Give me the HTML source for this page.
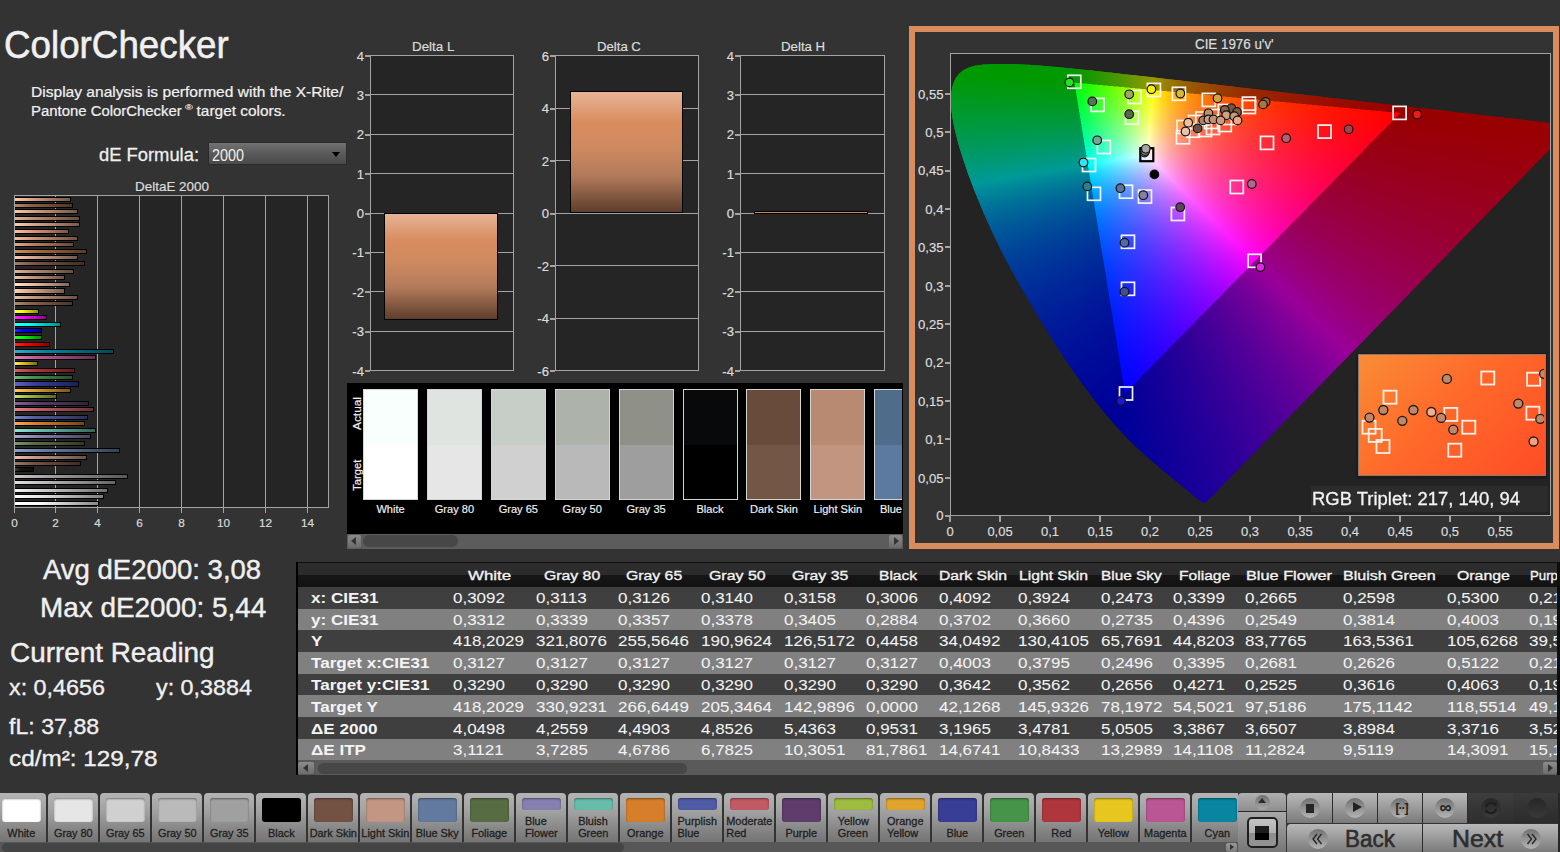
<!DOCTYPE html>
<html><head><meta charset="utf-8"><title>ColorChecker</title>
<style>
html,body{margin:0;padding:0;}
body{width:1560px;height:852px;position:relative;overflow:hidden;background:#333333;font-family:"Liberation Sans",sans-serif;}
.t{position:absolute;white-space:pre;transform-origin:0 0;}
.fb rect{width:9px;height:9px;}
</style></head><body>
<div class="t" style="left:3.80px;top:26.38px;font-size:38.52px;line-height:38.52px;color:#f0f0f0;transform:scaleX(0.9543);-webkit-text-stroke:0.58px #f0f0f0;">ColorChecker</div>
<div class="t" style="left:31.00px;top:83.65px;font-size:15.41px;line-height:15.41px;color:#f0f0f0;transform:scaleX(1.0103);-webkit-text-stroke:0.23px #f0f0f0;">Display analysis is performed with the X-Rite/</div>
<div class="t" style="left:31.00px;top:103.05px;font-size:15.41px;line-height:15.41px;color:#f0f0f0;transform:scaleX(0.9674);-webkit-text-stroke:0.23px #f0f0f0;">Pantone ColorChecker</div>
<div class="t" style="left:184.60px;top:103.93px;font-size:7.99px;line-height:7.99px;color:#f0f0f0;transform:scaleX(1.3239);-webkit-text-stroke:0.12px #f0f0f0;">®</div>
<div class="t" style="left:196.60px;top:103.05px;font-size:15.41px;line-height:15.41px;color:#f0f0f0;-webkit-text-stroke:0.23px #f0f0f0;">target colors.</div>
<div class="t" style="left:99.30px;top:145.57px;font-size:18.46px;line-height:18.46px;color:#f0f0f0;transform:scaleX(0.9957);-webkit-text-stroke:0.28px #f0f0f0;">dE Formula:</div>
<div style="position:absolute;left:207.50px;top:141.50px;width:139.00px;height:23.50px;box-sizing:border-box;border:1px solid #2a2a2a;background:linear-gradient(#727272,#5a5a5a 50%,#4a4a4a);"></div>
<div class="t" style="left:212.20px;top:148.01px;font-size:15.70px;line-height:15.70px;color:#f0f0f0;transform:scaleX(0.9162);-webkit-text-stroke:0px;">2000</div>
<div style="position:absolute;left:332px;top:152px;width:0;height:0;border-left:4.5px solid transparent;border-right:4.5px solid transparent;border-top:5px solid #000;"></div>
<div class="t" style="left:134.70px;top:180.08px;font-size:13.37px;line-height:13.37px;color:#dcdcdc;transform:scaleX(1.0068);-webkit-text-stroke:0.20px #dcdcdc;">DeltaE 2000</div>
<div style="position:absolute;left:14.00px;top:195.00px;width:315.00px;height:313.00px;box-sizing:border-box;background:#252525;border:1px solid #a3a3a3;"></div>
<div style="position:absolute;left:55.00px;top:195.00px;width:1.00px;height:313.00px;background:#a3a3a3;"></div>
<div style="position:absolute;left:97.00px;top:195.00px;width:1.00px;height:313.00px;background:#a3a3a3;"></div>
<div style="position:absolute;left:139.00px;top:195.00px;width:1.00px;height:313.00px;background:#a3a3a3;"></div>
<div style="position:absolute;left:181.00px;top:195.00px;width:1.00px;height:313.00px;background:#a3a3a3;"></div>
<div style="position:absolute;left:223.00px;top:195.00px;width:1.00px;height:313.00px;background:#a3a3a3;"></div>
<div style="position:absolute;left:265.00px;top:195.00px;width:1.00px;height:313.00px;background:#a3a3a3;"></div>
<div style="position:absolute;left:307.00px;top:195.00px;width:1.00px;height:313.00px;background:#a3a3a3;"></div>
<div style="position:absolute;left:14.00px;top:508.00px;width:1.00px;height:5.00px;background:#a3a3a3;"></div>
<div class="t" style="left:11.23px;top:517.43px;font-size:11.77px;line-height:11.77px;color:#dcdcdc;-webkit-text-stroke:0.18px #dcdcdc;">0</div>
<div style="position:absolute;left:55.00px;top:508.00px;width:1.00px;height:5.00px;background:#a3a3a3;"></div>
<div class="t" style="left:52.23px;top:517.43px;font-size:11.77px;line-height:11.77px;color:#dcdcdc;-webkit-text-stroke:0.18px #dcdcdc;">2</div>
<div style="position:absolute;left:97.00px;top:508.00px;width:1.00px;height:5.00px;background:#a3a3a3;"></div>
<div class="t" style="left:94.23px;top:517.43px;font-size:11.77px;line-height:11.77px;color:#dcdcdc;-webkit-text-stroke:0.18px #dcdcdc;">4</div>
<div style="position:absolute;left:139.00px;top:508.00px;width:1.00px;height:5.00px;background:#a3a3a3;"></div>
<div class="t" style="left:136.23px;top:517.43px;font-size:11.77px;line-height:11.77px;color:#dcdcdc;-webkit-text-stroke:0.18px #dcdcdc;">6</div>
<div style="position:absolute;left:181.00px;top:508.00px;width:1.00px;height:5.00px;background:#a3a3a3;"></div>
<div class="t" style="left:178.23px;top:517.43px;font-size:11.77px;line-height:11.77px;color:#dcdcdc;-webkit-text-stroke:0.18px #dcdcdc;">8</div>
<div style="position:absolute;left:223.00px;top:508.00px;width:1.00px;height:5.00px;background:#a3a3a3;"></div>
<div class="t" style="left:216.95px;top:517.43px;font-size:11.77px;line-height:11.77px;color:#dcdcdc;-webkit-text-stroke:0.18px #dcdcdc;">10</div>
<div style="position:absolute;left:265.00px;top:508.00px;width:1.00px;height:5.00px;background:#a3a3a3;"></div>
<div class="t" style="left:258.95px;top:517.43px;font-size:11.77px;line-height:11.77px;color:#dcdcdc;-webkit-text-stroke:0.18px #dcdcdc;">12</div>
<div style="position:absolute;left:307.00px;top:508.00px;width:1.00px;height:5.00px;background:#a3a3a3;"></div>
<div class="t" style="left:300.95px;top:517.43px;font-size:11.77px;line-height:11.77px;color:#dcdcdc;-webkit-text-stroke:0.18px #dcdcdc;">14</div>
<div style="position:absolute;left:15px;top:500.50px;width:84.27px;height:5.2px;box-sizing:border-box;border:1px solid #000;border-width:1.2px 1px 1.5px 0;background:linear-gradient(90deg,rgb(255,255,255),rgb(250,250,250) 30%,rgb(137,137,137));"></div>
<div style="position:absolute;left:15px;top:494.00px;width:88.66px;height:5.2px;box-sizing:border-box;border:1px solid #000;border-width:1.2px 1px 1.5px 0;background:linear-gradient(90deg,rgb(255,255,255),rgb(228,228,228) 30%,rgb(125,125,125));"></div>
<div style="position:absolute;left:15px;top:487.60px;width:93.48px;height:5.2px;box-sizing:border-box;border:1px solid #000;border-width:1.2px 1px 1.5px 0;background:linear-gradient(90deg,rgb(245,245,245),rgb(205,205,205) 30%,rgb(112,112,112));"></div>
<div style="position:absolute;left:15px;top:480.20px;width:101.01px;height:5.2px;box-sizing:border-box;border:1px solid #000;border-width:1.2px 1px 1.5px 0;background:linear-gradient(90deg,rgb(225,225,225),rgb(185,185,185) 30%,rgb(101,101,101));"></div>
<div style="position:absolute;left:15px;top:473.80px;width:113.36px;height:5.2px;box-sizing:border-box;border:1px solid #000;border-width:1.2px 1px 1.5px 0;background:linear-gradient(90deg,rgb(200,200,200),rgb(160,160,160) 30%,rgb(88,88,88));"></div>
<div style="position:absolute;left:15px;top:466.70px;width:19.38px;height:5.2px;box-sizing:border-box;border:1px solid #000;border-width:1.2px 1px 1.5px 0;background:linear-gradient(90deg,rgb(60,60,60),rgb(20,20,20) 30%,rgb(11,11,11));"></div>
<div style="position:absolute;left:15px;top:460.60px;width:66.48px;height:5.2px;box-sizing:border-box;border:1px solid #000;border-width:1.2px 1px 1.5px 0;background:linear-gradient(90deg,rgb(155,122,108),rgb(115,82,68) 30%,rgb(63,45,37));"></div>
<div style="position:absolute;left:15px;top:454.60px;width:72.34px;height:5.2px;box-sizing:border-box;border:1px solid #000;border-width:1.2px 1px 1.5px 0;background:linear-gradient(90deg,rgb(234,190,170),rgb(194,150,130) 30%,rgb(106,82,71));"></div>
<div style="position:absolute;left:15px;top:447.90px;width:105.20px;height:5.2px;box-sizing:border-box;border:1px solid #000;border-width:1.2px 1px 1.5px 0;background:linear-gradient(90deg,rgb(138,162,197),rgb(98,122,157) 30%,rgb(53,67,86));"></div>
<div style="position:absolute;left:15px;top:440.60px;width:70.45px;height:5.2px;box-sizing:border-box;border:1px solid #000;border-width:1.2px 1px 1.5px 0;background:linear-gradient(90deg,rgb(127,148,107),rgb(87,108,67) 30%,rgb(47,59,36));"></div>
<div style="position:absolute;left:15px;top:434.10px;width:75.89px;height:5.2px;box-sizing:border-box;border:1px solid #000;border-width:1.2px 1px 1.5px 0;background:linear-gradient(90deg,rgb(173,168,217),rgb(133,128,177) 30%,rgb(73,70,97));"></div>
<div style="position:absolute;left:15px;top:427.60px;width:81.13px;height:5.2px;box-sizing:border-box;border:1px solid #000;border-width:1.2px 1px 1.5px 0;background:linear-gradient(90deg,rgb(143,229,210),rgb(103,189,170) 30%,rgb(56,103,93));"></div>
<div style="position:absolute;left:15px;top:421.10px;width:70.03px;height:5.2px;box-sizing:border-box;border:1px solid #000;border-width:1.2px 1px 1.5px 0;background:linear-gradient(90deg,rgb(254,166,84),rgb(214,126,44) 30%,rgb(117,69,24));"></div>
<div style="position:absolute;left:15px;top:415.00px;width:73.17px;height:5.2px;box-sizing:border-box;border:1px solid #000;border-width:1.2px 1px 1.5px 0;background:linear-gradient(90deg,rgb(120,131,206),rgb(80,91,166) 30%,rgb(44,50,91));"></div>
<div style="position:absolute;left:15px;top:407.20px;width:79.03px;height:5.2px;box-sizing:border-box;border:1px solid #000;border-width:1.2px 1px 1.5px 0;background:linear-gradient(90deg,rgb(233,130,139),rgb(193,90,99) 30%,rgb(106,49,54));"></div>
<div style="position:absolute;left:15px;top:400.80px;width:74.22px;height:5.2px;box-sizing:border-box;border:1px solid #000;border-width:1.2px 1px 1.5px 0;background:linear-gradient(90deg,rgb(134,100,148),rgb(94,60,108) 30%,rgb(51,33,59));"></div>
<div style="position:absolute;left:15px;top:394.20px;width:41.78px;height:5.2px;box-sizing:border-box;border:1px solid #000;border-width:1.2px 1px 1.5px 0;background:linear-gradient(90deg,rgb(197,228,104),rgb(157,188,64) 30%,rgb(86,103,35));"></div>
<div style="position:absolute;left:15px;top:388.00px;width:56.01px;height:5.2px;box-sizing:border-box;border:1px solid #000;border-width:1.2px 1px 1.5px 0;background:linear-gradient(90deg,rgb(255,203,86),rgb(224,163,46) 30%,rgb(123,89,25));"></div>
<div style="position:absolute;left:15px;top:381.40px;width:63.96px;height:5.2px;box-sizing:border-box;border:1px solid #000;border-width:1.2px 1px 1.5px 0;background:linear-gradient(90deg,rgb(96,101,190),rgb(56,61,150) 30%,rgb(30,33,82));"></div>
<div style="position:absolute;left:15px;top:374.70px;width:58.10px;height:5.2px;box-sizing:border-box;border:1px solid #000;border-width:1.2px 1px 1.5px 0;background:linear-gradient(90deg,rgb(110,188,113),rgb(70,148,73) 30%,rgb(38,81,40));"></div>
<div style="position:absolute;left:15px;top:367.50px;width:59.99px;height:5.2px;box-sizing:border-box;border:1px solid #000;border-width:1.2px 1px 1.5px 0;background:linear-gradient(90deg,rgb(215,94,100),rgb(175,54,60) 30%,rgb(96,29,33));"></div>
<div style="position:absolute;left:15px;top:360.90px;width:22.52px;height:5.2px;box-sizing:border-box;border:1px solid #000;border-width:1.2px 1px 1.5px 0;background:linear-gradient(90deg,rgb(255,239,71),rgb(231,199,31) 30%,rgb(127,109,17));"></div>
<div style="position:absolute;left:15px;top:355.00px;width:81.13px;height:5.2px;box-sizing:border-box;border:1px solid #000;border-width:1.2px 1px 1.5px 0;background:linear-gradient(90deg,rgb(227,126,189),rgb(187,86,149) 30%,rgb(102,47,81));"></div>
<div style="position:absolute;left:15px;top:348.60px;width:98.50px;height:5.2px;box-sizing:border-box;border:1px solid #000;border-width:1.2px 1px 1.5px 0;background:linear-gradient(90deg,rgb(48,173,201),rgb(8,133,161) 30%,rgb(4,73,88));"></div>
<div style="position:absolute;left:15px;top:342.00px;width:34.66px;height:5.2px;box-sizing:border-box;border:1px solid #000;border-width:1.2px 1px 1.5px 0;background:linear-gradient(90deg,rgb(255,40,40),rgb(255,0,0) 30%,rgb(140,0,0));"></div>
<div style="position:absolute;left:15px;top:334.50px;width:26.71px;height:5.2px;box-sizing:border-box;border:1px solid #000;border-width:1.2px 1px 1.5px 0;background:linear-gradient(90deg,rgb(40,255,40),rgb(0,255,0) 30%,rgb(0,140,0));"></div>
<div style="position:absolute;left:15px;top:327.90px;width:26.71px;height:5.2px;box-sizing:border-box;border:1px solid #000;border-width:1.2px 1px 1.5px 0;background:linear-gradient(90deg,rgb(40,40,255),rgb(0,0,255) 30%,rgb(0,0,140));"></div>
<div style="position:absolute;left:15px;top:321.50px;width:45.55px;height:5.2px;box-sizing:border-box;border:1px solid #000;border-width:1.2px 1px 1.5px 0;background:linear-gradient(90deg,rgb(40,255,255),rgb(0,255,255) 30%,rgb(0,140,140));"></div>
<div style="position:absolute;left:15px;top:315.00px;width:31.52px;height:5.2px;box-sizing:border-box;border:1px solid #000;border-width:1.2px 1px 1.5px 0;background:linear-gradient(90deg,rgb(255,40,255),rgb(255,0,255) 30%,rgb(140,0,140));"></div>
<div style="position:absolute;left:15px;top:309.00px;width:23.57px;height:5.2px;box-sizing:border-box;border:1px solid #000;border-width:1.2px 1px 1.5px 0;background:linear-gradient(90deg,rgb(255,255,40),rgb(255,255,0) 30%,rgb(140,140,0));"></div>
<div style="position:absolute;left:15px;top:300.90px;width:57.69px;height:5.2px;box-sizing:border-box;border:1px solid #000;border-width:1.2px 1px 1.5px 0;background:linear-gradient(90deg,rgb(175,138,115),rgb(135,98,75) 30%,rgb(74,53,41));"></div>
<div style="position:absolute;left:15px;top:294.70px;width:62.92px;height:5.2px;box-sizing:border-box;border:1px solid #000;border-width:1.2px 1px 1.5px 0;background:linear-gradient(90deg,rgb(240,190,160),rgb(200,150,120) 30%,rgb(110,82,66));"></div>
<div style="position:absolute;left:15px;top:288.40px;width:49.94px;height:5.2px;box-sizing:border-box;border:1px solid #000;border-width:1.2px 1px 1.5px 0;background:linear-gradient(90deg,rgb(255,210,180),rgb(220,170,140) 30%,rgb(121,93,77));"></div>
<div style="position:absolute;left:15px;top:281.80px;width:54.96px;height:5.2px;box-sizing:border-box;border:1px solid #000;border-width:1.2px 1px 1.5px 0;background:linear-gradient(90deg,rgb(255,230,205),rgb(235,190,165) 30%,rgb(129,104,90));"></div>
<div style="position:absolute;left:15px;top:275.20px;width:49.94px;height:5.2px;box-sizing:border-box;border:1px solid #000;border-width:1.2px 1px 1.5px 0;background:linear-gradient(90deg,rgb(240,195,170),rgb(200,155,130) 30%,rgb(110,85,71));"></div>
<div style="position:absolute;left:15px;top:269.00px;width:58.94px;height:5.2px;box-sizing:border-box;border:1px solid #000;border-width:1.2px 1px 1.5px 0;background:linear-gradient(90deg,rgb(225,180,150),rgb(185,140,110) 30%,rgb(101,77,60));"></div>
<div style="position:absolute;left:15px;top:261.30px;width:70.03px;height:5.2px;box-sizing:border-box;border:1px solid #000;border-width:1.2px 1px 1.5px 0;background:linear-gradient(90deg,rgb(160,125,105),rgb(120,85,65) 30%,rgb(66,46,35));"></div>
<div style="position:absolute;left:15px;top:255.00px;width:62.92px;height:5.2px;box-sizing:border-box;border:1px solid #000;border-width:1.2px 1px 1.5px 0;background:linear-gradient(90deg,rgb(250,205,180),rgb(210,165,140) 30%,rgb(115,90,77));"></div>
<div style="position:absolute;left:15px;top:249.10px;width:72.13px;height:5.2px;box-sizing:border-box;border:1px solid #000;border-width:1.2px 1px 1.5px 0;background:linear-gradient(90deg,rgb(210,145,100),rgb(170,105,60) 30%,rgb(93,57,33));"></div>
<div style="position:absolute;left:15px;top:242.30px;width:58.94px;height:5.2px;box-sizing:border-box;border:1px solid #000;border-width:1.2px 1px 1.5px 0;background:linear-gradient(90deg,rgb(225,170,140),rgb(185,130,100) 30%,rgb(101,71,55));"></div>
<div style="position:absolute;left:15px;top:236.00px;width:62.92px;height:5.2px;box-sizing:border-box;border:1px solid #000;border-width:1.2px 1px 1.5px 0;background:linear-gradient(90deg,rgb(245,190,160),rgb(205,150,120) 30%,rgb(112,82,66));"></div>
<div style="position:absolute;left:15px;top:228.50px;width:53.92px;height:5.2px;box-sizing:border-box;border:1px solid #000;border-width:1.2px 1px 1.5px 0;background:linear-gradient(90deg,rgb(255,190,160),rgb(232,150,120) 30%,rgb(127,82,66));"></div>
<div style="position:absolute;left:15px;top:222.10px;width:65.01px;height:5.2px;box-sizing:border-box;border:1px solid #000;border-width:1.2px 1px 1.5px 0;background:linear-gradient(90deg,rgb(255,205,180),rgb(215,165,140) 30%,rgb(118,90,77));"></div>
<div style="position:absolute;left:15px;top:215.50px;width:65.01px;height:5.2px;box-sizing:border-box;border:1px solid #000;border-width:1.2px 1px 1.5px 0;background:linear-gradient(90deg,rgb(230,180,150),rgb(190,140,110) 30%,rgb(104,77,60));"></div>
<div style="position:absolute;left:15px;top:209.00px;width:62.92px;height:5.2px;box-sizing:border-box;border:1px solid #000;border-width:1.2px 1px 1.5px 0;background:linear-gradient(90deg,rgb(250,200,170),rgb(210,160,130) 30%,rgb(115,88,71));"></div>
<div style="position:absolute;left:15px;top:203.00px;width:57.69px;height:5.2px;box-sizing:border-box;border:1px solid #000;border-width:1.2px 1px 1.5px 0;background:linear-gradient(90deg,rgb(180,136,112),rgb(140,96,72) 30%,rgb(77,52,39));"></div>
<div style="position:absolute;left:15px;top:196.60px;width:56.01px;height:5.2px;box-sizing:border-box;border:1px solid #000;border-width:1.2px 1px 1.5px 0;background:linear-gradient(90deg,rgb(255,200,170),rgb(215,160,130) 30%,rgb(118,88,71));"></div>
<div class="t" style="left:412.40px;top:40.67px;font-size:12.79px;line-height:12.79px;color:#dcdcdc;transform:scaleX(1.0464);-webkit-text-stroke:0.19px #dcdcdc;">Delta L</div>
<div style="position:absolute;left:370.00px;top:55.00px;width:144.00px;height:316.00px;box-sizing:border-box;background:#252525;border:1px solid #a3a3a3;"></div>
<div style="position:absolute;left:365.00px;top:55.00px;width:5.00px;height:1.50px;background:#a3a3a3;"></div>
<div class="t" style="left:356.73px;top:49.52px;font-size:13.08px;line-height:13.08px;color:#dcdcdc;-webkit-text-stroke:0.20px #dcdcdc;">4</div>
<div style="position:absolute;left:370.00px;top:94.00px;width:143.00px;height:1.00px;background:#a3a3a3;"></div>
<div style="position:absolute;left:365.00px;top:94.00px;width:5.00px;height:1.50px;background:#a3a3a3;"></div>
<div class="t" style="left:356.73px;top:88.90px;font-size:13.08px;line-height:13.08px;color:#dcdcdc;-webkit-text-stroke:0.20px #dcdcdc;">3</div>
<div style="position:absolute;left:370.00px;top:134.00px;width:143.00px;height:1.00px;background:#a3a3a3;"></div>
<div style="position:absolute;left:365.00px;top:134.00px;width:5.00px;height:1.50px;background:#a3a3a3;"></div>
<div class="t" style="left:356.73px;top:128.27px;font-size:13.08px;line-height:13.08px;color:#dcdcdc;-webkit-text-stroke:0.20px #dcdcdc;">2</div>
<div style="position:absolute;left:370.00px;top:173.00px;width:143.00px;height:1.00px;background:#a3a3a3;"></div>
<div style="position:absolute;left:365.00px;top:173.00px;width:5.00px;height:1.50px;background:#a3a3a3;"></div>
<div class="t" style="left:356.73px;top:167.65px;font-size:13.08px;line-height:13.08px;color:#dcdcdc;-webkit-text-stroke:0.20px #dcdcdc;">1</div>
<div style="position:absolute;left:370.00px;top:213.00px;width:143.00px;height:1.00px;background:#a3a3a3;"></div>
<div style="position:absolute;left:365.00px;top:213.00px;width:5.00px;height:1.50px;background:#a3a3a3;"></div>
<div class="t" style="left:356.73px;top:207.02px;font-size:13.08px;line-height:13.08px;color:#dcdcdc;-webkit-text-stroke:0.20px #dcdcdc;">0</div>
<div style="position:absolute;left:370.00px;top:252.00px;width:143.00px;height:1.00px;background:#a3a3a3;"></div>
<div style="position:absolute;left:365.00px;top:252.00px;width:5.00px;height:1.50px;background:#a3a3a3;"></div>
<div class="t" style="left:352.37px;top:246.40px;font-size:13.08px;line-height:13.08px;color:#dcdcdc;-webkit-text-stroke:0.20px #dcdcdc;">-1</div>
<div style="position:absolute;left:370.00px;top:291.00px;width:143.00px;height:1.00px;background:#a3a3a3;"></div>
<div style="position:absolute;left:365.00px;top:291.00px;width:5.00px;height:1.50px;background:#a3a3a3;"></div>
<div class="t" style="left:352.37px;top:285.77px;font-size:13.08px;line-height:13.08px;color:#dcdcdc;-webkit-text-stroke:0.20px #dcdcdc;">-2</div>
<div style="position:absolute;left:370.00px;top:331.00px;width:143.00px;height:1.00px;background:#a3a3a3;"></div>
<div style="position:absolute;left:365.00px;top:331.00px;width:5.00px;height:1.50px;background:#a3a3a3;"></div>
<div class="t" style="left:352.37px;top:325.15px;font-size:13.08px;line-height:13.08px;color:#dcdcdc;-webkit-text-stroke:0.20px #dcdcdc;">-3</div>
<div style="position:absolute;left:365.00px;top:370.00px;width:5.00px;height:1.50px;background:#a3a3a3;"></div>
<div class="t" style="left:352.37px;top:364.52px;font-size:13.08px;line-height:13.08px;color:#dcdcdc;-webkit-text-stroke:0.20px #dcdcdc;">-4</div>
<div style="position:absolute;left:384.4px;top:213.0px;width:114.1px;height:106.7px;box-sizing:border-box;border:1px solid #000;background:linear-gradient(#e6b496,#d98c5e 25%,#d08a60 45%,#b27a5a 70%,#5e3e2c);"></div>
<div class="t" style="left:596.50px;top:40.67px;font-size:12.79px;line-height:12.79px;color:#dcdcdc;transform:scaleX(1.0294);-webkit-text-stroke:0.19px #dcdcdc;">Delta C</div>
<div style="position:absolute;left:555.00px;top:55.00px;width:144.00px;height:316.00px;box-sizing:border-box;background:#252525;border:1px solid #a3a3a3;"></div>
<div style="position:absolute;left:550.00px;top:55.00px;width:5.00px;height:1.50px;background:#a3a3a3;"></div>
<div class="t" style="left:541.73px;top:49.52px;font-size:13.08px;line-height:13.08px;color:#dcdcdc;-webkit-text-stroke:0.20px #dcdcdc;">6</div>
<div style="position:absolute;left:555.00px;top:108.00px;width:143.00px;height:1.00px;background:#a3a3a3;"></div>
<div style="position:absolute;left:550.00px;top:108.00px;width:5.00px;height:1.50px;background:#a3a3a3;"></div>
<div class="t" style="left:541.73px;top:102.02px;font-size:13.08px;line-height:13.08px;color:#dcdcdc;-webkit-text-stroke:0.20px #dcdcdc;">4</div>
<div style="position:absolute;left:555.00px;top:160.00px;width:143.00px;height:1.00px;background:#a3a3a3;"></div>
<div style="position:absolute;left:550.00px;top:160.00px;width:5.00px;height:1.50px;background:#a3a3a3;"></div>
<div class="t" style="left:541.73px;top:154.52px;font-size:13.08px;line-height:13.08px;color:#dcdcdc;-webkit-text-stroke:0.20px #dcdcdc;">2</div>
<div style="position:absolute;left:555.00px;top:213.00px;width:143.00px;height:1.00px;background:#a3a3a3;"></div>
<div style="position:absolute;left:550.00px;top:213.00px;width:5.00px;height:1.50px;background:#a3a3a3;"></div>
<div class="t" style="left:541.73px;top:207.02px;font-size:13.08px;line-height:13.08px;color:#dcdcdc;-webkit-text-stroke:0.20px #dcdcdc;">0</div>
<div style="position:absolute;left:555.00px;top:265.00px;width:143.00px;height:1.00px;background:#a3a3a3;"></div>
<div style="position:absolute;left:550.00px;top:265.00px;width:5.00px;height:1.50px;background:#a3a3a3;"></div>
<div class="t" style="left:537.37px;top:259.52px;font-size:13.08px;line-height:13.08px;color:#dcdcdc;-webkit-text-stroke:0.20px #dcdcdc;">-2</div>
<div style="position:absolute;left:555.00px;top:318.00px;width:143.00px;height:1.00px;background:#a3a3a3;"></div>
<div style="position:absolute;left:550.00px;top:318.00px;width:5.00px;height:1.50px;background:#a3a3a3;"></div>
<div class="t" style="left:537.37px;top:312.02px;font-size:13.08px;line-height:13.08px;color:#dcdcdc;-webkit-text-stroke:0.20px #dcdcdc;">-4</div>
<div style="position:absolute;left:550.00px;top:370.00px;width:5.00px;height:1.50px;background:#a3a3a3;"></div>
<div class="t" style="left:537.37px;top:364.52px;font-size:13.08px;line-height:13.08px;color:#dcdcdc;-webkit-text-stroke:0.20px #dcdcdc;">-6</div>
<div style="position:absolute;left:569.5px;top:90.7px;width:113.7px;height:122.3px;box-sizing:border-box;border:1px solid #000;background:linear-gradient(#e6b496,#d98c5e 25%,#d08a60 45%,#b27a5a 70%,#5e3e2c);"></div>
<div class="t" style="left:781.20px;top:40.67px;font-size:12.79px;line-height:12.79px;color:#dcdcdc;transform:scaleX(1.0365);-webkit-text-stroke:0.19px #dcdcdc;">Delta H</div>
<div style="position:absolute;left:740.00px;top:55.00px;width:145.00px;height:316.00px;box-sizing:border-box;background:#252525;border:1px solid #a3a3a3;"></div>
<div style="position:absolute;left:735.00px;top:55.00px;width:5.00px;height:1.50px;background:#a3a3a3;"></div>
<div class="t" style="left:726.73px;top:49.52px;font-size:13.08px;line-height:13.08px;color:#dcdcdc;-webkit-text-stroke:0.20px #dcdcdc;">4</div>
<div style="position:absolute;left:740.00px;top:94.00px;width:144.00px;height:1.00px;background:#a3a3a3;"></div>
<div style="position:absolute;left:735.00px;top:94.00px;width:5.00px;height:1.50px;background:#a3a3a3;"></div>
<div class="t" style="left:726.73px;top:88.90px;font-size:13.08px;line-height:13.08px;color:#dcdcdc;-webkit-text-stroke:0.20px #dcdcdc;">3</div>
<div style="position:absolute;left:740.00px;top:134.00px;width:144.00px;height:1.00px;background:#a3a3a3;"></div>
<div style="position:absolute;left:735.00px;top:134.00px;width:5.00px;height:1.50px;background:#a3a3a3;"></div>
<div class="t" style="left:726.73px;top:128.27px;font-size:13.08px;line-height:13.08px;color:#dcdcdc;-webkit-text-stroke:0.20px #dcdcdc;">2</div>
<div style="position:absolute;left:740.00px;top:173.00px;width:144.00px;height:1.00px;background:#a3a3a3;"></div>
<div style="position:absolute;left:735.00px;top:173.00px;width:5.00px;height:1.50px;background:#a3a3a3;"></div>
<div class="t" style="left:726.73px;top:167.65px;font-size:13.08px;line-height:13.08px;color:#dcdcdc;-webkit-text-stroke:0.20px #dcdcdc;">1</div>
<div style="position:absolute;left:740.00px;top:213.00px;width:144.00px;height:1.00px;background:#a3a3a3;"></div>
<div style="position:absolute;left:735.00px;top:213.00px;width:5.00px;height:1.50px;background:#a3a3a3;"></div>
<div class="t" style="left:726.73px;top:207.02px;font-size:13.08px;line-height:13.08px;color:#dcdcdc;-webkit-text-stroke:0.20px #dcdcdc;">0</div>
<div style="position:absolute;left:740.00px;top:252.00px;width:144.00px;height:1.00px;background:#a3a3a3;"></div>
<div style="position:absolute;left:735.00px;top:252.00px;width:5.00px;height:1.50px;background:#a3a3a3;"></div>
<div class="t" style="left:722.37px;top:246.40px;font-size:13.08px;line-height:13.08px;color:#dcdcdc;-webkit-text-stroke:0.20px #dcdcdc;">-1</div>
<div style="position:absolute;left:740.00px;top:291.00px;width:144.00px;height:1.00px;background:#a3a3a3;"></div>
<div style="position:absolute;left:735.00px;top:291.00px;width:5.00px;height:1.50px;background:#a3a3a3;"></div>
<div class="t" style="left:722.37px;top:285.77px;font-size:13.08px;line-height:13.08px;color:#dcdcdc;-webkit-text-stroke:0.20px #dcdcdc;">-2</div>
<div style="position:absolute;left:740.00px;top:331.00px;width:144.00px;height:1.00px;background:#a3a3a3;"></div>
<div style="position:absolute;left:735.00px;top:331.00px;width:5.00px;height:1.50px;background:#a3a3a3;"></div>
<div class="t" style="left:722.37px;top:325.15px;font-size:13.08px;line-height:13.08px;color:#dcdcdc;-webkit-text-stroke:0.20px #dcdcdc;">-3</div>
<div style="position:absolute;left:735.00px;top:370.00px;width:5.00px;height:1.50px;background:#a3a3a3;"></div>
<div class="t" style="left:722.37px;top:364.52px;font-size:13.08px;line-height:13.08px;color:#dcdcdc;-webkit-text-stroke:0.20px #dcdcdc;">-4</div>
<div style="position:absolute;left:754.2px;top:210.6px;width:114.1px;height:3.0px;box-sizing:border-box;border:1px solid #000;background:linear-gradient(#e6b496,#d98c5e 25%,#d08a60 45%,#b27a5a 70%,#5e3e2c);"></div>
<div style="position:absolute;left:347.00px;top:383.00px;width:556.00px;height:151.00px;background:#000;"></div>
<div style="position:absolute;left:347px;top:383px;width:555px;height:150px;overflow:hidden;">
<div style="position:absolute;left:16.00px;top:6px;width:55px;height:111px;box-sizing:border-box;border:1px solid #d4d4d4;background:linear-gradient(#f8fffc 50%,#ffffff 50%);"></div>
<div class="t" style="left:29.38px;top:120.95px;font-size:11.05px;line-height:11.05px;color:#f0f0f0;-webkit-text-stroke:0.17px #f0f0f0;">White</div>
<div style="position:absolute;left:79.90px;top:6px;width:55px;height:111px;box-sizing:border-box;border:1px solid #d4d4d4;background:linear-gradient(#dfe4e0 50%,#e6e6e6 50%);"></div>
<div class="t" style="left:87.75px;top:120.95px;font-size:11.05px;line-height:11.05px;color:#f0f0f0;-webkit-text-stroke:0.17px #f0f0f0;">Gray 80</div>
<div style="position:absolute;left:143.80px;top:6px;width:55px;height:111px;box-sizing:border-box;border:1px solid #d4d4d4;background:linear-gradient(#c7cec8 50%,#d0d0d0 50%);"></div>
<div class="t" style="left:151.65px;top:120.95px;font-size:11.05px;line-height:11.05px;color:#f0f0f0;-webkit-text-stroke:0.17px #f0f0f0;">Gray 65</div>
<div style="position:absolute;left:207.70px;top:6px;width:55px;height:111px;box-sizing:border-box;border:1px solid #d4d4d4;background:linear-gradient(#adb2ab 50%,#b9b9b9 50%);"></div>
<div class="t" style="left:215.55px;top:120.95px;font-size:11.05px;line-height:11.05px;color:#f0f0f0;-webkit-text-stroke:0.17px #f0f0f0;">Gray 50</div>
<div style="position:absolute;left:271.60px;top:6px;width:55px;height:111px;box-sizing:border-box;border:1px solid #d4d4d4;background:linear-gradient(#8f9189 50%,#9e9e9e 50%);"></div>
<div class="t" style="left:279.45px;top:120.95px;font-size:11.05px;line-height:11.05px;color:#f0f0f0;-webkit-text-stroke:0.17px #f0f0f0;">Gray 35</div>
<div style="position:absolute;left:335.50px;top:6px;width:55px;height:111px;box-sizing:border-box;border:1px solid #d4d4d4;background:linear-gradient(#08090b 50%,#000000 50%);"></div>
<div class="t" style="left:349.48px;top:120.95px;font-size:11.05px;line-height:11.05px;color:#f0f0f0;-webkit-text-stroke:0.17px #f0f0f0;">Black</div>
<div style="position:absolute;left:399.40px;top:6px;width:55px;height:111px;box-sizing:border-box;border:1px solid #d4d4d4;background:linear-gradient(#694b3c 50%,#745646 50%);"></div>
<div class="t" style="left:402.96px;top:120.95px;font-size:11.05px;line-height:11.05px;color:#f0f0f0;-webkit-text-stroke:0.17px #f0f0f0;">Dark Skin</div>
<div style="position:absolute;left:463.30px;top:6px;width:55px;height:111px;box-sizing:border-box;border:1px solid #d4d4d4;background:linear-gradient(#b98a72 50%,#c29580 50%);"></div>
<div class="t" style="left:466.54px;top:120.95px;font-size:11.05px;line-height:11.05px;color:#f0f0f0;-webkit-text-stroke:0.17px #f0f0f0;">Light Skin</div>
<div style="position:absolute;left:527.20px;top:6px;width:55px;height:111px;box-sizing:border-box;border:1px solid #d4d4d4;background:linear-gradient(#4f6c8a 50%,#5c7aa0 50%);"></div>
<div class="t" style="left:532.90px;top:120.95px;font-size:11.05px;line-height:11.05px;color:#f0f0f0;-webkit-text-stroke:0.17px #f0f0f0;">Blue Sky</div>
</div>
<div style="position:absolute;left:338.5px;top:406.5px;width:34px;height:14px;transform:rotate(-90deg);transform-origin:center;"><div class="t" style="left:0.50px;top:1.65px;font-size:11.63px;line-height:11.63px;color:#f0f0f0;transform:scaleX(1.0212);-webkit-text-stroke:0.17px #f0f0f0;">Actual</div></div>
<div style="position:absolute;left:338.5px;top:468px;width:34px;height:14px;transform:rotate(-90deg);transform-origin:center;"><div class="t" style="left:1.35px;top:1.65px;font-size:11.63px;line-height:11.63px;color:#f0f0f0;transform:scaleX(0.9686);-webkit-text-stroke:0.17px #f0f0f0;">Target</div></div>
<div style="position:absolute;left:347.00px;top:534.00px;width:556.00px;height:15.00px;background:#5c5c5c;"></div>
<div style="position:absolute;left:348.00px;top:535.00px;width:13.00px;height:13.00px;background:linear-gradient(#8a8a8a,#6a6a6a);border-radius:2px;"></div>
<div style="position:absolute;left:351px;top:537px;width:0;height:0;border-top:4px solid transparent;border-bottom:4px solid transparent;border-right:5px solid #333;"></div>
<div style="position:absolute;left:363.00px;top:535.00px;width:95.00px;height:12.00px;background:#474747;border-radius:6px;"></div>
<div style="position:absolute;left:889.00px;top:535.00px;width:13.00px;height:13.00px;background:linear-gradient(#8a8a8a,#6a6a6a);border-radius:2px;"></div>
<div style="position:absolute;left:894px;top:537px;width:0;height:0;border-top:4px solid transparent;border-bottom:4px solid transparent;border-left:5px solid #333;"></div>
<div class="t" style="left:43.10px;top:556.06px;font-size:27.33px;line-height:27.33px;color:#f0f0f0;transform:scaleX(1.0061);-webkit-text-stroke:0.41px #f0f0f0;">Avg dE2000: 3,08</div>
<div class="t" style="left:39.50px;top:593.76px;font-size:27.33px;line-height:27.33px;color:#f0f0f0;transform:scaleX(1.0198);-webkit-text-stroke:0.41px #f0f0f0;">Max dE2000: 5,44</div>
<div class="t" style="left:9.90px;top:638.54px;font-size:27.47px;line-height:27.47px;color:#f0f0f0;transform:scaleX(1.0151);-webkit-text-stroke:0.41px #f0f0f0;">Current Reading</div>
<div class="t" style="left:9.00px;top:675.80px;font-size:22.67px;line-height:22.67px;color:#f0f0f0;transform:scaleX(1.0291);-webkit-text-stroke:0.34px #f0f0f0;">x: 0,4656</div>
<div class="t" style="left:156.20px;top:675.80px;font-size:22.67px;line-height:22.67px;color:#f0f0f0;transform:scaleX(1.0291);-webkit-text-stroke:0.34px #f0f0f0;">y: 0,3884</div>
<div class="t" style="left:9.30px;top:714.90px;font-size:22.67px;line-height:22.67px;color:#f0f0f0;transform:scaleX(1.0232);-webkit-text-stroke:0.34px #f0f0f0;">fL: 37,88</div>
<div class="t" style="left:9.30px;top:746.80px;font-size:22.67px;line-height:22.67px;color:#f0f0f0;transform:scaleX(1.0726);-webkit-text-stroke:0.34px #f0f0f0;">cd/m²: 129,78</div>
<div style="position:absolute;left:296.00px;top:562.00px;width:1264.00px;height:213.00px;background:#0e0e0e;"></div>
<div style="position:absolute;left:296px;top:562px;width:1261px;height:213px;overflow:hidden;">
<div style="position:absolute;left:2px;top:1px;width:1300px;height:24px;background:linear-gradient(#2e2e2e,#2a2a2a 50%,#161616 52%,#121212);"></div>
<div style="position:absolute;left:2px;top:25.0px;width:1300px;height:21.6px;background:#3f3f3f;"></div>
<div style="position:absolute;left:2px;top:46.6px;width:1300px;height:21.4px;background:#808080;"></div>
<div style="position:absolute;left:2px;top:68.0px;width:1300px;height:22.0px;background:#3f3f3f;"></div>
<div style="position:absolute;left:2px;top:90.0px;width:1300px;height:21.5px;background:#808080;"></div>
<div style="position:absolute;left:2px;top:111.5px;width:1300px;height:21.5px;background:#3f3f3f;"></div>
<div style="position:absolute;left:2px;top:133.0px;width:1300px;height:22.0px;background:#808080;"></div>
<div style="position:absolute;left:2px;top:155.0px;width:1300px;height:21.5px;background:#3f3f3f;"></div>
<div style="position:absolute;left:2px;top:176.5px;width:1300px;height:21.5px;background:#808080;"></div>
<div class="t" style="left:172.30px;top:7.40px;font-size:13.23px;line-height:13.23px;color:#f2f2f2;transform:scaleX(1.2778);-webkit-text-stroke:0.35px #f2f2f2;">White</div>
<div class="t" style="left:157.30px;top:29.31px;font-size:14.39px;line-height:14.39px;color:#f2f2f2;transform:scaleX(1.1813);-webkit-text-stroke:0.05px #f2f2f2;">0,3092</div>
<div class="t" style="left:157.30px;top:51.01px;font-size:14.39px;line-height:14.39px;color:#f2f2f2;transform:scaleX(1.1813);-webkit-text-stroke:0.05px #f2f2f2;">0,3312</div>
<div class="t" style="left:157.30px;top:72.41px;font-size:14.39px;line-height:14.39px;color:#f2f2f2;transform:scaleX(1.1813);-webkit-text-stroke:0.05px #f2f2f2;">418,2029</div>
<div class="t" style="left:157.30px;top:94.11px;font-size:14.39px;line-height:14.39px;color:#f2f2f2;transform:scaleX(1.1813);-webkit-text-stroke:0.05px #f2f2f2;">0,3127</div>
<div class="t" style="left:157.30px;top:115.91px;font-size:14.39px;line-height:14.39px;color:#f2f2f2;transform:scaleX(1.1813);-webkit-text-stroke:0.05px #f2f2f2;">0,3290</div>
<div class="t" style="left:157.30px;top:138.01px;font-size:14.39px;line-height:14.39px;color:#f2f2f2;transform:scaleX(1.1813);-webkit-text-stroke:0.05px #f2f2f2;">418,2029</div>
<div class="t" style="left:157.30px;top:159.81px;font-size:14.39px;line-height:14.39px;color:#f2f2f2;transform:scaleX(1.1813);-webkit-text-stroke:0.05px #f2f2f2;">4,0498</div>
<div class="t" style="left:157.30px;top:181.11px;font-size:14.39px;line-height:14.39px;color:#f2f2f2;transform:scaleX(1.1813);-webkit-text-stroke:0.05px #f2f2f2;">3,1121</div>
<div class="t" style="left:248.40px;top:7.40px;font-size:13.23px;line-height:13.23px;color:#f2f2f2;transform:scaleX(1.1945);-webkit-text-stroke:0.35px #f2f2f2;">Gray 80</div>
<div class="t" style="left:240.20px;top:29.31px;font-size:14.39px;line-height:14.39px;color:#f2f2f2;transform:scaleX(1.1813);-webkit-text-stroke:0.05px #f2f2f2;">0,3113</div>
<div class="t" style="left:240.20px;top:51.01px;font-size:14.39px;line-height:14.39px;color:#f2f2f2;transform:scaleX(1.1813);-webkit-text-stroke:0.05px #f2f2f2;">0,3339</div>
<div class="t" style="left:240.20px;top:72.41px;font-size:14.39px;line-height:14.39px;color:#f2f2f2;transform:scaleX(1.1813);-webkit-text-stroke:0.05px #f2f2f2;">321,8076</div>
<div class="t" style="left:240.20px;top:94.11px;font-size:14.39px;line-height:14.39px;color:#f2f2f2;transform:scaleX(1.1813);-webkit-text-stroke:0.05px #f2f2f2;">0,3127</div>
<div class="t" style="left:240.20px;top:115.91px;font-size:14.39px;line-height:14.39px;color:#f2f2f2;transform:scaleX(1.1813);-webkit-text-stroke:0.05px #f2f2f2;">0,3290</div>
<div class="t" style="left:240.20px;top:138.01px;font-size:14.39px;line-height:14.39px;color:#f2f2f2;transform:scaleX(1.1813);-webkit-text-stroke:0.05px #f2f2f2;">330,9231</div>
<div class="t" style="left:240.20px;top:159.81px;font-size:14.39px;line-height:14.39px;color:#f2f2f2;transform:scaleX(1.1813);-webkit-text-stroke:0.05px #f2f2f2;">4,2559</div>
<div class="t" style="left:240.20px;top:181.11px;font-size:14.39px;line-height:14.39px;color:#f2f2f2;transform:scaleX(1.1813);-webkit-text-stroke:0.05px #f2f2f2;">3,7285</div>
<div class="t" style="left:330.40px;top:7.40px;font-size:13.23px;line-height:13.23px;color:#f2f2f2;transform:scaleX(1.1945);-webkit-text-stroke:0.35px #f2f2f2;">Gray 65</div>
<div class="t" style="left:322.20px;top:29.31px;font-size:14.39px;line-height:14.39px;color:#f2f2f2;transform:scaleX(1.1813);-webkit-text-stroke:0.05px #f2f2f2;">0,3126</div>
<div class="t" style="left:322.20px;top:51.01px;font-size:14.39px;line-height:14.39px;color:#f2f2f2;transform:scaleX(1.1813);-webkit-text-stroke:0.05px #f2f2f2;">0,3357</div>
<div class="t" style="left:322.20px;top:72.41px;font-size:14.39px;line-height:14.39px;color:#f2f2f2;transform:scaleX(1.1813);-webkit-text-stroke:0.05px #f2f2f2;">255,5646</div>
<div class="t" style="left:322.20px;top:94.11px;font-size:14.39px;line-height:14.39px;color:#f2f2f2;transform:scaleX(1.1813);-webkit-text-stroke:0.05px #f2f2f2;">0,3127</div>
<div class="t" style="left:322.20px;top:115.91px;font-size:14.39px;line-height:14.39px;color:#f2f2f2;transform:scaleX(1.1813);-webkit-text-stroke:0.05px #f2f2f2;">0,3290</div>
<div class="t" style="left:322.20px;top:138.01px;font-size:14.39px;line-height:14.39px;color:#f2f2f2;transform:scaleX(1.1813);-webkit-text-stroke:0.05px #f2f2f2;">266,6449</div>
<div class="t" style="left:322.20px;top:159.81px;font-size:14.39px;line-height:14.39px;color:#f2f2f2;transform:scaleX(1.1813);-webkit-text-stroke:0.05px #f2f2f2;">4,4903</div>
<div class="t" style="left:322.20px;top:181.11px;font-size:14.39px;line-height:14.39px;color:#f2f2f2;transform:scaleX(1.1813);-webkit-text-stroke:0.05px #f2f2f2;">4,6786</div>
<div class="t" style="left:413.30px;top:7.40px;font-size:13.23px;line-height:13.23px;color:#f2f2f2;transform:scaleX(1.2030);-webkit-text-stroke:0.35px #f2f2f2;">Gray 50</div>
<div class="t" style="left:405.10px;top:29.31px;font-size:14.39px;line-height:14.39px;color:#f2f2f2;transform:scaleX(1.1813);-webkit-text-stroke:0.05px #f2f2f2;">0,3140</div>
<div class="t" style="left:405.10px;top:51.01px;font-size:14.39px;line-height:14.39px;color:#f2f2f2;transform:scaleX(1.1813);-webkit-text-stroke:0.05px #f2f2f2;">0,3378</div>
<div class="t" style="left:405.10px;top:72.41px;font-size:14.39px;line-height:14.39px;color:#f2f2f2;transform:scaleX(1.1813);-webkit-text-stroke:0.05px #f2f2f2;">190,9624</div>
<div class="t" style="left:405.10px;top:94.11px;font-size:14.39px;line-height:14.39px;color:#f2f2f2;transform:scaleX(1.1813);-webkit-text-stroke:0.05px #f2f2f2;">0,3127</div>
<div class="t" style="left:405.10px;top:115.91px;font-size:14.39px;line-height:14.39px;color:#f2f2f2;transform:scaleX(1.1813);-webkit-text-stroke:0.05px #f2f2f2;">0,3290</div>
<div class="t" style="left:405.10px;top:138.01px;font-size:14.39px;line-height:14.39px;color:#f2f2f2;transform:scaleX(1.1813);-webkit-text-stroke:0.05px #f2f2f2;">205,3464</div>
<div class="t" style="left:405.10px;top:159.81px;font-size:14.39px;line-height:14.39px;color:#f2f2f2;transform:scaleX(1.1813);-webkit-text-stroke:0.05px #f2f2f2;">4,8526</div>
<div class="t" style="left:405.10px;top:181.11px;font-size:14.39px;line-height:14.39px;color:#f2f2f2;transform:scaleX(1.1813);-webkit-text-stroke:0.05px #f2f2f2;">6,7825</div>
<div class="t" style="left:495.70px;top:7.40px;font-size:13.23px;line-height:13.23px;color:#f2f2f2;transform:scaleX(1.1966);-webkit-text-stroke:0.35px #f2f2f2;">Gray 35</div>
<div class="t" style="left:487.50px;top:29.31px;font-size:14.39px;line-height:14.39px;color:#f2f2f2;transform:scaleX(1.1813);-webkit-text-stroke:0.05px #f2f2f2;">0,3158</div>
<div class="t" style="left:487.50px;top:51.01px;font-size:14.39px;line-height:14.39px;color:#f2f2f2;transform:scaleX(1.1813);-webkit-text-stroke:0.05px #f2f2f2;">0,3405</div>
<div class="t" style="left:487.50px;top:72.41px;font-size:14.39px;line-height:14.39px;color:#f2f2f2;transform:scaleX(1.1813);-webkit-text-stroke:0.05px #f2f2f2;">126,5172</div>
<div class="t" style="left:487.50px;top:94.11px;font-size:14.39px;line-height:14.39px;color:#f2f2f2;transform:scaleX(1.1813);-webkit-text-stroke:0.05px #f2f2f2;">0,3127</div>
<div class="t" style="left:487.50px;top:115.91px;font-size:14.39px;line-height:14.39px;color:#f2f2f2;transform:scaleX(1.1813);-webkit-text-stroke:0.05px #f2f2f2;">0,3290</div>
<div class="t" style="left:487.50px;top:138.01px;font-size:14.39px;line-height:14.39px;color:#f2f2f2;transform:scaleX(1.1813);-webkit-text-stroke:0.05px #f2f2f2;">142,9896</div>
<div class="t" style="left:487.50px;top:159.81px;font-size:14.39px;line-height:14.39px;color:#f2f2f2;transform:scaleX(1.1813);-webkit-text-stroke:0.05px #f2f2f2;">5,4363</div>
<div class="t" style="left:487.50px;top:181.11px;font-size:14.39px;line-height:14.39px;color:#f2f2f2;transform:scaleX(1.1813);-webkit-text-stroke:0.05px #f2f2f2;">10,3051</div>
<div class="t" style="left:582.70px;top:7.40px;font-size:13.23px;line-height:13.23px;color:#f2f2f2;transform:scaleX(1.1802);-webkit-text-stroke:0.35px #f2f2f2;">Black</div>
<div class="t" style="left:570.40px;top:29.31px;font-size:14.39px;line-height:14.39px;color:#f2f2f2;transform:scaleX(1.1813);-webkit-text-stroke:0.05px #f2f2f2;">0,3006</div>
<div class="t" style="left:570.40px;top:51.01px;font-size:14.39px;line-height:14.39px;color:#f2f2f2;transform:scaleX(1.1813);-webkit-text-stroke:0.05px #f2f2f2;">0,2884</div>
<div class="t" style="left:570.40px;top:72.41px;font-size:14.39px;line-height:14.39px;color:#f2f2f2;transform:scaleX(1.1813);-webkit-text-stroke:0.05px #f2f2f2;">0,4458</div>
<div class="t" style="left:570.40px;top:94.11px;font-size:14.39px;line-height:14.39px;color:#f2f2f2;transform:scaleX(1.1813);-webkit-text-stroke:0.05px #f2f2f2;">0,3127</div>
<div class="t" style="left:570.40px;top:115.91px;font-size:14.39px;line-height:14.39px;color:#f2f2f2;transform:scaleX(1.1813);-webkit-text-stroke:0.05px #f2f2f2;">0,3290</div>
<div class="t" style="left:570.40px;top:138.01px;font-size:14.39px;line-height:14.39px;color:#f2f2f2;transform:scaleX(1.1813);-webkit-text-stroke:0.05px #f2f2f2;">0,0000</div>
<div class="t" style="left:570.40px;top:159.81px;font-size:14.39px;line-height:14.39px;color:#f2f2f2;transform:scaleX(1.1813);-webkit-text-stroke:0.05px #f2f2f2;">0,9531</div>
<div class="t" style="left:570.40px;top:181.11px;font-size:14.39px;line-height:14.39px;color:#f2f2f2;transform:scaleX(1.1813);-webkit-text-stroke:0.05px #f2f2f2;">81,7861</div>
<div class="t" style="left:643.30px;top:7.40px;font-size:13.23px;line-height:13.23px;color:#f2f2f2;transform:scaleX(1.1877);-webkit-text-stroke:0.35px #f2f2f2;">Dark Skin</div>
<div class="t" style="left:642.50px;top:29.31px;font-size:14.39px;line-height:14.39px;color:#f2f2f2;transform:scaleX(1.1813);-webkit-text-stroke:0.05px #f2f2f2;">0,4092</div>
<div class="t" style="left:642.50px;top:51.01px;font-size:14.39px;line-height:14.39px;color:#f2f2f2;transform:scaleX(1.1813);-webkit-text-stroke:0.05px #f2f2f2;">0,3702</div>
<div class="t" style="left:642.50px;top:72.41px;font-size:14.39px;line-height:14.39px;color:#f2f2f2;transform:scaleX(1.1813);-webkit-text-stroke:0.05px #f2f2f2;">34,0492</div>
<div class="t" style="left:642.50px;top:94.11px;font-size:14.39px;line-height:14.39px;color:#f2f2f2;transform:scaleX(1.1813);-webkit-text-stroke:0.05px #f2f2f2;">0,4003</div>
<div class="t" style="left:642.50px;top:115.91px;font-size:14.39px;line-height:14.39px;color:#f2f2f2;transform:scaleX(1.1813);-webkit-text-stroke:0.05px #f2f2f2;">0,3642</div>
<div class="t" style="left:642.50px;top:138.01px;font-size:14.39px;line-height:14.39px;color:#f2f2f2;transform:scaleX(1.1813);-webkit-text-stroke:0.05px #f2f2f2;">42,1268</div>
<div class="t" style="left:642.50px;top:159.81px;font-size:14.39px;line-height:14.39px;color:#f2f2f2;transform:scaleX(1.1813);-webkit-text-stroke:0.05px #f2f2f2;">3,1965</div>
<div class="t" style="left:642.50px;top:181.11px;font-size:14.39px;line-height:14.39px;color:#f2f2f2;transform:scaleX(1.1813);-webkit-text-stroke:0.05px #f2f2f2;">14,6741</div>
<div class="t" style="left:723.30px;top:7.40px;font-size:13.23px;line-height:13.23px;color:#f2f2f2;transform:scaleX(1.1860);-webkit-text-stroke:0.35px #f2f2f2;">Light Skin</div>
<div class="t" style="left:721.60px;top:29.31px;font-size:14.39px;line-height:14.39px;color:#f2f2f2;transform:scaleX(1.1813);-webkit-text-stroke:0.05px #f2f2f2;">0,3924</div>
<div class="t" style="left:721.60px;top:51.01px;font-size:14.39px;line-height:14.39px;color:#f2f2f2;transform:scaleX(1.1813);-webkit-text-stroke:0.05px #f2f2f2;">0,3660</div>
<div class="t" style="left:721.60px;top:72.41px;font-size:14.39px;line-height:14.39px;color:#f2f2f2;transform:scaleX(1.1813);-webkit-text-stroke:0.05px #f2f2f2;">130,4105</div>
<div class="t" style="left:721.60px;top:94.11px;font-size:14.39px;line-height:14.39px;color:#f2f2f2;transform:scaleX(1.1813);-webkit-text-stroke:0.05px #f2f2f2;">0,3795</div>
<div class="t" style="left:721.60px;top:115.91px;font-size:14.39px;line-height:14.39px;color:#f2f2f2;transform:scaleX(1.1813);-webkit-text-stroke:0.05px #f2f2f2;">0,3562</div>
<div class="t" style="left:721.60px;top:138.01px;font-size:14.39px;line-height:14.39px;color:#f2f2f2;transform:scaleX(1.1813);-webkit-text-stroke:0.05px #f2f2f2;">145,9326</div>
<div class="t" style="left:721.60px;top:159.81px;font-size:14.39px;line-height:14.39px;color:#f2f2f2;transform:scaleX(1.1813);-webkit-text-stroke:0.05px #f2f2f2;">3,4781</div>
<div class="t" style="left:721.60px;top:181.11px;font-size:14.39px;line-height:14.39px;color:#f2f2f2;transform:scaleX(1.1813);-webkit-text-stroke:0.05px #f2f2f2;">10,8433</div>
<div class="t" style="left:805.30px;top:7.40px;font-size:13.23px;line-height:13.23px;color:#f2f2f2;transform:scaleX(1.1630);-webkit-text-stroke:0.35px #f2f2f2;">Blue Sky</div>
<div class="t" style="left:804.50px;top:29.31px;font-size:14.39px;line-height:14.39px;color:#f2f2f2;transform:scaleX(1.1813);-webkit-text-stroke:0.05px #f2f2f2;">0,2473</div>
<div class="t" style="left:804.50px;top:51.01px;font-size:14.39px;line-height:14.39px;color:#f2f2f2;transform:scaleX(1.1813);-webkit-text-stroke:0.05px #f2f2f2;">0,2735</div>
<div class="t" style="left:804.50px;top:72.41px;font-size:14.39px;line-height:14.39px;color:#f2f2f2;transform:scaleX(1.1813);-webkit-text-stroke:0.05px #f2f2f2;">65,7691</div>
<div class="t" style="left:804.50px;top:94.11px;font-size:14.39px;line-height:14.39px;color:#f2f2f2;transform:scaleX(1.1813);-webkit-text-stroke:0.05px #f2f2f2;">0,2496</div>
<div class="t" style="left:804.50px;top:115.91px;font-size:14.39px;line-height:14.39px;color:#f2f2f2;transform:scaleX(1.1813);-webkit-text-stroke:0.05px #f2f2f2;">0,2656</div>
<div class="t" style="left:804.50px;top:138.01px;font-size:14.39px;line-height:14.39px;color:#f2f2f2;transform:scaleX(1.1813);-webkit-text-stroke:0.05px #f2f2f2;">78,1972</div>
<div class="t" style="left:804.50px;top:159.81px;font-size:14.39px;line-height:14.39px;color:#f2f2f2;transform:scaleX(1.1813);-webkit-text-stroke:0.05px #f2f2f2;">5,0505</div>
<div class="t" style="left:804.50px;top:181.11px;font-size:14.39px;line-height:14.39px;color:#f2f2f2;transform:scaleX(1.1813);-webkit-text-stroke:0.05px #f2f2f2;">13,2989</div>
<div class="t" style="left:882.50px;top:7.40px;font-size:13.23px;line-height:13.23px;color:#f2f2f2;transform:scaleX(1.1801);-webkit-text-stroke:0.35px #f2f2f2;">Foliage</div>
<div class="t" style="left:876.70px;top:29.31px;font-size:14.39px;line-height:14.39px;color:#f2f2f2;transform:scaleX(1.1813);-webkit-text-stroke:0.05px #f2f2f2;">0,3399</div>
<div class="t" style="left:876.70px;top:51.01px;font-size:14.39px;line-height:14.39px;color:#f2f2f2;transform:scaleX(1.1813);-webkit-text-stroke:0.05px #f2f2f2;">0,4396</div>
<div class="t" style="left:876.70px;top:72.41px;font-size:14.39px;line-height:14.39px;color:#f2f2f2;transform:scaleX(1.1813);-webkit-text-stroke:0.05px #f2f2f2;">44,8203</div>
<div class="t" style="left:876.70px;top:94.11px;font-size:14.39px;line-height:14.39px;color:#f2f2f2;transform:scaleX(1.1813);-webkit-text-stroke:0.05px #f2f2f2;">0,3395</div>
<div class="t" style="left:876.70px;top:115.91px;font-size:14.39px;line-height:14.39px;color:#f2f2f2;transform:scaleX(1.1813);-webkit-text-stroke:0.05px #f2f2f2;">0,4271</div>
<div class="t" style="left:876.70px;top:138.01px;font-size:14.39px;line-height:14.39px;color:#f2f2f2;transform:scaleX(1.1813);-webkit-text-stroke:0.05px #f2f2f2;">54,5021</div>
<div class="t" style="left:876.70px;top:159.81px;font-size:14.39px;line-height:14.39px;color:#f2f2f2;transform:scaleX(1.1813);-webkit-text-stroke:0.05px #f2f2f2;">3,3867</div>
<div class="t" style="left:876.70px;top:181.11px;font-size:14.39px;line-height:14.39px;color:#f2f2f2;transform:scaleX(1.1813);-webkit-text-stroke:0.05px #f2f2f2;">14,1108</div>
<div class="t" style="left:950.20px;top:7.40px;font-size:13.23px;line-height:13.23px;color:#f2f2f2;transform:scaleX(1.2328);-webkit-text-stroke:0.35px #f2f2f2;">Blue Flower</div>
<div class="t" style="left:949.30px;top:29.31px;font-size:14.39px;line-height:14.39px;color:#f2f2f2;transform:scaleX(1.1813);-webkit-text-stroke:0.05px #f2f2f2;">0,2665</div>
<div class="t" style="left:949.30px;top:51.01px;font-size:14.39px;line-height:14.39px;color:#f2f2f2;transform:scaleX(1.1813);-webkit-text-stroke:0.05px #f2f2f2;">0,2549</div>
<div class="t" style="left:949.30px;top:72.41px;font-size:14.39px;line-height:14.39px;color:#f2f2f2;transform:scaleX(1.1813);-webkit-text-stroke:0.05px #f2f2f2;">83,7765</div>
<div class="t" style="left:949.30px;top:94.11px;font-size:14.39px;line-height:14.39px;color:#f2f2f2;transform:scaleX(1.1813);-webkit-text-stroke:0.05px #f2f2f2;">0,2681</div>
<div class="t" style="left:949.30px;top:115.91px;font-size:14.39px;line-height:14.39px;color:#f2f2f2;transform:scaleX(1.1813);-webkit-text-stroke:0.05px #f2f2f2;">0,2525</div>
<div class="t" style="left:949.30px;top:138.01px;font-size:14.39px;line-height:14.39px;color:#f2f2f2;transform:scaleX(1.1813);-webkit-text-stroke:0.05px #f2f2f2;">97,5186</div>
<div class="t" style="left:949.30px;top:159.81px;font-size:14.39px;line-height:14.39px;color:#f2f2f2;transform:scaleX(1.1813);-webkit-text-stroke:0.05px #f2f2f2;">3,6507</div>
<div class="t" style="left:949.30px;top:181.11px;font-size:14.39px;line-height:14.39px;color:#f2f2f2;transform:scaleX(1.1813);-webkit-text-stroke:0.05px #f2f2f2;">11,2824</div>
<div class="t" style="left:1047.40px;top:7.40px;font-size:13.23px;line-height:13.23px;color:#f2f2f2;transform:scaleX(1.2123);-webkit-text-stroke:0.35px #f2f2f2;">Bluish Green</div>
<div class="t" style="left:1046.60px;top:29.31px;font-size:14.39px;line-height:14.39px;color:#f2f2f2;transform:scaleX(1.1813);-webkit-text-stroke:0.05px #f2f2f2;">0,2598</div>
<div class="t" style="left:1046.60px;top:51.01px;font-size:14.39px;line-height:14.39px;color:#f2f2f2;transform:scaleX(1.1813);-webkit-text-stroke:0.05px #f2f2f2;">0,3814</div>
<div class="t" style="left:1046.60px;top:72.41px;font-size:14.39px;line-height:14.39px;color:#f2f2f2;transform:scaleX(1.1813);-webkit-text-stroke:0.05px #f2f2f2;">163,5361</div>
<div class="t" style="left:1046.60px;top:94.11px;font-size:14.39px;line-height:14.39px;color:#f2f2f2;transform:scaleX(1.1813);-webkit-text-stroke:0.05px #f2f2f2;">0,2626</div>
<div class="t" style="left:1046.60px;top:115.91px;font-size:14.39px;line-height:14.39px;color:#f2f2f2;transform:scaleX(1.1813);-webkit-text-stroke:0.05px #f2f2f2;">0,3616</div>
<div class="t" style="left:1046.60px;top:138.01px;font-size:14.39px;line-height:14.39px;color:#f2f2f2;transform:scaleX(1.1813);-webkit-text-stroke:0.05px #f2f2f2;">175,1142</div>
<div class="t" style="left:1046.60px;top:159.81px;font-size:14.39px;line-height:14.39px;color:#f2f2f2;transform:scaleX(1.1813);-webkit-text-stroke:0.05px #f2f2f2;">3,8984</div>
<div class="t" style="left:1046.60px;top:181.11px;font-size:14.39px;line-height:14.39px;color:#f2f2f2;transform:scaleX(1.1813);-webkit-text-stroke:0.05px #f2f2f2;">9,5119</div>
<div class="t" style="left:1160.60px;top:7.40px;font-size:13.23px;line-height:13.23px;color:#f2f2f2;transform:scaleX(1.1992);-webkit-text-stroke:0.35px #f2f2f2;">Orange</div>
<div class="t" style="left:1150.80px;top:29.31px;font-size:14.39px;line-height:14.39px;color:#f2f2f2;transform:scaleX(1.1813);-webkit-text-stroke:0.05px #f2f2f2;">0,5300</div>
<div class="t" style="left:1150.80px;top:51.01px;font-size:14.39px;line-height:14.39px;color:#f2f2f2;transform:scaleX(1.1813);-webkit-text-stroke:0.05px #f2f2f2;">0,4003</div>
<div class="t" style="left:1150.80px;top:72.41px;font-size:14.39px;line-height:14.39px;color:#f2f2f2;transform:scaleX(1.1813);-webkit-text-stroke:0.05px #f2f2f2;">105,6268</div>
<div class="t" style="left:1150.80px;top:94.11px;font-size:14.39px;line-height:14.39px;color:#f2f2f2;transform:scaleX(1.1813);-webkit-text-stroke:0.05px #f2f2f2;">0,5122</div>
<div class="t" style="left:1150.80px;top:115.91px;font-size:14.39px;line-height:14.39px;color:#f2f2f2;transform:scaleX(1.1813);-webkit-text-stroke:0.05px #f2f2f2;">0,4063</div>
<div class="t" style="left:1150.80px;top:138.01px;font-size:14.39px;line-height:14.39px;color:#f2f2f2;transform:scaleX(1.1813);-webkit-text-stroke:0.05px #f2f2f2;">118,5514</div>
<div class="t" style="left:1150.80px;top:159.81px;font-size:14.39px;line-height:14.39px;color:#f2f2f2;transform:scaleX(1.1813);-webkit-text-stroke:0.05px #f2f2f2;">3,3716</div>
<div class="t" style="left:1150.80px;top:181.11px;font-size:14.39px;line-height:14.39px;color:#f2f2f2;transform:scaleX(1.1813);-webkit-text-stroke:0.05px #f2f2f2;">14,3091</div>
<div class="t" style="left:1234.00px;top:7.40px;font-size:13.23px;line-height:13.23px;color:#f2f2f2;font-weight:bold;font-weight:normal;-webkit-text-stroke:0.35px #f2f2f2;">Purplish Blue</div>
<div class="t" style="left:1233.20px;top:29.31px;font-size:14.39px;line-height:14.39px;color:#f2f2f2;transform:scaleX(1.1813);-webkit-text-stroke:0.05px #f2f2f2;">0,2110</div>
<div class="t" style="left:1233.20px;top:51.01px;font-size:14.39px;line-height:14.39px;color:#f2f2f2;transform:scaleX(1.1813);-webkit-text-stroke:0.05px #f2f2f2;">0,1950</div>
<div class="t" style="left:1233.20px;top:72.41px;font-size:14.39px;line-height:14.39px;color:#f2f2f2;transform:scaleX(1.1813);-webkit-text-stroke:0.05px #f2f2f2;">39,5510</div>
<div class="t" style="left:1233.20px;top:94.11px;font-size:14.39px;line-height:14.39px;color:#f2f2f2;transform:scaleX(1.1813);-webkit-text-stroke:0.05px #f2f2f2;">0,2110</div>
<div class="t" style="left:1233.20px;top:115.91px;font-size:14.39px;line-height:14.39px;color:#f2f2f2;transform:scaleX(1.1813);-webkit-text-stroke:0.05px #f2f2f2;">0,1960</div>
<div class="t" style="left:1233.20px;top:138.01px;font-size:14.39px;line-height:14.39px;color:#f2f2f2;transform:scaleX(1.1813);-webkit-text-stroke:0.05px #f2f2f2;">49,1560</div>
<div class="t" style="left:1233.20px;top:159.81px;font-size:14.39px;line-height:14.39px;color:#f2f2f2;transform:scaleX(1.1813);-webkit-text-stroke:0.05px #f2f2f2;">3,5260</div>
<div class="t" style="left:1233.20px;top:181.11px;font-size:14.39px;line-height:14.39px;color:#f2f2f2;transform:scaleX(1.1813);-webkit-text-stroke:0.05px #f2f2f2;">15,1470</div>
<div class="t" style="left:14.80px;top:29.31px;font-size:14.39px;line-height:14.39px;color:#f4f4f4;font-weight:bold;transform:scaleX(1.1888);">x: CIE31</div>
<div class="t" style="left:14.80px;top:51.01px;font-size:14.39px;line-height:14.39px;color:#f4f4f4;font-weight:bold;transform:scaleX(1.1888);">y: CIE31</div>
<div class="t" style="left:14.80px;top:72.41px;font-size:14.39px;line-height:14.39px;color:#f4f4f4;font-weight:bold;transform:scaleX(1.1888);">Y</div>
<div class="t" style="left:14.80px;top:94.11px;font-size:14.39px;line-height:14.39px;color:#f4f4f4;font-weight:bold;transform:scaleX(1.1888);">Target x:CIE31</div>
<div class="t" style="left:14.80px;top:115.91px;font-size:14.39px;line-height:14.39px;color:#f4f4f4;font-weight:bold;transform:scaleX(1.1888);">Target y:CIE31</div>
<div class="t" style="left:14.80px;top:138.01px;font-size:14.39px;line-height:14.39px;color:#f4f4f4;font-weight:bold;transform:scaleX(1.1888);">Target Y</div>
<div class="t" style="left:14.80px;top:159.81px;font-size:14.39px;line-height:14.39px;color:#f4f4f4;font-weight:bold;transform:scaleX(1.1888);">ΔE 2000</div>
<div class="t" style="left:14.80px;top:181.11px;font-size:14.39px;line-height:14.39px;color:#f4f4f4;font-weight:bold;transform:scaleX(1.1888);">ΔE ITP</div>
<div style="position:absolute;left:0px;top:198px;width:1300px;height:15px;background:#5a5a5a;"></div>
<div style="position:absolute;left:2px;top:200px;width:16px;height:12px;background:linear-gradient(#8c8c8c,#6c6c6c);border-radius:2px;"></div>
<div style="position:absolute;left:7px;top:202px;width:0;height:0;border-top:4px solid transparent;border-bottom:4px solid transparent;border-right:5px solid #333;"></div>
<div style="position:absolute;left:22px;top:200.5px;width:369px;height:11px;background:#474747;border-radius:6px;"></div>
<div style="position:absolute;left:1247px;top:200px;width:14px;height:12px;background:linear-gradient(#8c8c8c,#6c6c6c);border-radius:2px;"></div>
<div style="position:absolute;left:1252px;top:202px;width:0;height:0;border-top:4px solid transparent;border-bottom:4px solid transparent;border-left:5px solid #333;"></div>
</div>
<div style="position:absolute;left:296.00px;top:562.00px;width:2.00px;height:213.00px;background:#000;"></div>
<div style="position:absolute;left:0;top:788px;width:1238px;height:64px;overflow:hidden;">
<div style="position:absolute;left:-4.00px;top:5px;width:49.7px;height:49px;border-radius:4px 4px 0 0;background:linear-gradient(#b4b4b4,#a0a0a0 40%,#828282 80%,#747474);"></div>
<div style="position:absolute;left:1.80px;top:10px;width:39px;height:24px;border-radius:3px;background:#ffffff;box-shadow:inset 0 1px 2px rgba(0,0,0,0.45);"></div>
<div class="t" style="left:7.37px;top:40.17px;font-size:10.90px;line-height:10.90px;color:#1e1e1e;-webkit-text-stroke:0.3px #1e1e1e;">White</div>
<div style="position:absolute;left:48.00px;top:5px;width:49.7px;height:49px;border-radius:4px 4px 0 0;background:linear-gradient(#b4b4b4,#a0a0a0 40%,#828282 80%,#747474);"></div>
<div style="position:absolute;left:53.80px;top:10px;width:39px;height:24px;border-radius:3px;background:#e6e6e6;box-shadow:inset 0 1px 2px rgba(0,0,0,0.45);"></div>
<div class="t" style="left:53.91px;top:40.17px;font-size:10.90px;line-height:10.90px;color:#1e1e1e;-webkit-text-stroke:0.3px #1e1e1e;">Gray 80</div>
<div style="position:absolute;left:100.00px;top:5px;width:49.7px;height:49px;border-radius:4px 4px 0 0;background:linear-gradient(#b4b4b4,#a0a0a0 40%,#828282 80%,#747474);"></div>
<div style="position:absolute;left:105.80px;top:10px;width:39px;height:24px;border-radius:3px;background:#d0d0d0;box-shadow:inset 0 1px 2px rgba(0,0,0,0.45);"></div>
<div class="t" style="left:105.91px;top:40.17px;font-size:10.90px;line-height:10.90px;color:#1e1e1e;-webkit-text-stroke:0.3px #1e1e1e;">Gray 65</div>
<div style="position:absolute;left:152.00px;top:5px;width:49.7px;height:49px;border-radius:4px 4px 0 0;background:linear-gradient(#b4b4b4,#a0a0a0 40%,#828282 80%,#747474);"></div>
<div style="position:absolute;left:157.80px;top:10px;width:39px;height:24px;border-radius:3px;background:#bababa;box-shadow:inset 0 1px 2px rgba(0,0,0,0.45);"></div>
<div class="t" style="left:157.91px;top:40.17px;font-size:10.90px;line-height:10.90px;color:#1e1e1e;-webkit-text-stroke:0.3px #1e1e1e;">Gray 50</div>
<div style="position:absolute;left:204.00px;top:5px;width:49.7px;height:49px;border-radius:4px 4px 0 0;background:linear-gradient(#b4b4b4,#a0a0a0 40%,#828282 80%,#747474);"></div>
<div style="position:absolute;left:209.80px;top:10px;width:39px;height:24px;border-radius:3px;background:#a0a0a0;box-shadow:inset 0 1px 2px rgba(0,0,0,0.45);"></div>
<div class="t" style="left:209.91px;top:40.17px;font-size:10.90px;line-height:10.90px;color:#1e1e1e;-webkit-text-stroke:0.3px #1e1e1e;">Gray 35</div>
<div style="position:absolute;left:256.00px;top:5px;width:49.7px;height:49px;border-radius:4px 4px 0 0;background:linear-gradient(#b4b4b4,#a0a0a0 40%,#828282 80%,#747474);"></div>
<div style="position:absolute;left:261.80px;top:10px;width:39px;height:24px;border-radius:3px;background:#000000;box-shadow:inset 0 1px 2px rgba(0,0,0,0.45);"></div>
<div class="t" style="left:267.96px;top:40.17px;font-size:10.90px;line-height:10.90px;color:#1e1e1e;-webkit-text-stroke:0.3px #1e1e1e;">Black</div>
<div style="position:absolute;left:308.00px;top:5px;width:49.7px;height:49px;border-radius:4px 4px 0 0;background:linear-gradient(#b4b4b4,#a0a0a0 40%,#828282 80%,#747474);"></div>
<div style="position:absolute;left:313.80px;top:10px;width:39px;height:24px;border-radius:3px;background:#735244;box-shadow:inset 0 1px 2px rgba(0,0,0,0.45);"></div>
<div class="t" style="left:309.67px;top:40.17px;font-size:10.90px;line-height:10.90px;color:#1e1e1e;-webkit-text-stroke:0.3px #1e1e1e;">Dark Skin</div>
<div style="position:absolute;left:360.00px;top:5px;width:49.7px;height:49px;border-radius:4px 4px 0 0;background:linear-gradient(#b4b4b4,#a0a0a0 40%,#828282 80%,#747474);"></div>
<div style="position:absolute;left:365.80px;top:10px;width:39px;height:24px;border-radius:3px;background:#c29682;box-shadow:inset 0 1px 2px rgba(0,0,0,0.45);"></div>
<div class="t" style="left:361.36px;top:40.17px;font-size:10.90px;line-height:10.90px;color:#1e1e1e;-webkit-text-stroke:0.3px #1e1e1e;">Light Skin</div>
<div style="position:absolute;left:412.00px;top:5px;width:49.7px;height:49px;border-radius:4px 4px 0 0;background:linear-gradient(#b4b4b4,#a0a0a0 40%,#828282 80%,#747474);"></div>
<div style="position:absolute;left:417.80px;top:10px;width:39px;height:24px;border-radius:3px;background:#627a9d;box-shadow:inset 0 1px 2px rgba(0,0,0,0.45);"></div>
<div class="t" style="left:415.79px;top:40.17px;font-size:10.90px;line-height:10.90px;color:#1e1e1e;-webkit-text-stroke:0.3px #1e1e1e;">Blue Sky</div>
<div style="position:absolute;left:464.00px;top:5px;width:49.7px;height:49px;border-radius:4px 4px 0 0;background:linear-gradient(#b4b4b4,#a0a0a0 40%,#828282 80%,#747474);"></div>
<div style="position:absolute;left:469.80px;top:10px;width:39px;height:24px;border-radius:3px;background:#576c43;box-shadow:inset 0 1px 2px rgba(0,0,0,0.45);"></div>
<div class="t" style="left:471.42px;top:40.17px;font-size:10.90px;line-height:10.90px;color:#1e1e1e;-webkit-text-stroke:0.3px #1e1e1e;">Foliage</div>
<div style="position:absolute;left:516.00px;top:5px;width:49.7px;height:49px;border-radius:4px 4px 0 0;background:linear-gradient(#b4b4b4,#a0a0a0 40%,#828282 80%,#747474);"></div>
<div style="position:absolute;left:521.80px;top:10px;width:39px;height:12px;border-radius:3px;background:#8580b1;box-shadow:inset 0 1px 2px rgba(0,0,0,0.45);"></div>
<div class="t" style="left:524.94px;top:28.07px;font-size:10.90px;line-height:10.90px;color:#1e1e1e;-webkit-text-stroke:0.3px #1e1e1e;">Blue</div>
<div class="t" style="left:524.94px;top:40.17px;font-size:10.90px;line-height:10.90px;color:#1e1e1e;-webkit-text-stroke:0.3px #1e1e1e;">Flower</div>
<div style="position:absolute;left:568.00px;top:5px;width:49.7px;height:49px;border-radius:4px 4px 0 0;background:linear-gradient(#b4b4b4,#a0a0a0 40%,#828282 80%,#747474);"></div>
<div style="position:absolute;left:573.80px;top:10px;width:39px;height:12px;border-radius:3px;background:#67bdaa;box-shadow:inset 0 1px 2px rgba(0,0,0,0.45);"></div>
<div class="t" style="left:578.15px;top:28.07px;font-size:10.90px;line-height:10.90px;color:#1e1e1e;-webkit-text-stroke:0.3px #1e1e1e;">Bluish</div>
<div class="t" style="left:578.15px;top:40.17px;font-size:10.90px;line-height:10.90px;color:#1e1e1e;-webkit-text-stroke:0.3px #1e1e1e;">Green</div>
<div style="position:absolute;left:620.00px;top:5px;width:49.7px;height:49px;border-radius:4px 4px 0 0;background:linear-gradient(#b4b4b4,#a0a0a0 40%,#828282 80%,#747474);"></div>
<div style="position:absolute;left:625.80px;top:10px;width:39px;height:24px;border-radius:3px;background:#d67e2c;box-shadow:inset 0 1px 2px rgba(0,0,0,0.45);"></div>
<div class="t" style="left:627.12px;top:40.17px;font-size:10.90px;line-height:10.90px;color:#1e1e1e;-webkit-text-stroke:0.3px #1e1e1e;">Orange</div>
<div style="position:absolute;left:672.00px;top:5px;width:49.7px;height:49px;border-radius:4px 4px 0 0;background:linear-gradient(#b4b4b4,#a0a0a0 40%,#828282 80%,#747474);"></div>
<div style="position:absolute;left:677.80px;top:10px;width:39px;height:12px;border-radius:3px;background:#505ba6;box-shadow:inset 0 1px 2px rgba(0,0,0,0.45);"></div>
<div class="t" style="left:677.61px;top:28.07px;font-size:10.90px;line-height:10.90px;color:#1e1e1e;-webkit-text-stroke:0.3px #1e1e1e;">Purplish</div>
<div class="t" style="left:677.61px;top:40.17px;font-size:10.90px;line-height:10.90px;color:#1e1e1e;-webkit-text-stroke:0.3px #1e1e1e;">Blue</div>
<div style="position:absolute;left:724.00px;top:5px;width:49.7px;height:49px;border-radius:4px 4px 0 0;background:linear-gradient(#b4b4b4,#a0a0a0 40%,#828282 80%,#747474);"></div>
<div style="position:absolute;left:729.80px;top:10px;width:39px;height:12px;border-radius:3px;background:#c15a63;box-shadow:inset 0 1px 2px rgba(0,0,0,0.45);"></div>
<div class="t" style="left:726.27px;top:28.07px;font-size:10.90px;line-height:10.90px;color:#1e1e1e;-webkit-text-stroke:0.3px #1e1e1e;">Moderate</div>
<div class="t" style="left:726.27px;top:40.17px;font-size:10.90px;line-height:10.90px;color:#1e1e1e;-webkit-text-stroke:0.3px #1e1e1e;">Red</div>
<div style="position:absolute;left:776.00px;top:5px;width:49.7px;height:49px;border-radius:4px 4px 0 0;background:linear-gradient(#b4b4b4,#a0a0a0 40%,#828282 80%,#747474);"></div>
<div style="position:absolute;left:781.80px;top:10px;width:39px;height:24px;border-radius:3px;background:#5e3c6c;box-shadow:inset 0 1px 2px rgba(0,0,0,0.45);"></div>
<div class="t" style="left:785.54px;top:40.17px;font-size:10.90px;line-height:10.90px;color:#1e1e1e;-webkit-text-stroke:0.3px #1e1e1e;">Purple</div>
<div style="position:absolute;left:828.00px;top:5px;width:49.7px;height:49px;border-radius:4px 4px 0 0;background:linear-gradient(#b4b4b4,#a0a0a0 40%,#828282 80%,#747474);"></div>
<div style="position:absolute;left:833.80px;top:10px;width:39px;height:12px;border-radius:3px;background:#9dbc40;box-shadow:inset 0 1px 2px rgba(0,0,0,0.45);"></div>
<div class="t" style="left:837.73px;top:28.07px;font-size:10.90px;line-height:10.90px;color:#1e1e1e;-webkit-text-stroke:0.3px #1e1e1e;">Yellow</div>
<div class="t" style="left:837.73px;top:40.17px;font-size:10.90px;line-height:10.90px;color:#1e1e1e;-webkit-text-stroke:0.3px #1e1e1e;">Green</div>
<div style="position:absolute;left:880.00px;top:5px;width:49.7px;height:49px;border-radius:4px 4px 0 0;background:linear-gradient(#b4b4b4,#a0a0a0 40%,#828282 80%,#747474);"></div>
<div style="position:absolute;left:885.80px;top:10px;width:39px;height:12px;border-radius:3px;background:#e0a32e;box-shadow:inset 0 1px 2px rgba(0,0,0,0.45);"></div>
<div class="t" style="left:887.12px;top:28.07px;font-size:10.90px;line-height:10.90px;color:#1e1e1e;-webkit-text-stroke:0.3px #1e1e1e;">Orange</div>
<div class="t" style="left:887.12px;top:40.17px;font-size:10.90px;line-height:10.90px;color:#1e1e1e;-webkit-text-stroke:0.3px #1e1e1e;">Yellow</div>
<div style="position:absolute;left:932.00px;top:5px;width:49.7px;height:49px;border-radius:4px 4px 0 0;background:linear-gradient(#b4b4b4,#a0a0a0 40%,#828282 80%,#747474);"></div>
<div style="position:absolute;left:937.80px;top:10px;width:39px;height:24px;border-radius:3px;background:#383d96;box-shadow:inset 0 1px 2px rgba(0,0,0,0.45);"></div>
<div class="t" style="left:946.39px;top:40.17px;font-size:10.90px;line-height:10.90px;color:#1e1e1e;-webkit-text-stroke:0.3px #1e1e1e;">Blue</div>
<div style="position:absolute;left:984.00px;top:5px;width:49.7px;height:49px;border-radius:4px 4px 0 0;background:linear-gradient(#b4b4b4,#a0a0a0 40%,#828282 80%,#747474);"></div>
<div style="position:absolute;left:989.80px;top:10px;width:39px;height:24px;border-radius:3px;background:#469449;box-shadow:inset 0 1px 2px rgba(0,0,0,0.45);"></div>
<div class="t" style="left:994.15px;top:40.17px;font-size:10.90px;line-height:10.90px;color:#1e1e1e;-webkit-text-stroke:0.3px #1e1e1e;">Green</div>
<div style="position:absolute;left:1036.00px;top:5px;width:49.7px;height:49px;border-radius:4px 4px 0 0;background:linear-gradient(#b4b4b4,#a0a0a0 40%,#828282 80%,#747474);"></div>
<div style="position:absolute;left:1041.80px;top:10px;width:39px;height:24px;border-radius:3px;background:#af363c;box-shadow:inset 0 1px 2px rgba(0,0,0,0.45);"></div>
<div class="t" style="left:1051.30px;top:40.17px;font-size:10.90px;line-height:10.90px;color:#1e1e1e;-webkit-text-stroke:0.3px #1e1e1e;">Red</div>
<div style="position:absolute;left:1088.00px;top:5px;width:49.7px;height:49px;border-radius:4px 4px 0 0;background:linear-gradient(#b4b4b4,#a0a0a0 40%,#828282 80%,#747474);"></div>
<div style="position:absolute;left:1093.80px;top:10px;width:39px;height:24px;border-radius:3px;background:#e7c71f;box-shadow:inset 0 1px 2px rgba(0,0,0,0.45);"></div>
<div class="t" style="left:1097.73px;top:40.17px;font-size:10.90px;line-height:10.90px;color:#1e1e1e;-webkit-text-stroke:0.3px #1e1e1e;">Yellow</div>
<div style="position:absolute;left:1140.00px;top:5px;width:49.7px;height:49px;border-radius:4px 4px 0 0;background:linear-gradient(#b4b4b4,#a0a0a0 40%,#828282 80%,#747474);"></div>
<div style="position:absolute;left:1145.80px;top:10px;width:39px;height:24px;border-radius:3px;background:#bb5695;box-shadow:inset 0 1px 2px rgba(0,0,0,0.45);"></div>
<div class="t" style="left:1144.09px;top:40.17px;font-size:10.90px;line-height:10.90px;color:#1e1e1e;-webkit-text-stroke:0.3px #1e1e1e;">Magenta</div>
<div style="position:absolute;left:1192.00px;top:5px;width:49.7px;height:49px;border-radius:4px 4px 0 0;background:linear-gradient(#b4b4b4,#a0a0a0 40%,#828282 80%,#747474);"></div>
<div style="position:absolute;left:1197.80px;top:10px;width:39px;height:24px;border-radius:3px;background:#0885a1;box-shadow:inset 0 1px 2px rgba(0,0,0,0.45);"></div>
<div class="t" style="left:1204.58px;top:40.17px;font-size:10.90px;line-height:10.90px;color:#1e1e1e;-webkit-text-stroke:0.3px #1e1e1e;">Cyan</div>
</div>
<div style="position:absolute;left:0.00px;top:842.00px;width:1238.00px;height:10.00px;background:#575757;"></div>
<div style="position:absolute;left:2.00px;top:843.00px;width:622.00px;height:9.00px;background:#444;border-radius:5px;"></div>
<div style="position:absolute;left:1226.00px;top:842.50px;width:11.00px;height:9.50px;background:linear-gradient(#9a9a9a,#7a7a7a);border-radius:2px;"></div>
<div style="position:absolute;left:1229.5px;top:844px;width:0;height:0;border-top:3.5px solid transparent;border-bottom:3.5px solid transparent;border-left:4.5px solid #333;"></div>
<div style="position:absolute;left:1238.00px;top:793.00px;width:48.00px;height:18.00px;border-radius:4px 4px 0 0;background:linear-gradient(#b0b0b0,#8e8e8e);"></div>
<div style="position:absolute;left:1255px;top:794.5px;width:15px;height:15px;border-radius:50%;background:linear-gradient(#707070,#a8a8a8);"></div>
<div style="position:absolute;left:1258px;top:798px;width:0;height:0;border-left:4.5px solid transparent;border-right:4.5px solid transparent;border-bottom:5px solid #2a2a2a;"></div>
<div style="position:absolute;left:1238.00px;top:811.00px;width:48.00px;height:1.00px;background:#2a2a2a;"></div>
<div style="position:absolute;left:1238.00px;top:812.00px;width:48.00px;height:40.00px;background:linear-gradient(#a8a8a8,#8a8a8a 60%,#767676);"></div>
<div style="position:absolute;left:1246.5px;top:817.3px;width:31px;height:30.5px;box-sizing:border-box;border:2.8px solid #1e1e1e;border-radius:5px;background:linear-gradient(#c4c4c4,#b0b0b0 50%,#8e8e8e 52%,#949494);"></div>
<div style="position:absolute;left:1255px;top:826px;width:13.5px;height:13.5px;background:linear-gradient(#1c1c1c 50%,#000 50%);"></div>
<div style="position:absolute;left:1287.00px;top:793.00px;width:45.00px;height:30.00px;border-radius:4px 0 0 0;background:linear-gradient(#b8b8b8,#a4a4a4 35%,#8a8a8a 75%,#7a7a7a);"></div>
<div style="position:absolute;left:1332.00px;top:793.00px;width:1.00px;height:30.00px;background:#2c2c2c;"></div>
<div style="position:absolute;left:1299.5px;top:798px;width:20px;height:20px;border-radius:50%;background:linear-gradient(#707070,#b4b4b4);"></div>
<div style="position:absolute;left:1333.00px;top:793.00px;width:44.00px;height:30.00px;border-radius:0;background:linear-gradient(#b8b8b8,#a4a4a4 35%,#8a8a8a 75%,#7a7a7a);"></div>
<div style="position:absolute;left:1377.00px;top:793.00px;width:1.00px;height:30.00px;background:#2c2c2c;"></div>
<div style="position:absolute;left:1345.0px;top:798px;width:20px;height:20px;border-radius:50%;background:linear-gradient(#707070,#b4b4b4);"></div>
<div style="position:absolute;left:1378.00px;top:793.00px;width:44.00px;height:30.00px;border-radius:0;background:linear-gradient(#b8b8b8,#a4a4a4 35%,#8a8a8a 75%,#7a7a7a);"></div>
<div style="position:absolute;left:1422.00px;top:793.00px;width:1.00px;height:30.00px;background:#2c2c2c;"></div>
<div style="position:absolute;left:1390.0px;top:798px;width:20px;height:20px;border-radius:50%;background:linear-gradient(#707070,#b4b4b4);"></div>
<div style="position:absolute;left:1423.00px;top:793.00px;width:44.00px;height:30.00px;border-radius:0;background:linear-gradient(#b8b8b8,#a4a4a4 35%,#8a8a8a 75%,#7a7a7a);"></div>
<div style="position:absolute;left:1467.00px;top:793.00px;width:1.00px;height:30.00px;background:#2c2c2c;"></div>
<div style="position:absolute;left:1435.0px;top:798px;width:20px;height:20px;border-radius:50%;background:linear-gradient(#707070,#b4b4b4);"></div>
<div style="position:absolute;left:1468.00px;top:793.00px;width:45.00px;height:30.00px;background:linear-gradient(#3e3e3e,#2e2e2e);"></div>
<div style="position:absolute;left:1513.00px;top:793.00px;width:47.00px;height:30.00px;background:linear-gradient(#3a3a3a,#2c2c2c);"></div>
<div style="position:absolute;left:1480.5px;top:798px;width:20px;height:20px;border-radius:50%;background:linear-gradient(#262626,#3a3a3a);"></div>
<div style="position:absolute;left:1526.5px;top:798px;width:20px;height:20px;border-radius:50%;background:linear-gradient(#262626,#3a3a3a);"></div>
<div style="position:absolute;left:1305.70px;top:804.00px;width:8.00px;height:8.50px;background:#262626;"></div>
<div style="position:absolute;left:1353px;top:802px;width:0;height:0;border-top:5.5px solid transparent;border-bottom:5.5px solid transparent;border-left:9px solid #222;"></div>
<div style="position:absolute;left:1393px;top:799px;width:17px;height:18px;font:bold 12px/18px 'Liberation Sans',sans-serif;color:#222;text-align:center;letter-spacing:-1px;">[··]</div>
<div style="position:absolute;left:1435.5px;top:798px;width:20px;height:20px;font:bold 17px/19px 'Liberation Sans',sans-serif;color:#222;text-align:center;">∞</div>
<svg style="position:absolute;left:1480.5px;top:798px" width="20" height="20" viewBox="0 0 20 20"><path d="M5 9 A5 5 0 0 1 14 7 M15 11 A5 5 0 0 1 6 13" stroke="#1e1e1e" stroke-width="2" fill="none"/><path d="M12 5 L16 5 L15 9 Z M8 15 L4 15 L5 11 Z" fill="#1e1e1e"/></svg>
<div style="position:absolute;left:1287.00px;top:824.00px;width:135.00px;height:28.00px;border-radius:4px 0 0 0;background:linear-gradient(#b8b8b8,#a4a4a4 35%,#8a8a8a 75%,#7a7a7a);"></div>
<div style="position:absolute;left:1422.00px;top:824.00px;width:1.20px;height:28.00px;background:#2c2c2c;"></div>
<div style="position:absolute;left:1423.20px;top:824.00px;width:137.00px;height:28.00px;background:linear-gradient(#b8b8b8,#a4a4a4 35%,#8a8a8a 75%,#7a7a7a);"></div>
<div style="position:absolute;left:1308px;top:828.8px;width:20px;height:20px;border-radius:50%;background:linear-gradient(#727272,#b4b4b4);"></div>
<div style="position:absolute;left:1521px;top:828.8px;width:20px;height:20px;border-radius:50%;background:linear-gradient(#727272,#b4b4b4);"></div>
<svg style="position:absolute;left:1308px;top:828.8px" width="20" height="20" viewBox="0 0 20 20"><path d="M9 5 L5 10 L9 15 M13.5 5 L9.5 10 L13.5 15" stroke="#262626" stroke-width="1.4" fill="none"/></svg>
<svg style="position:absolute;left:1521px;top:828.8px" width="20" height="20" viewBox="0 0 20 20"><path d="M6.5 5 L10.5 10 L6.5 15 M11 5 L15 10 L11 15" stroke="#262626" stroke-width="1.4" fill="none"/></svg>
<div style="position:absolute;left:1558.00px;top:793.00px;width:2.00px;height:59.00px;background:#262626;"></div>
<div class="t" style="left:1344.70px;top:828.01px;font-size:23.26px;line-height:23.26px;color:#2e2e2e;transform:scaleX(0.9663);-webkit-text-stroke:0.6px #2e2e2e;">Back</div>
<div class="t" style="left:1451.60px;top:828.01px;font-size:23.26px;line-height:23.26px;color:#2e2e2e;transform:scaleX(1.0708);-webkit-text-stroke:0.6px #2e2e2e;">Next</div>
<div style="position:absolute;left:909.00px;top:26.00px;width:650.00px;height:523.00px;box-sizing:border-box;border:6px solid #d98c5e;background:#333333;"></div>
<div class="t" style="left:1194.80px;top:37.61px;font-size:13.81px;line-height:13.81px;color:#dcdcdc;transform:scaleX(0.9685);-webkit-text-stroke:0.21px #dcdcdc;">CIE 1976 u'v'</div>
<div style="position:absolute;left:950.00px;top:53.00px;width:601.00px;height:463.00px;box-sizing:border-box;background:#232323;border:1px solid #a3a3a3;"></div>
<div style="position:absolute;left:944.70px;top:515.40px;width:5.30px;height:1.20px;background:#a3a3a3;"></div>
<div class="t" style="left:936.23px;top:509.22px;font-size:13.08px;line-height:13.08px;color:#dcdcdc;-webkit-text-stroke:0.20px #dcdcdc;">0</div>
<div style="position:absolute;left:944.70px;top:477.40px;width:5.30px;height:1.20px;background:#a3a3a3;"></div>
<div class="t" style="left:918.04px;top:471.62px;font-size:13.08px;line-height:13.08px;color:#dcdcdc;-webkit-text-stroke:0.20px #dcdcdc;">0,05</div>
<div style="position:absolute;left:944.70px;top:438.40px;width:5.30px;height:1.20px;background:#a3a3a3;"></div>
<div class="t" style="left:925.32px;top:433.22px;font-size:13.08px;line-height:13.08px;color:#dcdcdc;-webkit-text-stroke:0.20px #dcdcdc;">0,1</div>
<div style="position:absolute;left:944.70px;top:400.40px;width:5.30px;height:1.20px;background:#a3a3a3;"></div>
<div class="t" style="left:918.04px;top:394.82px;font-size:13.08px;line-height:13.08px;color:#dcdcdc;-webkit-text-stroke:0.20px #dcdcdc;">0,15</div>
<div style="position:absolute;left:944.70px;top:362.40px;width:5.30px;height:1.20px;background:#a3a3a3;"></div>
<div class="t" style="left:925.32px;top:356.42px;font-size:13.08px;line-height:13.08px;color:#dcdcdc;-webkit-text-stroke:0.20px #dcdcdc;">0,2</div>
<div style="position:absolute;left:944.70px;top:323.40px;width:5.30px;height:1.20px;background:#a3a3a3;"></div>
<div class="t" style="left:918.04px;top:318.02px;font-size:13.08px;line-height:13.08px;color:#dcdcdc;-webkit-text-stroke:0.20px #dcdcdc;">0,25</div>
<div style="position:absolute;left:944.70px;top:285.40px;width:5.30px;height:1.20px;background:#a3a3a3;"></div>
<div class="t" style="left:925.32px;top:279.62px;font-size:13.08px;line-height:13.08px;color:#dcdcdc;-webkit-text-stroke:0.20px #dcdcdc;">0,3</div>
<div style="position:absolute;left:944.70px;top:246.40px;width:5.30px;height:1.20px;background:#a3a3a3;"></div>
<div class="t" style="left:918.04px;top:241.22px;font-size:13.08px;line-height:13.08px;color:#dcdcdc;-webkit-text-stroke:0.20px #dcdcdc;">0,35</div>
<div style="position:absolute;left:944.70px;top:208.40px;width:5.30px;height:1.20px;background:#a3a3a3;"></div>
<div class="t" style="left:925.32px;top:202.82px;font-size:13.08px;line-height:13.08px;color:#dcdcdc;-webkit-text-stroke:0.20px #dcdcdc;">0,4</div>
<div style="position:absolute;left:944.70px;top:170.40px;width:5.30px;height:1.20px;background:#a3a3a3;"></div>
<div class="t" style="left:918.04px;top:164.42px;font-size:13.08px;line-height:13.08px;color:#dcdcdc;-webkit-text-stroke:0.20px #dcdcdc;">0,45</div>
<div style="position:absolute;left:944.70px;top:131.40px;width:5.30px;height:1.20px;background:#a3a3a3;"></div>
<div class="t" style="left:925.32px;top:126.02px;font-size:13.08px;line-height:13.08px;color:#dcdcdc;-webkit-text-stroke:0.20px #dcdcdc;">0,5</div>
<div style="position:absolute;left:944.70px;top:93.40px;width:5.30px;height:1.20px;background:#a3a3a3;"></div>
<div class="t" style="left:918.04px;top:87.62px;font-size:13.08px;line-height:13.08px;color:#dcdcdc;-webkit-text-stroke:0.20px #dcdcdc;">0,55</div>
<div style="position:absolute;left:949.40px;top:516.00px;width:1.20px;height:6.00px;background:#a3a3a3;"></div>
<div class="t" style="left:946.40px;top:525.55px;font-size:12.94px;line-height:12.94px;color:#dcdcdc;-webkit-text-stroke:0.19px #dcdcdc;">0</div>
<div style="position:absolute;left:999.40px;top:516.00px;width:1.20px;height:6.00px;background:#a3a3a3;"></div>
<div class="t" style="left:987.41px;top:525.55px;font-size:12.94px;line-height:12.94px;color:#dcdcdc;-webkit-text-stroke:0.19px #dcdcdc;">0,05</div>
<div style="position:absolute;left:1049.40px;top:516.00px;width:1.20px;height:6.00px;background:#a3a3a3;"></div>
<div class="t" style="left:1041.01px;top:525.55px;font-size:12.94px;line-height:12.94px;color:#dcdcdc;-webkit-text-stroke:0.19px #dcdcdc;">0,1</div>
<div style="position:absolute;left:1099.40px;top:516.00px;width:1.20px;height:6.00px;background:#a3a3a3;"></div>
<div class="t" style="left:1087.41px;top:525.55px;font-size:12.94px;line-height:12.94px;color:#dcdcdc;-webkit-text-stroke:0.19px #dcdcdc;">0,15</div>
<div style="position:absolute;left:1149.40px;top:516.00px;width:1.20px;height:6.00px;background:#a3a3a3;"></div>
<div class="t" style="left:1141.01px;top:525.55px;font-size:12.94px;line-height:12.94px;color:#dcdcdc;-webkit-text-stroke:0.19px #dcdcdc;">0,2</div>
<div style="position:absolute;left:1199.40px;top:516.00px;width:1.20px;height:6.00px;background:#a3a3a3;"></div>
<div class="t" style="left:1187.41px;top:525.55px;font-size:12.94px;line-height:12.94px;color:#dcdcdc;-webkit-text-stroke:0.19px #dcdcdc;">0,25</div>
<div style="position:absolute;left:1249.40px;top:516.00px;width:1.20px;height:6.00px;background:#a3a3a3;"></div>
<div class="t" style="left:1241.01px;top:525.55px;font-size:12.94px;line-height:12.94px;color:#dcdcdc;-webkit-text-stroke:0.19px #dcdcdc;">0,3</div>
<div style="position:absolute;left:1299.40px;top:516.00px;width:1.20px;height:6.00px;background:#a3a3a3;"></div>
<div class="t" style="left:1287.41px;top:525.55px;font-size:12.94px;line-height:12.94px;color:#dcdcdc;-webkit-text-stroke:0.19px #dcdcdc;">0,35</div>
<div style="position:absolute;left:1349.40px;top:516.00px;width:1.20px;height:6.00px;background:#a3a3a3;"></div>
<div class="t" style="left:1341.01px;top:525.55px;font-size:12.94px;line-height:12.94px;color:#dcdcdc;-webkit-text-stroke:0.19px #dcdcdc;">0,4</div>
<div style="position:absolute;left:1399.40px;top:516.00px;width:1.20px;height:6.00px;background:#a3a3a3;"></div>
<div class="t" style="left:1387.41px;top:525.55px;font-size:12.94px;line-height:12.94px;color:#dcdcdc;-webkit-text-stroke:0.19px #dcdcdc;">0,45</div>
<div style="position:absolute;left:1449.40px;top:516.00px;width:1.20px;height:6.00px;background:#a3a3a3;"></div>
<div class="t" style="left:1441.01px;top:525.55px;font-size:12.94px;line-height:12.94px;color:#dcdcdc;-webkit-text-stroke:0.19px #dcdcdc;">0,5</div>
<div style="position:absolute;left:1499.40px;top:516.00px;width:1.20px;height:6.00px;background:#a3a3a3;"></div>
<div class="t" style="left:1487.41px;top:525.55px;font-size:12.94px;line-height:12.94px;color:#dcdcdc;-webkit-text-stroke:0.19px #dcdcdc;">0,55</div>
<svg class="fb" style="position:absolute;left:951px;top:54px;" width="599" height="461" viewBox="951 54 599 461"><defs><clipPath id="lc"><polygon points="1206.3,501.9 1206.3,501.9 1206.2,501.9 1206.2,502.0 1206.1,502.0 1206.0,502.1 1205.9,502.1 1205.8,502.2 1205.7,502.2 1205.6,502.3 1205.5,502.3 1205.3,502.3 1205.2,502.4 1205.0,502.4 1204.9,502.4 1204.7,502.4 1204.5,502.4 1204.3,502.4 1204.0,502.4 1203.7,502.3 1203.3,502.2 1203.0,502.1 1202.5,502.0 1202.1,501.8 1201.7,501.6 1201.3,501.4 1200.9,501.2 1200.5,500.9 1200.1,500.6 1199.6,500.3 1199.1,499.9 1198.6,499.5 1198.1,499.1 1197.5,498.7 1196.9,498.3 1196.3,497.8 1195.6,497.2 1194.9,496.6 1194.1,496.0 1193.3,495.4 1192.4,494.6 1191.5,493.9 1190.6,493.1 1189.6,492.3 1188.6,491.5 1187.6,490.6 1186.5,489.7 1185.4,488.7 1184.2,487.7 1183.0,486.7 1181.7,485.7 1180.4,484.6 1179.1,483.5 1177.6,482.3 1176.1,481.1 1174.5,479.7 1172.9,478.4 1171.1,477.0 1169.3,475.5 1167.5,474.0 1165.6,472.4 1163.6,470.8 1161.6,469.1 1159.5,467.4 1157.4,465.6 1155.2,463.8 1152.8,461.8 1150.4,459.7 1148.0,457.5 1145.4,455.3 1142.8,452.9 1140.0,450.4 1137.2,447.7 1134.3,444.9 1131.4,442.1 1128.4,439.2 1125.3,436.0 1122.0,432.5 1118.5,428.6 1114.7,424.4 1110.8,419.9 1106.7,415.0 1102.4,409.9 1098.1,404.4 1093.6,398.6 1089.0,392.6 1084.2,386.2 1079.3,379.5 1074.3,372.5 1069.3,365.2 1064.2,357.6 1059.0,349.8 1053.7,341.5 1048.3,333.0 1042.9,324.3 1037.6,315.5 1032.3,306.6 1027.1,297.6 1021.8,288.4 1016.5,279.1 1011.3,269.8 1006.4,260.5 1001.6,251.4 997.2,242.4 992.9,233.3 988.8,224.3 984.8,215.4 981.1,206.8 977.7,198.4 974.4,190.4 971.4,182.5 968.5,174.9 966.0,167.5 963.6,160.4 961.4,153.8 959.5,147.4 957.8,141.5 956.3,135.8 955.0,130.5 953.9,125.4 953.0,120.6 952.2,116.0 951.6,111.8 951.2,107.9 951.0,104.2 950.9,100.8 950.9,97.5 951.1,94.3 951.5,91.4 951.9,88.7 952.5,86.2 953.3,83.8 954.1,81.6 955.1,79.5 956.2,77.6 957.5,75.9 958.8,74.3 960.3,72.8 961.8,71.5 963.4,70.3 965.1,69.3 966.9,68.4 968.7,67.6 970.6,67.0 972.6,66.3 974.6,65.8 976.7,65.4 978.9,65.1 981.0,64.9 983.3,64.6 985.5,64.4 987.8,64.3 990.1,64.2 992.5,64.1 994.8,64.0 997.2,64.0 999.6,64.0 1001.9,64.0 1004.3,64.0 1006.6,64.0 1009.0,64.0 1011.4,64.1 1013.8,64.2 1016.3,64.2 1018.7,64.3 1021.2,64.4 1023.6,64.6 1026.2,64.7 1028.7,64.8 1031.3,65.0 1033.9,65.2 1036.6,65.4 1039.3,65.6 1042.0,65.8 1044.8,66.0 1047.6,66.2 1050.4,66.5 1053.3,66.7 1056.2,67.0 1059.2,67.3 1062.2,67.6 1065.3,67.9 1068.4,68.2 1071.5,68.5 1074.8,68.8 1078.0,69.2 1081.4,69.5 1084.8,69.9 1088.2,70.2 1091.7,70.6 1095.3,71.0 1098.9,71.4 1102.6,71.8 1106.4,72.2 1110.2,72.6 1114.0,73.0 1118.0,73.5 1122.0,73.9 1126.1,74.4 1130.2,74.9 1134.5,75.3 1138.8,75.8 1143.1,76.3 1147.6,76.8 1152.1,77.3 1156.7,77.9 1161.3,78.4 1166.1,78.9 1170.9,79.5 1175.7,80.0 1180.7,80.6 1185.7,81.2 1190.8,81.8 1195.9,82.4 1201.2,83.0 1206.5,83.6 1211.8,84.2 1217.3,84.8 1222.8,85.4 1228.4,86.1 1234.0,86.7 1239.7,87.4 1245.5,88.0 1251.3,88.7 1257.1,89.4 1263.1,90.1 1269.0,90.7 1275.0,91.4 1281.0,92.1 1287.1,92.8 1293.2,93.5 1299.3,94.2 1305.4,94.9 1311.5,95.6 1317.6,96.3 1323.5,97.0 1329.5,97.7 1335.4,98.4 1341.3,99.1 1347.1,99.7 1353.0,100.4 1358.8,101.1 1364.7,101.7 1370.5,102.4 1376.2,103.1 1381.9,103.7 1387.4,104.3 1392.9,105.0 1398.2,105.6 1403.5,106.2 1408.7,106.8 1413.7,107.3 1418.7,107.9 1423.5,108.5 1428.3,109.0 1433.0,109.5 1437.5,110.1 1442.0,110.6 1446.3,111.1 1450.5,111.6 1454.5,112.0 1458.5,112.5 1462.4,112.9 1466.1,113.4 1469.8,113.8 1473.3,114.2 1476.7,114.6 1480.0,115.0 1483.2,115.3 1486.4,115.7 1489.4,116.0 1492.4,116.4 1495.3,116.7 1498.0,117.0 1500.8,117.3 1503.4,117.6 1506.0,117.9 1508.6,118.2 1511.0,118.5 1513.5,118.8 1515.8,119.1 1518.1,119.3 1520.4,119.6 1522.6,119.8 1524.7,120.1 1526.7,120.3 1528.7,120.6 1530.7,120.8 1532.5,121.0 1534.3,121.2 1536.1,121.4 1537.7,121.6 1539.3,121.8 1540.9,121.9 1542.4,122.1 1543.8,122.3 1545.1,122.4 1546.4,122.6 1547.7,122.7 1548.8,122.8 1550.0,123.0 1551.1,123.1 1552.2,123.2 1553.2,123.3 1554.1,123.4 1555.1,123.6 1555.9,123.7 1556.8,123.8 1557.5,123.8 1558.2,123.9 1558.9,124.0 1559.6,124.1 1560.4,124.2 1561.2,124.3 1562.0,124.4 1562.8,124.5 1563.7,124.6 1564.7,124.7 1565.7,124.8 1566.8,124.9 1568.2,125.1 1569.6,125.2 1570.9,125.4 1572.1,125.5 1572.9,125.6"/></clipPath></defs><g clip-path="url(#lc)"><rect x="967" y="54" fill="#009900"/><rect x="975" y="54" fill="#009900"/><rect x="983" y="54" fill="#009900"/><rect x="991" y="54" fill="#009900"/><rect x="999" y="54" fill="#009900"/><rect x="1007" y="54" fill="#009900"/><rect x="1015" y="54" fill="#009900"/><rect x="1023" y="54" fill="#009900"/><rect x="1031" y="54" fill="#009900"/><rect x="1039" y="54" fill="#009900"/><rect x="1047" y="54" fill="#009900"/><rect x="951" y="62" fill="#009900"/><rect x="959" y="62" fill="#009900"/><rect x="967" y="62" fill="#009900"/><rect x="975" y="62" fill="#009900"/><rect x="983" y="62" fill="#009900"/><rect x="991" y="62" fill="#009900"/><rect x="999" y="62" fill="#009900"/><rect x="1007" y="62" fill="#009900"/><rect x="1015" y="62" fill="#009900"/><rect x="1023" y="62" fill="#009900"/><rect x="1031" y="62" fill="#009900"/><rect x="1039" y="62" fill="#009900"/><rect x="1047" y="62" fill="#009900"/><rect x="1055" y="62" fill="#009900"/><rect x="1063" y="62" fill="#009900"/><rect x="1071" y="62" fill="#049900"/><rect x="1079" y="62" fill="#109900"/><rect x="1087" y="62" fill="#1c9900"/><rect x="1095" y="62" fill="#299900"/><rect x="1103" y="62" fill="#369900"/><rect x="1111" y="62" fill="#459900"/><rect x="1119" y="62" fill="#539900"/><rect x="951" y="70" fill="#009902"/><rect x="959" y="70" fill="#009901"/><rect x="967" y="70" fill="#009901"/><rect x="975" y="70" fill="#009900"/><rect x="983" y="70" fill="#009900"/><rect x="991" y="70" fill="#009900"/><rect x="999" y="70" fill="#009900"/><rect x="1007" y="70" fill="#009900"/><rect x="1015" y="70" fill="#009900"/><rect x="1023" y="70" fill="#009900"/><rect x="1031" y="70" fill="#009900"/><rect x="1039" y="70" fill="#009900"/><rect x="1047" y="70" fill="#009900"/><rect x="1055" y="70" fill="#009900"/><rect x="1063" y="70" fill="#009900"/><rect x="1071" y="70" fill="#029900"/><rect x="1079" y="70" fill="#0e9900"/><rect x="1087" y="70" fill="#1b9900"/><rect x="1095" y="70" fill="#289900"/><rect x="1103" y="70" fill="#369900"/><rect x="1111" y="70" fill="#449900"/><rect x="1119" y="70" fill="#539900"/><rect x="1127" y="70" fill="#639900"/><rect x="1135" y="70" fill="#749900"/><rect x="1143" y="70" fill="#869900"/><rect x="1151" y="70" fill="#999800"/><rect x="1159" y="70" fill="#998700"/><rect x="1167" y="70" fill="#997800"/><rect x="1175" y="70" fill="#996c00"/><rect x="1183" y="70" fill="#996100"/><rect x="1191" y="70" fill="#995800"/><rect x="951" y="78" fill="#00990a"/><rect x="959" y="78" fill="#00990a"/><rect x="967" y="78" fill="#009909"/><rect x="975" y="78" fill="#009909"/><rect x="983" y="78" fill="#009908"/><rect x="991" y="78" fill="#009907"/><rect x="999" y="78" fill="#009907"/><rect x="1007" y="78" fill="#009906"/><rect x="1015" y="78" fill="#009905"/><rect x="1023" y="78" fill="#009904"/><rect x="1031" y="78" fill="#009903"/><rect x="1039" y="78" fill="#009902"/><rect x="1047" y="78" fill="#009902"/><rect x="1055" y="78" fill="#009901"/><rect x="1063" y="78" fill="#009900"/><rect x="1071" y="78" fill="#009900"/><rect x="1079" y="78" fill="#0d9900"/><rect x="1087" y="78" fill="#199900"/><rect x="1095" y="78" fill="#279900"/><rect x="1103" y="78" fill="#359900"/><rect x="1111" y="78" fill="#449900"/><rect x="1119" y="78" fill="#539900"/><rect x="1127" y="78" fill="#649900"/><rect x="1135" y="78" fill="#759900"/><rect x="1143" y="78" fill="#879900"/><rect x="1151" y="78" fill="#999700"/><rect x="1159" y="78" fill="#998500"/><rect x="1167" y="78" fill="#997600"/><rect x="1175" y="78" fill="#996a00"/><rect x="1183" y="78" fill="#995f00"/><rect x="1191" y="78" fill="#995600"/><rect x="1199" y="78" fill="#994e00"/><rect x="1207" y="78" fill="#994700"/><rect x="1215" y="78" fill="#994000"/><rect x="1223" y="78" fill="#993a00"/><rect x="1231" y="78" fill="#993500"/><rect x="1239" y="78" fill="#993100"/><rect x="1247" y="78" fill="#992c00"/><rect x="1255" y="78" fill="#992900"/><rect x="1263" y="78" fill="#992500"/><rect x="951" y="86" fill="#009913"/><rect x="959" y="86" fill="#009913"/><rect x="967" y="86" fill="#009912"/><rect x="975" y="86" fill="#009912"/><rect x="983" y="86" fill="#009911"/><rect x="991" y="86" fill="#009911"/><rect x="999" y="86" fill="#009910"/><rect x="1007" y="86" fill="#009910"/><rect x="1015" y="86" fill="#00990f"/><rect x="1023" y="86" fill="#00990e"/><rect x="1031" y="86" fill="#00990e"/><rect x="1039" y="86" fill="#00990d"/><rect x="1047" y="86" fill="#00990c"/><rect x="1055" y="86" fill="#00990c"/><rect x="1063" y="86" fill="#00990b"/><rect x="1071" y="86" fill="#00990a"/><rect x="1079" y="86" fill="#12ff10"/><rect x="1087" y="86" fill="#28ff0e"/><rect x="1095" y="86" fill="#3fff0d"/><rect x="1103" y="86" fill="#57ff0b"/><rect x="1111" y="86" fill="#70ff09"/><rect x="1119" y="86" fill="#8bff07"/><rect x="1127" y="86" fill="#a7ff05"/><rect x="1135" y="86" fill="#c5ff04"/><rect x="1143" y="86" fill="#e4ff01"/><rect x="1151" y="86" fill="#999500"/><rect x="1159" y="86" fill="#998300"/><rect x="1167" y="86" fill="#997400"/><rect x="1175" y="86" fill="#996800"/><rect x="1183" y="86" fill="#995d00"/><rect x="1191" y="86" fill="#995400"/><rect x="1199" y="86" fill="#994c00"/><rect x="1207" y="86" fill="#994500"/><rect x="1215" y="86" fill="#993e00"/><rect x="1223" y="86" fill="#993900"/><rect x="1231" y="86" fill="#993400"/><rect x="1239" y="86" fill="#992f00"/><rect x="1247" y="86" fill="#992b00"/><rect x="1255" y="86" fill="#992700"/><rect x="1263" y="86" fill="#992300"/><rect x="1271" y="86" fill="#992000"/><rect x="1279" y="86" fill="#991d00"/><rect x="1287" y="86" fill="#991b00"/><rect x="1295" y="86" fill="#991800"/><rect x="1303" y="86" fill="#991600"/><rect x="1311" y="86" fill="#991300"/><rect x="1319" y="86" fill="#991100"/><rect x="1327" y="86" fill="#990f00"/><rect x="1335" y="86" fill="#990e00"/><rect x="951" y="94" fill="#00991c"/><rect x="959" y="94" fill="#00991c"/><rect x="967" y="94" fill="#00991b"/><rect x="975" y="94" fill="#00991b"/><rect x="983" y="94" fill="#00991b"/><rect x="991" y="94" fill="#00991a"/><rect x="999" y="94" fill="#00991a"/><rect x="1007" y="94" fill="#00991a"/><rect x="1015" y="94" fill="#009919"/><rect x="1023" y="94" fill="#009919"/><rect x="1031" y="94" fill="#009918"/><rect x="1039" y="94" fill="#009918"/><rect x="1047" y="94" fill="#009917"/><rect x="1055" y="94" fill="#009917"/><rect x="1063" y="94" fill="#009916"/><rect x="1071" y="94" fill="#009916"/><rect x="1079" y="94" fill="#0fff24"/><rect x="1087" y="94" fill="#26ff23"/><rect x="1095" y="94" fill="#3dff22"/><rect x="1103" y="94" fill="#56ff21"/><rect x="1111" y="94" fill="#6fff1f"/><rect x="1119" y="94" fill="#8bff1e"/><rect x="1127" y="94" fill="#a8ff1d"/><rect x="1135" y="94" fill="#c6ff1b"/><rect x="1143" y="94" fill="#e6ff1a"/><rect x="1151" y="94" fill="#fff518"/><rect x="1159" y="94" fill="#ffd713"/><rect x="1167" y="94" fill="#ffbf10"/><rect x="1175" y="94" fill="#ffaa0d"/><rect x="1183" y="94" fill="#ff980a"/><rect x="1191" y="94" fill="#ff8908"/><rect x="1199" y="94" fill="#ff7b06"/><rect x="1207" y="94" fill="#ff7004"/><rect x="1215" y="94" fill="#ff6503"/><rect x="1223" y="94" fill="#ff5c01"/><rect x="1231" y="94" fill="#ff5300"/><rect x="1239" y="94" fill="#992d00"/><rect x="1247" y="94" fill="#992900"/><rect x="1255" y="94" fill="#992500"/><rect x="1263" y="94" fill="#992200"/><rect x="1271" y="94" fill="#991f00"/><rect x="1279" y="94" fill="#991c00"/><rect x="1287" y="94" fill="#991900"/><rect x="1295" y="94" fill="#991700"/><rect x="1303" y="94" fill="#991400"/><rect x="1311" y="94" fill="#991200"/><rect x="1319" y="94" fill="#991000"/><rect x="1327" y="94" fill="#990e00"/><rect x="1335" y="94" fill="#990c00"/><rect x="1343" y="94" fill="#990b00"/><rect x="1351" y="94" fill="#990900"/><rect x="1359" y="94" fill="#990800"/><rect x="1367" y="94" fill="#990600"/><rect x="1375" y="94" fill="#990500"/><rect x="1383" y="94" fill="#990300"/><rect x="1391" y="94" fill="#990200"/><rect x="1399" y="94" fill="#990100"/><rect x="951" y="102" fill="#009925"/><rect x="959" y="102" fill="#009925"/><rect x="967" y="102" fill="#009925"/><rect x="975" y="102" fill="#009925"/><rect x="983" y="102" fill="#009925"/><rect x="991" y="102" fill="#009924"/><rect x="999" y="102" fill="#009924"/><rect x="1007" y="102" fill="#009924"/><rect x="1015" y="102" fill="#009924"/><rect x="1023" y="102" fill="#009924"/><rect x="1031" y="102" fill="#009923"/><rect x="1039" y="102" fill="#009923"/><rect x="1047" y="102" fill="#009923"/><rect x="1055" y="102" fill="#009923"/><rect x="1063" y="102" fill="#009923"/><rect x="1071" y="102" fill="#009922"/><rect x="1079" y="102" fill="#0cff39"/><rect x="1087" y="102" fill="#23ff38"/><rect x="1095" y="102" fill="#3bff38"/><rect x="1103" y="102" fill="#54ff37"/><rect x="1111" y="102" fill="#6fff37"/><rect x="1119" y="102" fill="#8bff36"/><rect x="1127" y="102" fill="#a8ff36"/><rect x="1135" y="102" fill="#c8ff35"/><rect x="1143" y="102" fill="#e9ff34"/><rect x="1151" y="102" fill="#fff131"/><rect x="1159" y="102" fill="#ffd42a"/><rect x="1167" y="102" fill="#ffbb24"/><rect x="1175" y="102" fill="#ffa620"/><rect x="1183" y="102" fill="#ff951c"/><rect x="1191" y="102" fill="#ff8518"/><rect x="1199" y="102" fill="#ff7815"/><rect x="1207" y="102" fill="#ff6c13"/><rect x="1215" y="102" fill="#ff6210"/><rect x="1223" y="102" fill="#ff590e"/><rect x="1231" y="102" fill="#ff500c"/><rect x="1239" y="102" fill="#ff490b"/><rect x="1247" y="102" fill="#ff4209"/><rect x="1255" y="102" fill="#ff3c08"/><rect x="1263" y="102" fill="#ff3606"/><rect x="1271" y="102" fill="#ff3105"/><rect x="1279" y="102" fill="#ff2c04"/><rect x="1287" y="102" fill="#ff2803"/><rect x="1295" y="102" fill="#ff2402"/><rect x="1303" y="102" fill="#ff2001"/><rect x="1311" y="102" fill="#ff1c00"/><rect x="1319" y="102" fill="#ff1900"/><rect x="1327" y="102" fill="#990d00"/><rect x="1335" y="102" fill="#990b00"/><rect x="1343" y="102" fill="#990900"/><rect x="1351" y="102" fill="#990800"/><rect x="1359" y="102" fill="#990600"/><rect x="1367" y="102" fill="#990500"/><rect x="1375" y="102" fill="#990400"/><rect x="1383" y="102" fill="#990200"/><rect x="1391" y="102" fill="#990100"/><rect x="1399" y="102" fill="#990000"/><rect x="1407" y="102" fill="#990000"/><rect x="1415" y="102" fill="#990000"/><rect x="1423" y="102" fill="#990000"/><rect x="1431" y="102" fill="#990000"/><rect x="1439" y="102" fill="#990000"/><rect x="1447" y="102" fill="#990000"/><rect x="1455" y="102" fill="#990000"/><rect x="1463" y="102" fill="#990000"/><rect x="1471" y="102" fill="#990000"/><rect x="951" y="110" fill="#00992f"/><rect x="959" y="110" fill="#00992f"/><rect x="967" y="110" fill="#00992f"/><rect x="975" y="110" fill="#00992f"/><rect x="983" y="110" fill="#00992f"/><rect x="991" y="110" fill="#00992f"/><rect x="999" y="110" fill="#00992f"/><rect x="1007" y="110" fill="#00992f"/><rect x="1015" y="110" fill="#00992f"/><rect x="1023" y="110" fill="#00992f"/><rect x="1031" y="110" fill="#00992f"/><rect x="1039" y="110" fill="#00992f"/><rect x="1047" y="110" fill="#00992f"/><rect x="1055" y="110" fill="#00992f"/><rect x="1063" y="110" fill="#00992f"/><rect x="1071" y="110" fill="#00992f"/><rect x="1079" y="110" fill="#09ff4f"/><rect x="1087" y="110" fill="#20ff4f"/><rect x="1095" y="110" fill="#39ff4f"/><rect x="1103" y="110" fill="#52ff4f"/><rect x="1111" y="110" fill="#6eff50"/><rect x="1119" y="110" fill="#8aff50"/><rect x="1127" y="110" fill="#a9ff50"/><rect x="1135" y="110" fill="#c9ff50"/><rect x="1143" y="110" fill="#ecff50"/><rect x="1151" y="110" fill="#ffee4b"/><rect x="1159" y="110" fill="#ffd041"/><rect x="1167" y="110" fill="#ffb73a"/><rect x="1175" y="110" fill="#ffa333"/><rect x="1183" y="110" fill="#ff912e"/><rect x="1191" y="110" fill="#ff8229"/><rect x="1199" y="110" fill="#ff7525"/><rect x="1207" y="110" fill="#ff6921"/><rect x="1215" y="110" fill="#ff5f1e"/><rect x="1223" y="110" fill="#ff561b"/><rect x="1231" y="110" fill="#ff4d19"/><rect x="1239" y="110" fill="#ff4616"/><rect x="1247" y="110" fill="#ff3f14"/><rect x="1255" y="110" fill="#ff3912"/><rect x="1263" y="110" fill="#ff3311"/><rect x="1271" y="110" fill="#ff2e0f"/><rect x="1279" y="110" fill="#ff2a0d"/><rect x="1287" y="110" fill="#ff250c"/><rect x="1295" y="110" fill="#ff210b"/><rect x="1303" y="110" fill="#ff1d0a"/><rect x="1311" y="110" fill="#ff1a09"/><rect x="1319" y="110" fill="#ff1708"/><rect x="1327" y="110" fill="#ff1407"/><rect x="1335" y="110" fill="#ff1106"/><rect x="1343" y="110" fill="#ff0e05"/><rect x="1351" y="110" fill="#ff0b04"/><rect x="1359" y="110" fill="#ff0903"/><rect x="1367" y="110" fill="#ff0703"/><rect x="1375" y="110" fill="#ff0502"/><rect x="1383" y="110" fill="#ff0201"/><rect x="1391" y="110" fill="#ff0101"/><rect x="1399" y="110" fill="#990000"/><rect x="1407" y="110" fill="#990000"/><rect x="1415" y="110" fill="#990000"/><rect x="1423" y="110" fill="#990000"/><rect x="1431" y="110" fill="#990000"/><rect x="1439" y="110" fill="#990000"/><rect x="1447" y="110" fill="#990000"/><rect x="1455" y="110" fill="#990000"/><rect x="1463" y="110" fill="#990000"/><rect x="1471" y="110" fill="#990000"/><rect x="1479" y="110" fill="#990000"/><rect x="1487" y="110" fill="#990000"/><rect x="1495" y="110" fill="#990000"/><rect x="1503" y="110" fill="#990000"/><rect x="1511" y="110" fill="#990000"/><rect x="1519" y="110" fill="#990000"/><rect x="1527" y="110" fill="#990000"/><rect x="1535" y="110" fill="#990000"/><rect x="1543" y="110" fill="#990000"/><rect x="951" y="118" fill="#009939"/><rect x="959" y="118" fill="#009939"/><rect x="967" y="118" fill="#009939"/><rect x="975" y="118" fill="#009939"/><rect x="983" y="118" fill="#00993a"/><rect x="991" y="118" fill="#00993a"/><rect x="999" y="118" fill="#00993a"/><rect x="1007" y="118" fill="#00993a"/><rect x="1015" y="118" fill="#00993b"/><rect x="1023" y="118" fill="#00993b"/><rect x="1031" y="118" fill="#00993b"/><rect x="1039" y="118" fill="#00993c"/><rect x="1047" y="118" fill="#00993c"/><rect x="1055" y="118" fill="#00993c"/><rect x="1063" y="118" fill="#00993d"/><rect x="1071" y="118" fill="#00993d"/><rect x="1079" y="118" fill="#06ff67"/><rect x="1087" y="118" fill="#1dff67"/><rect x="1095" y="118" fill="#36ff68"/><rect x="1103" y="118" fill="#51ff69"/><rect x="1111" y="118" fill="#6dff6a"/><rect x="1119" y="118" fill="#8aff6b"/><rect x="1127" y="118" fill="#aaff6b"/><rect x="1135" y="118" fill="#cbff6c"/><rect x="1143" y="118" fill="#eeff6e"/><rect x="1151" y="118" fill="#ffea66"/><rect x="1159" y="118" fill="#ffcc5a"/><rect x="1167" y="118" fill="#ffb450"/><rect x="1175" y="118" fill="#ff9f47"/><rect x="1183" y="118" fill="#ff8d40"/><rect x="1191" y="118" fill="#ff7e3a"/><rect x="1199" y="118" fill="#ff7135"/><rect x="1207" y="118" fill="#ff6630"/><rect x="1215" y="118" fill="#ff5b2c"/><rect x="1223" y="118" fill="#ff5228"/><rect x="1231" y="118" fill="#ff4a25"/><rect x="1239" y="118" fill="#ff4322"/><rect x="1247" y="118" fill="#ff3c20"/><rect x="1255" y="118" fill="#ff361d"/><rect x="1263" y="118" fill="#ff311b"/><rect x="1271" y="118" fill="#ff2c19"/><rect x="1279" y="118" fill="#ff2717"/><rect x="1287" y="118" fill="#ff2315"/><rect x="1295" y="118" fill="#ff1f14"/><rect x="1303" y="118" fill="#ff1b12"/><rect x="1311" y="118" fill="#ff1811"/><rect x="1319" y="118" fill="#ff140f"/><rect x="1327" y="118" fill="#ff110e"/><rect x="1335" y="118" fill="#ff0e0d"/><rect x="1343" y="118" fill="#ff0c0c"/><rect x="1351" y="118" fill="#ff090b"/><rect x="1359" y="118" fill="#ff070a"/><rect x="1367" y="118" fill="#ff0509"/><rect x="1375" y="118" fill="#ff0308"/><rect x="1383" y="118" fill="#ff0107"/><rect x="1391" y="118" fill="#990004"/><rect x="1399" y="118" fill="#990003"/><rect x="1407" y="118" fill="#990003"/><rect x="1415" y="118" fill="#990003"/><rect x="1423" y="118" fill="#990002"/><rect x="1431" y="118" fill="#990002"/><rect x="1439" y="118" fill="#990001"/><rect x="1447" y="118" fill="#990001"/><rect x="1455" y="118" fill="#990001"/><rect x="1463" y="118" fill="#990001"/><rect x="1471" y="118" fill="#990000"/><rect x="1479" y="118" fill="#990000"/><rect x="1487" y="118" fill="#990000"/><rect x="1495" y="118" fill="#990000"/><rect x="1503" y="118" fill="#990000"/><rect x="1511" y="118" fill="#990000"/><rect x="1519" y="118" fill="#990000"/><rect x="1527" y="118" fill="#990000"/><rect x="1535" y="118" fill="#990000"/><rect x="1543" y="118" fill="#990000"/><rect x="951" y="126" fill="#009943"/><rect x="959" y="126" fill="#009943"/><rect x="967" y="126" fill="#009944"/><rect x="975" y="126" fill="#009944"/><rect x="983" y="126" fill="#009945"/><rect x="991" y="126" fill="#009945"/><rect x="999" y="126" fill="#009946"/><rect x="1007" y="126" fill="#009946"/><rect x="1015" y="126" fill="#009947"/><rect x="1023" y="126" fill="#009947"/><rect x="1031" y="126" fill="#009948"/><rect x="1039" y="126" fill="#009949"/><rect x="1047" y="126" fill="#009949"/><rect x="1055" y="126" fill="#00994a"/><rect x="1063" y="126" fill="#00994b"/><rect x="1071" y="126" fill="#00994b"/><rect x="1079" y="126" fill="#02ff7f"/><rect x="1087" y="126" fill="#1aff81"/><rect x="1095" y="126" fill="#34ff82"/><rect x="1103" y="126" fill="#4fff84"/><rect x="1111" y="126" fill="#6bff85"/><rect x="1119" y="126" fill="#8aff87"/><rect x="1127" y="126" fill="#aaff89"/><rect x="1135" y="126" fill="#cdff8b"/><rect x="1143" y="126" fill="#f2ff8d"/><rect x="1151" y="126" fill="#ffe782"/><rect x="1159" y="126" fill="#ffc873"/><rect x="1167" y="126" fill="#ffb066"/><rect x="1175" y="126" fill="#ff9b5c"/><rect x="1183" y="126" fill="#ff8a53"/><rect x="1191" y="126" fill="#ff7b4c"/><rect x="1199" y="126" fill="#ff6d45"/><rect x="1207" y="126" fill="#ff623f"/><rect x="1215" y="126" fill="#ff583a"/><rect x="1223" y="126" fill="#ff4f36"/><rect x="1231" y="126" fill="#ff4732"/><rect x="1239" y="126" fill="#ff402e"/><rect x="1247" y="126" fill="#ff392b"/><rect x="1255" y="126" fill="#ff3328"/><rect x="1263" y="126" fill="#ff2e25"/><rect x="1271" y="126" fill="#ff2923"/><rect x="1279" y="126" fill="#ff2421"/><rect x="1287" y="126" fill="#ff201e"/><rect x="1295" y="126" fill="#ff1c1c"/><rect x="1303" y="126" fill="#ff191b"/><rect x="1311" y="126" fill="#ff1519"/><rect x="1319" y="126" fill="#ff1217"/><rect x="1327" y="126" fill="#ff0f16"/><rect x="1335" y="126" fill="#ff0c15"/><rect x="1343" y="126" fill="#ff0a13"/><rect x="1351" y="126" fill="#ff0712"/><rect x="1359" y="126" fill="#ff0511"/><rect x="1367" y="126" fill="#ff0310"/><rect x="1375" y="126" fill="#ff010f"/><rect x="1383" y="126" fill="#990008"/><rect x="1391" y="126" fill="#990007"/><rect x="1399" y="126" fill="#990007"/><rect x="1407" y="126" fill="#990006"/><rect x="1415" y="126" fill="#990006"/><rect x="1423" y="126" fill="#990005"/><rect x="1431" y="126" fill="#990005"/><rect x="1439" y="126" fill="#990005"/><rect x="1447" y="126" fill="#990004"/><rect x="1455" y="126" fill="#990004"/><rect x="1463" y="126" fill="#990003"/><rect x="1471" y="126" fill="#990003"/><rect x="1479" y="126" fill="#990003"/><rect x="1487" y="126" fill="#990002"/><rect x="1495" y="126" fill="#990002"/><rect x="1503" y="126" fill="#990002"/><rect x="1511" y="126" fill="#990002"/><rect x="1519" y="126" fill="#990001"/><rect x="1527" y="126" fill="#990001"/><rect x="1535" y="126" fill="#990001"/><rect x="1543" y="126" fill="#990001"/><rect x="951" y="134" fill="#00994e"/><rect x="959" y="134" fill="#00994e"/><rect x="967" y="134" fill="#00994f"/><rect x="975" y="134" fill="#009950"/><rect x="983" y="134" fill="#009950"/><rect x="991" y="134" fill="#009951"/><rect x="999" y="134" fill="#009952"/><rect x="1007" y="134" fill="#009953"/><rect x="1015" y="134" fill="#009953"/><rect x="1023" y="134" fill="#009954"/><rect x="1031" y="134" fill="#009955"/><rect x="1039" y="134" fill="#009956"/><rect x="1047" y="134" fill="#009957"/><rect x="1055" y="134" fill="#009958"/><rect x="1063" y="134" fill="#009959"/><rect x="1071" y="134" fill="#00995b"/><rect x="1079" y="134" fill="#00995c"/><rect x="1087" y="134" fill="#17ff9b"/><rect x="1095" y="134" fill="#31ff9e"/><rect x="1103" y="134" fill="#4dffa0"/><rect x="1111" y="134" fill="#6affa3"/><rect x="1119" y="134" fill="#8affa5"/><rect x="1127" y="134" fill="#abffa8"/><rect x="1135" y="134" fill="#cfffab"/><rect x="1143" y="134" fill="#f5ffaf"/><rect x="1151" y="134" fill="#ffe39f"/><rect x="1159" y="134" fill="#ffc48c"/><rect x="1167" y="134" fill="#ffac7e"/><rect x="1175" y="134" fill="#ff9771"/><rect x="1183" y="134" fill="#ff8667"/><rect x="1191" y="134" fill="#ff775e"/><rect x="1199" y="134" fill="#ff6a56"/><rect x="1207" y="134" fill="#ff5f4f"/><rect x="1215" y="134" fill="#ff5549"/><rect x="1223" y="134" fill="#ff4c44"/><rect x="1231" y="134" fill="#ff443f"/><rect x="1239" y="134" fill="#ff3d3b"/><rect x="1247" y="134" fill="#ff3637"/><rect x="1255" y="134" fill="#ff3033"/><rect x="1263" y="134" fill="#ff2b30"/><rect x="1271" y="134" fill="#ff262d"/><rect x="1279" y="134" fill="#ff222a"/><rect x="1287" y="134" fill="#ff1e28"/><rect x="1295" y="134" fill="#ff1a25"/><rect x="1303" y="134" fill="#ff1623"/><rect x="1311" y="134" fill="#ff1321"/><rect x="1319" y="134" fill="#ff101f"/><rect x="1327" y="134" fill="#ff0d1e"/><rect x="1335" y="134" fill="#ff0a1c"/><rect x="1343" y="134" fill="#ff081b"/><rect x="1351" y="134" fill="#ff0519"/><rect x="1359" y="134" fill="#ff0318"/><rect x="1367" y="134" fill="#ff0116"/><rect x="1375" y="134" fill="#99000d"/><rect x="1383" y="134" fill="#99000c"/><rect x="1391" y="134" fill="#99000b"/><rect x="1399" y="134" fill="#99000b"/><rect x="1407" y="134" fill="#99000a"/><rect x="1415" y="134" fill="#990009"/><rect x="1423" y="134" fill="#990009"/><rect x="1431" y="134" fill="#990008"/><rect x="1439" y="134" fill="#990008"/><rect x="1447" y="134" fill="#990007"/><rect x="1455" y="134" fill="#990007"/><rect x="1463" y="134" fill="#990006"/><rect x="1471" y="134" fill="#990006"/><rect x="1479" y="134" fill="#990006"/><rect x="1487" y="134" fill="#990005"/><rect x="1495" y="134" fill="#990005"/><rect x="1503" y="134" fill="#990005"/><rect x="1511" y="134" fill="#990004"/><rect x="1519" y="134" fill="#990004"/><rect x="1527" y="134" fill="#990004"/><rect x="1535" y="134" fill="#990003"/><rect x="1543" y="134" fill="#990003"/><rect x="951" y="142" fill="#009959"/><rect x="959" y="142" fill="#00995a"/><rect x="967" y="142" fill="#00995b"/><rect x="975" y="142" fill="#00995b"/><rect x="983" y="142" fill="#00995c"/><rect x="991" y="142" fill="#00995d"/><rect x="999" y="142" fill="#00995e"/><rect x="1007" y="142" fill="#009960"/><rect x="1015" y="142" fill="#009961"/><rect x="1023" y="142" fill="#009962"/><rect x="1031" y="142" fill="#009963"/><rect x="1039" y="142" fill="#009964"/><rect x="1047" y="142" fill="#009966"/><rect x="1055" y="142" fill="#009967"/><rect x="1063" y="142" fill="#009969"/><rect x="1071" y="142" fill="#00996a"/><rect x="1079" y="142" fill="#00996c"/><rect x="1087" y="142" fill="#13ffb8"/><rect x="1095" y="142" fill="#2effbb"/><rect x="1103" y="142" fill="#4bffbe"/><rect x="1111" y="142" fill="#69ffc2"/><rect x="1119" y="142" fill="#89ffc6"/><rect x="1127" y="142" fill="#acffca"/><rect x="1135" y="142" fill="#d1ffce"/><rect x="1143" y="142" fill="#f8ffd3"/><rect x="1151" y="142" fill="#ffdfbd"/><rect x="1159" y="142" fill="#ffc0a7"/><rect x="1167" y="142" fill="#ffa896"/><rect x="1175" y="142" fill="#ff9387"/><rect x="1183" y="142" fill="#ff827b"/><rect x="1191" y="142" fill="#ff7370"/><rect x="1199" y="142" fill="#ff6667"/><rect x="1207" y="142" fill="#ff5b5f"/><rect x="1215" y="142" fill="#ff5158"/><rect x="1223" y="142" fill="#ff4852"/><rect x="1231" y="142" fill="#ff414c"/><rect x="1239" y="142" fill="#ff3a47"/><rect x="1247" y="142" fill="#ff3343"/><rect x="1255" y="142" fill="#ff2d3f"/><rect x="1263" y="142" fill="#ff283b"/><rect x="1271" y="142" fill="#ff2337"/><rect x="1279" y="142" fill="#ff1f34"/><rect x="1287" y="142" fill="#ff1b31"/><rect x="1295" y="142" fill="#ff172f"/><rect x="1303" y="142" fill="#ff142c"/><rect x="1311" y="142" fill="#ff102a"/><rect x="1319" y="142" fill="#ff0d28"/><rect x="1327" y="142" fill="#ff0b26"/><rect x="1335" y="142" fill="#ff0824"/><rect x="1343" y="142" fill="#ff0522"/><rect x="1351" y="142" fill="#ff0320"/><rect x="1359" y="142" fill="#ff011f"/><rect x="1367" y="142" fill="#990011"/><rect x="1375" y="142" fill="#990010"/><rect x="1383" y="142" fill="#990010"/><rect x="1391" y="142" fill="#99000f"/><rect x="1399" y="142" fill="#99000e"/><rect x="1407" y="142" fill="#99000d"/><rect x="1415" y="142" fill="#99000d"/><rect x="1423" y="142" fill="#99000c"/><rect x="1431" y="142" fill="#99000c"/><rect x="1439" y="142" fill="#99000b"/><rect x="1447" y="142" fill="#99000b"/><rect x="1455" y="142" fill="#99000a"/><rect x="1463" y="142" fill="#990009"/><rect x="1471" y="142" fill="#990009"/><rect x="1479" y="142" fill="#990009"/><rect x="1487" y="142" fill="#990008"/><rect x="1495" y="142" fill="#990008"/><rect x="1503" y="142" fill="#990007"/><rect x="1511" y="142" fill="#990007"/><rect x="1519" y="142" fill="#990007"/><rect x="1527" y="142" fill="#990006"/><rect x="1535" y="142" fill="#990006"/><rect x="1543" y="142" fill="#990005"/><rect x="951" y="150" fill="#009964"/><rect x="959" y="150" fill="#009965"/><rect x="967" y="150" fill="#009967"/><rect x="975" y="150" fill="#009968"/><rect x="983" y="150" fill="#009969"/><rect x="991" y="150" fill="#00996a"/><rect x="999" y="150" fill="#00996c"/><rect x="1007" y="150" fill="#00996d"/><rect x="1015" y="150" fill="#00996f"/><rect x="1023" y="150" fill="#009970"/><rect x="1031" y="150" fill="#009972"/><rect x="1039" y="150" fill="#009973"/><rect x="1047" y="150" fill="#009975"/><rect x="1055" y="150" fill="#009977"/><rect x="1063" y="150" fill="#009979"/><rect x="1071" y="150" fill="#00997b"/><rect x="1079" y="150" fill="#00997e"/><rect x="1087" y="150" fill="#10ffd6"/><rect x="1095" y="150" fill="#2bffda"/><rect x="1103" y="150" fill="#49ffde"/><rect x="1111" y="150" fill="#68ffe3"/><rect x="1119" y="150" fill="#89ffe8"/><rect x="1127" y="150" fill="#adffed"/><rect x="1135" y="150" fill="#d3fff3"/><rect x="1143" y="150" fill="#fcfffa"/><rect x="1151" y="150" fill="#ffdadc"/><rect x="1159" y="150" fill="#ffbcc3"/><rect x="1167" y="150" fill="#ffa3ae"/><rect x="1175" y="150" fill="#ff8f9d"/><rect x="1183" y="150" fill="#ff7e8f"/><rect x="1191" y="150" fill="#ff6f83"/><rect x="1199" y="150" fill="#ff6278"/><rect x="1207" y="150" fill="#ff576f"/><rect x="1215" y="150" fill="#ff4e67"/><rect x="1223" y="150" fill="#ff4560"/><rect x="1231" y="150" fill="#ff3d5a"/><rect x="1239" y="150" fill="#ff3654"/><rect x="1247" y="150" fill="#ff304f"/><rect x="1255" y="150" fill="#ff2a4a"/><rect x="1263" y="150" fill="#ff2546"/><rect x="1271" y="150" fill="#ff2142"/><rect x="1279" y="150" fill="#ff1c3e"/><rect x="1287" y="150" fill="#ff183b"/><rect x="1295" y="150" fill="#ff1538"/><rect x="1303" y="150" fill="#ff1135"/><rect x="1311" y="150" fill="#ff0e32"/><rect x="1319" y="150" fill="#ff0b30"/><rect x="1327" y="150" fill="#ff082e"/><rect x="1335" y="150" fill="#ff062b"/><rect x="1343" y="150" fill="#ff0329"/><rect x="1351" y="150" fill="#ff0127"/><rect x="1359" y="150" fill="#990016"/><rect x="1367" y="150" fill="#990015"/><rect x="1375" y="150" fill="#990014"/><rect x="1383" y="150" fill="#990014"/><rect x="1391" y="150" fill="#990013"/><rect x="1399" y="150" fill="#990012"/><rect x="1407" y="150" fill="#990011"/><rect x="1415" y="150" fill="#990010"/><rect x="1423" y="150" fill="#990010"/><rect x="1431" y="150" fill="#99000f"/><rect x="1439" y="150" fill="#99000e"/><rect x="1447" y="150" fill="#99000e"/><rect x="1455" y="150" fill="#99000d"/><rect x="1463" y="150" fill="#99000d"/><rect x="1471" y="150" fill="#99000c"/><rect x="1479" y="150" fill="#99000b"/><rect x="1487" y="150" fill="#99000b"/><rect x="1495" y="150" fill="#99000a"/><rect x="1503" y="150" fill="#99000a"/><rect x="1511" y="150" fill="#99000a"/><rect x="1519" y="150" fill="#990009"/><rect x="1527" y="150" fill="#990009"/><rect x="1535" y="150" fill="#990008"/><rect x="1543" y="150" fill="#990008"/><rect x="951" y="158" fill="#009970"/><rect x="959" y="158" fill="#009972"/><rect x="967" y="158" fill="#009973"/><rect x="975" y="158" fill="#009975"/><rect x="983" y="158" fill="#009976"/><rect x="991" y="158" fill="#009978"/><rect x="999" y="158" fill="#009979"/><rect x="1007" y="158" fill="#00997b"/><rect x="1015" y="158" fill="#00997d"/><rect x="1023" y="158" fill="#00997f"/><rect x="1031" y="158" fill="#009981"/><rect x="1039" y="158" fill="#009983"/><rect x="1047" y="158" fill="#009985"/><rect x="1055" y="158" fill="#009988"/><rect x="1063" y="158" fill="#00998a"/><rect x="1071" y="158" fill="#00998d"/><rect x="1079" y="158" fill="#009990"/><rect x="1087" y="158" fill="#0cfff5"/><rect x="1095" y="158" fill="#28fffb"/><rect x="1103" y="158" fill="#46fdff"/><rect x="1111" y="158" fill="#63f7ff"/><rect x="1119" y="158" fill="#82f1ff"/><rect x="1127" y="158" fill="#a0ebff"/><rect x="1135" y="158" fill="#c0e5ff"/><rect x="1143" y="158" fill="#e0deff"/><rect x="1151" y="158" fill="#ffd6fc"/><rect x="1159" y="158" fill="#ffb8df"/><rect x="1167" y="158" fill="#ff9fc8"/><rect x="1175" y="158" fill="#ff8bb4"/><rect x="1183" y="158" fill="#ff79a4"/><rect x="1191" y="158" fill="#ff6b96"/><rect x="1199" y="158" fill="#ff5e8a"/><rect x="1207" y="158" fill="#ff5480"/><rect x="1215" y="158" fill="#ff4a77"/><rect x="1223" y="158" fill="#ff416e"/><rect x="1231" y="158" fill="#ff3a67"/><rect x="1239" y="158" fill="#ff3361"/><rect x="1247" y="158" fill="#ff2d5b"/><rect x="1255" y="158" fill="#ff2756"/><rect x="1263" y="158" fill="#ff2251"/><rect x="1271" y="158" fill="#ff1e4c"/><rect x="1279" y="158" fill="#ff1a48"/><rect x="1287" y="158" fill="#ff1645"/><rect x="1295" y="158" fill="#ff1241"/><rect x="1303" y="158" fill="#ff0f3e"/><rect x="1311" y="158" fill="#ff0c3b"/><rect x="1319" y="158" fill="#ff0938"/><rect x="1327" y="158" fill="#ff0636"/><rect x="1335" y="158" fill="#ff0333"/><rect x="1343" y="158" fill="#ff0131"/><rect x="1351" y="158" fill="#99001c"/><rect x="1359" y="158" fill="#99001b"/><rect x="1367" y="158" fill="#99001a"/><rect x="1375" y="158" fill="#990018"/><rect x="1383" y="158" fill="#990017"/><rect x="1391" y="158" fill="#990016"/><rect x="1399" y="158" fill="#990016"/><rect x="1407" y="158" fill="#990015"/><rect x="1415" y="158" fill="#990014"/><rect x="1423" y="158" fill="#990013"/><rect x="1431" y="158" fill="#990012"/><rect x="1439" y="158" fill="#990012"/><rect x="1447" y="158" fill="#990011"/><rect x="1455" y="158" fill="#990010"/><rect x="1463" y="158" fill="#990010"/><rect x="1471" y="158" fill="#99000f"/><rect x="1479" y="158" fill="#99000e"/><rect x="1487" y="158" fill="#99000e"/><rect x="1495" y="158" fill="#99000d"/><rect x="1503" y="158" fill="#99000d"/><rect x="1511" y="158" fill="#99000c"/><rect x="1519" y="158" fill="#99000c"/><rect x="1527" y="158" fill="#99000b"/><rect x="1535" y="158" fill="#99000b"/><rect x="1543" y="158" fill="#99000a"/><rect x="959" y="166" fill="#00997e"/><rect x="967" y="166" fill="#009980"/><rect x="975" y="166" fill="#009982"/><rect x="983" y="166" fill="#009984"/><rect x="991" y="166" fill="#009986"/><rect x="999" y="166" fill="#009988"/><rect x="1007" y="166" fill="#00998a"/><rect x="1015" y="166" fill="#00998c"/><rect x="1023" y="166" fill="#00998f"/><rect x="1031" y="166" fill="#009991"/><rect x="1039" y="166" fill="#009994"/><rect x="1047" y="166" fill="#009997"/><rect x="1055" y="166" fill="#009899"/><rect x="1063" y="166" fill="#009599"/><rect x="1071" y="166" fill="#009199"/><rect x="1079" y="166" fill="#008e99"/><rect x="1087" y="166" fill="#07e8ff"/><rect x="1095" y="166" fill="#21e3ff"/><rect x="1103" y="166" fill="#3bddff"/><rect x="1111" y="166" fill="#56d8ff"/><rect x="1119" y="166" fill="#71d2ff"/><rect x="1127" y="166" fill="#8cccff"/><rect x="1135" y="166" fill="#a9c7ff"/><rect x="1143" y="166" fill="#c5c1ff"/><rect x="1151" y="166" fill="#e3baff"/><rect x="1159" y="166" fill="#ffb3fd"/><rect x="1167" y="166" fill="#ff9ae2"/><rect x="1175" y="166" fill="#ff86cc"/><rect x="1183" y="166" fill="#ff75b9"/><rect x="1191" y="166" fill="#ff67aa"/><rect x="1199" y="166" fill="#ff5a9c"/><rect x="1207" y="166" fill="#ff5091"/><rect x="1215" y="166" fill="#ff4686"/><rect x="1223" y="166" fill="#ff3e7d"/><rect x="1231" y="166" fill="#ff3675"/><rect x="1239" y="166" fill="#ff306e"/><rect x="1247" y="166" fill="#ff2a67"/><rect x="1255" y="166" fill="#ff2461"/><rect x="1263" y="166" fill="#ff1f5c"/><rect x="1271" y="166" fill="#ff1b57"/><rect x="1279" y="166" fill="#ff1753"/><rect x="1287" y="166" fill="#ff134e"/><rect x="1295" y="166" fill="#ff0f4b"/><rect x="1303" y="166" fill="#ff0c47"/><rect x="1311" y="166" fill="#ff0944"/><rect x="1319" y="166" fill="#ff0641"/><rect x="1327" y="166" fill="#ff043e"/><rect x="1335" y="166" fill="#ff013b"/><rect x="1343" y="166" fill="#990022"/><rect x="1351" y="166" fill="#990020"/><rect x="1359" y="166" fill="#99001f"/><rect x="1367" y="166" fill="#99001e"/><rect x="1375" y="166" fill="#99001c"/><rect x="1383" y="166" fill="#99001b"/><rect x="1391" y="166" fill="#99001a"/><rect x="1399" y="166" fill="#990019"/><rect x="1407" y="166" fill="#990018"/><rect x="1415" y="166" fill="#990017"/><rect x="1423" y="166" fill="#990016"/><rect x="1431" y="166" fill="#990016"/><rect x="1439" y="166" fill="#990015"/><rect x="1447" y="166" fill="#990014"/><rect x="1455" y="166" fill="#990013"/><rect x="1463" y="166" fill="#990013"/><rect x="1471" y="166" fill="#990012"/><rect x="1479" y="166" fill="#990011"/><rect x="1487" y="166" fill="#990011"/><rect x="1495" y="166" fill="#990010"/><rect x="1503" y="166" fill="#990010"/><rect x="1511" y="166" fill="#99000f"/><rect x="1519" y="166" fill="#99000e"/><rect x="1527" y="166" fill="#99000e"/><rect x="1535" y="166" fill="#99000d"/><rect x="959" y="174" fill="#00998c"/><rect x="967" y="174" fill="#00998e"/><rect x="975" y="174" fill="#009990"/><rect x="983" y="174" fill="#009992"/><rect x="991" y="174" fill="#009994"/><rect x="999" y="174" fill="#009997"/><rect x="1007" y="174" fill="#009899"/><rect x="1015" y="174" fill="#009599"/><rect x="1023" y="174" fill="#009299"/><rect x="1031" y="174" fill="#009099"/><rect x="1039" y="174" fill="#008d99"/><rect x="1047" y="174" fill="#008a99"/><rect x="1055" y="174" fill="#008799"/><rect x="1063" y="174" fill="#008499"/><rect x="1071" y="174" fill="#008199"/><rect x="1079" y="174" fill="#007e99"/><rect x="1087" y="174" fill="#02ceff"/><rect x="1095" y="174" fill="#1ac9ff"/><rect x="1103" y="174" fill="#32c4ff"/><rect x="1111" y="174" fill="#4abeff"/><rect x="1119" y="174" fill="#63b9ff"/><rect x="1127" y="174" fill="#7cb3ff"/><rect x="1135" y="174" fill="#95aeff"/><rect x="1143" y="174" fill="#afa8ff"/><rect x="1151" y="174" fill="#caa2ff"/><rect x="1159" y="174" fill="#e59dff"/><rect x="1167" y="174" fill="#ff96fd"/><rect x="1175" y="174" fill="#ff82e4"/><rect x="1183" y="174" fill="#ff71d0"/><rect x="1191" y="174" fill="#ff63be"/><rect x="1199" y="174" fill="#ff56af"/><rect x="1207" y="174" fill="#ff4ca2"/><rect x="1215" y="174" fill="#ff4296"/><rect x="1223" y="174" fill="#ff3a8c"/><rect x="1231" y="174" fill="#ff3383"/><rect x="1239" y="174" fill="#ff2c7b"/><rect x="1247" y="174" fill="#ff2774"/><rect x="1255" y="174" fill="#ff216d"/><rect x="1263" y="174" fill="#ff1c67"/><rect x="1271" y="174" fill="#ff1862"/><rect x="1279" y="174" fill="#ff145d"/><rect x="1287" y="174" fill="#ff1058"/><rect x="1295" y="174" fill="#ff0d54"/><rect x="1303" y="174" fill="#ff0950"/><rect x="1311" y="174" fill="#ff074d"/><rect x="1319" y="174" fill="#ff0449"/><rect x="1327" y="174" fill="#ff0146"/><rect x="1335" y="174" fill="#990028"/><rect x="1343" y="174" fill="#990026"/><rect x="1351" y="174" fill="#990025"/><rect x="1359" y="174" fill="#990023"/><rect x="1367" y="174" fill="#990022"/><rect x="1375" y="174" fill="#990021"/><rect x="1383" y="174" fill="#99001f"/><rect x="1391" y="174" fill="#99001e"/><rect x="1399" y="174" fill="#99001d"/><rect x="1407" y="174" fill="#99001c"/><rect x="1415" y="174" fill="#99001b"/><rect x="1423" y="174" fill="#99001a"/><rect x="1431" y="174" fill="#990019"/><rect x="1439" y="174" fill="#990018"/><rect x="1447" y="174" fill="#990017"/><rect x="1455" y="174" fill="#990017"/><rect x="1463" y="174" fill="#990016"/><rect x="1471" y="174" fill="#990015"/><rect x="1479" y="174" fill="#990014"/><rect x="1487" y="174" fill="#990014"/><rect x="1495" y="174" fill="#990013"/><rect x="1503" y="174" fill="#990012"/><rect x="1511" y="174" fill="#990012"/><rect x="1519" y="174" fill="#990011"/><rect x="1527" y="174" fill="#990011"/><rect x="959" y="182" fill="#009899"/><rect x="967" y="182" fill="#009599"/><rect x="975" y="182" fill="#009399"/><rect x="983" y="182" fill="#009099"/><rect x="991" y="182" fill="#008e99"/><rect x="999" y="182" fill="#008c99"/><rect x="1007" y="182" fill="#008999"/><rect x="1015" y="182" fill="#008699"/><rect x="1023" y="182" fill="#008499"/><rect x="1031" y="182" fill="#008199"/><rect x="1039" y="182" fill="#007f99"/><rect x="1047" y="182" fill="#007c99"/><rect x="1055" y="182" fill="#007999"/><rect x="1063" y="182" fill="#007699"/><rect x="1071" y="182" fill="#007499"/><rect x="1079" y="182" fill="#007199"/><rect x="1087" y="182" fill="#006e99"/><rect x="1095" y="182" fill="#14b3ff"/><rect x="1103" y="182" fill="#2aaeff"/><rect x="1111" y="182" fill="#41a9ff"/><rect x="1119" y="182" fill="#57a4ff"/><rect x="1127" y="182" fill="#6e9eff"/><rect x="1135" y="182" fill="#8599ff"/><rect x="1143" y="182" fill="#9d94ff"/><rect x="1151" y="182" fill="#b58eff"/><rect x="1159" y="182" fill="#ce89ff"/><rect x="1167" y="182" fill="#e683ff"/><rect x="1175" y="182" fill="#ff7dfd"/><rect x="1183" y="182" fill="#ff6ce6"/><rect x="1191" y="182" fill="#ff5ed3"/><rect x="1199" y="182" fill="#ff52c2"/><rect x="1207" y="182" fill="#ff48b4"/><rect x="1215" y="182" fill="#ff3fa7"/><rect x="1223" y="182" fill="#ff379c"/><rect x="1231" y="182" fill="#ff2f92"/><rect x="1239" y="182" fill="#ff2989"/><rect x="1247" y="182" fill="#ff2381"/><rect x="1255" y="182" fill="#ff1e7a"/><rect x="1263" y="182" fill="#ff1973"/><rect x="1271" y="182" fill="#ff156d"/><rect x="1279" y="182" fill="#ff1168"/><rect x="1287" y="182" fill="#ff0d63"/><rect x="1295" y="182" fill="#ff0a5e"/><rect x="1303" y="182" fill="#ff075a"/><rect x="1311" y="182" fill="#ff0456"/><rect x="1319" y="182" fill="#ff0152"/><rect x="1327" y="182" fill="#99002f"/><rect x="1335" y="182" fill="#99002d"/><rect x="1343" y="182" fill="#99002b"/><rect x="1351" y="182" fill="#990029"/><rect x="1359" y="182" fill="#990028"/><rect x="1367" y="182" fill="#990026"/><rect x="1375" y="182" fill="#990025"/><rect x="1383" y="182" fill="#990023"/><rect x="1391" y="182" fill="#990022"/><rect x="1399" y="182" fill="#990021"/><rect x="1407" y="182" fill="#990020"/><rect x="1415" y="182" fill="#99001f"/><rect x="1423" y="182" fill="#99001d"/><rect x="1431" y="182" fill="#99001c"/><rect x="1439" y="182" fill="#99001b"/><rect x="1447" y="182" fill="#99001b"/><rect x="1455" y="182" fill="#99001a"/><rect x="1463" y="182" fill="#990019"/><rect x="1471" y="182" fill="#990018"/><rect x="1479" y="182" fill="#990017"/><rect x="1487" y="182" fill="#990017"/><rect x="1495" y="182" fill="#990016"/><rect x="1503" y="182" fill="#990015"/><rect x="1511" y="182" fill="#990014"/><rect x="1519" y="182" fill="#990014"/><rect x="967" y="190" fill="#008899"/><rect x="975" y="190" fill="#008699"/><rect x="983" y="190" fill="#008499"/><rect x="991" y="190" fill="#008199"/><rect x="999" y="190" fill="#007f99"/><rect x="1007" y="190" fill="#007c99"/><rect x="1015" y="190" fill="#007a99"/><rect x="1023" y="190" fill="#007899"/><rect x="1031" y="190" fill="#007599"/><rect x="1039" y="190" fill="#007299"/><rect x="1047" y="190" fill="#007099"/><rect x="1055" y="190" fill="#006d99"/><rect x="1063" y="190" fill="#006b99"/><rect x="1071" y="190" fill="#006899"/><rect x="1079" y="190" fill="#006599"/><rect x="1087" y="190" fill="#006299"/><rect x="1095" y="190" fill="#10a0ff"/><rect x="1103" y="190" fill="#249bff"/><rect x="1111" y="190" fill="#3896ff"/><rect x="1119" y="190" fill="#4d91ff"/><rect x="1127" y="190" fill="#628dff"/><rect x="1135" y="190" fill="#7888ff"/><rect x="1143" y="190" fill="#8e83ff"/><rect x="1151" y="190" fill="#a47dff"/><rect x="1159" y="190" fill="#ba78ff"/><rect x="1167" y="190" fill="#d173ff"/><rect x="1175" y="190" fill="#e86eff"/><rect x="1183" y="190" fill="#ff68fe"/><rect x="1191" y="190" fill="#ff5ae8"/><rect x="1199" y="190" fill="#ff4ed6"/><rect x="1207" y="190" fill="#ff44c6"/><rect x="1215" y="190" fill="#ff3bb8"/><rect x="1223" y="190" fill="#ff33ab"/><rect x="1231" y="190" fill="#ff2ca0"/><rect x="1239" y="190" fill="#ff2697"/><rect x="1247" y="190" fill="#ff208e"/><rect x="1255" y="190" fill="#ff1b86"/><rect x="1263" y="190" fill="#ff167f"/><rect x="1271" y="190" fill="#ff1278"/><rect x="1279" y="190" fill="#ff0e72"/><rect x="1287" y="190" fill="#ff0b6d"/><rect x="1295" y="190" fill="#ff0768"/><rect x="1303" y="190" fill="#ff0463"/><rect x="1311" y="190" fill="#ff015f"/><rect x="1319" y="190" fill="#990036"/><rect x="1327" y="190" fill="#990034"/><rect x="1335" y="190" fill="#990032"/><rect x="1343" y="190" fill="#990030"/><rect x="1351" y="190" fill="#99002e"/><rect x="1359" y="190" fill="#99002c"/><rect x="1367" y="190" fill="#99002a"/><rect x="1375" y="190" fill="#990029"/><rect x="1383" y="190" fill="#990027"/><rect x="1391" y="190" fill="#990026"/><rect x="1399" y="190" fill="#990025"/><rect x="1407" y="190" fill="#990023"/><rect x="1415" y="190" fill="#990022"/><rect x="1423" y="190" fill="#990021"/><rect x="1431" y="190" fill="#990020"/><rect x="1439" y="190" fill="#99001f"/><rect x="1447" y="190" fill="#99001e"/><rect x="1455" y="190" fill="#99001d"/><rect x="1463" y="190" fill="#99001c"/><rect x="1471" y="190" fill="#99001b"/><rect x="1479" y="190" fill="#99001a"/><rect x="1487" y="190" fill="#990019"/><rect x="1495" y="190" fill="#990019"/><rect x="1503" y="190" fill="#990018"/><rect x="1511" y="190" fill="#990017"/><rect x="967" y="198" fill="#007d99"/><rect x="975" y="198" fill="#007b99"/><rect x="983" y="198" fill="#007899"/><rect x="991" y="198" fill="#007699"/><rect x="999" y="198" fill="#007499"/><rect x="1007" y="198" fill="#007299"/><rect x="1015" y="198" fill="#006f99"/><rect x="1023" y="198" fill="#006d99"/><rect x="1031" y="198" fill="#006a99"/><rect x="1039" y="198" fill="#006899"/><rect x="1047" y="198" fill="#006599"/><rect x="1055" y="198" fill="#006399"/><rect x="1063" y="198" fill="#006099"/><rect x="1071" y="198" fill="#005e99"/><rect x="1079" y="198" fill="#005b99"/><rect x="1087" y="198" fill="#005999"/><rect x="1095" y="198" fill="#0b90ff"/><rect x="1103" y="198" fill="#1e8bff"/><rect x="1111" y="198" fill="#3187ff"/><rect x="1119" y="198" fill="#4582ff"/><rect x="1127" y="198" fill="#587dff"/><rect x="1135" y="198" fill="#6c79ff"/><rect x="1143" y="198" fill="#8074ff"/><rect x="1151" y="198" fill="#956fff"/><rect x="1159" y="198" fill="#aa6aff"/><rect x="1167" y="198" fill="#bf65ff"/><rect x="1175" y="198" fill="#d460ff"/><rect x="1183" y="198" fill="#e95bff"/><rect x="1191" y="198" fill="#ff55fe"/><rect x="1199" y="198" fill="#ff4aea"/><rect x="1207" y="198" fill="#ff40d8"/><rect x="1215" y="198" fill="#ff37c9"/><rect x="1223" y="198" fill="#ff2fbb"/><rect x="1231" y="198" fill="#ff28af"/><rect x="1239" y="198" fill="#ff22a5"/><rect x="1247" y="198" fill="#ff1c9b"/><rect x="1255" y="198" fill="#ff1893"/><rect x="1263" y="198" fill="#ff138b"/><rect x="1271" y="198" fill="#ff0f84"/><rect x="1279" y="198" fill="#ff0b7d"/><rect x="1287" y="198" fill="#ff0877"/><rect x="1295" y="198" fill="#ff0472"/><rect x="1303" y="198" fill="#ff026c"/><rect x="1311" y="198" fill="#99003e"/><rect x="1319" y="198" fill="#99003b"/><rect x="1327" y="198" fill="#990039"/><rect x="1335" y="198" fill="#990037"/><rect x="1343" y="198" fill="#990034"/><rect x="1351" y="198" fill="#990032"/><rect x="1359" y="198" fill="#990031"/><rect x="1367" y="198" fill="#99002f"/><rect x="1375" y="198" fill="#99002d"/><rect x="1383" y="198" fill="#99002b"/><rect x="1391" y="198" fill="#99002a"/><rect x="1399" y="198" fill="#990028"/><rect x="1407" y="198" fill="#990027"/><rect x="1415" y="198" fill="#990026"/><rect x="1423" y="198" fill="#990025"/><rect x="1431" y="198" fill="#990023"/><rect x="1439" y="198" fill="#990022"/><rect x="1447" y="198" fill="#990021"/><rect x="1455" y="198" fill="#990020"/><rect x="1463" y="198" fill="#99001f"/><rect x="1471" y="198" fill="#99001e"/><rect x="1479" y="198" fill="#99001d"/><rect x="1487" y="198" fill="#99001c"/><rect x="1495" y="198" fill="#99001c"/><rect x="1503" y="198" fill="#99001b"/><rect x="975" y="206" fill="#007199"/><rect x="983" y="206" fill="#006f99"/><rect x="991" y="206" fill="#006c99"/><rect x="999" y="206" fill="#006a99"/><rect x="1007" y="206" fill="#006899"/><rect x="1015" y="206" fill="#006699"/><rect x="1023" y="206" fill="#006399"/><rect x="1031" y="206" fill="#006199"/><rect x="1039" y="206" fill="#005f99"/><rect x="1047" y="206" fill="#005c99"/><rect x="1055" y="206" fill="#005a99"/><rect x="1063" y="206" fill="#005799"/><rect x="1071" y="206" fill="#005599"/><rect x="1079" y="206" fill="#005399"/><rect x="1087" y="206" fill="#005099"/><rect x="1095" y="206" fill="#0881ff"/><rect x="1103" y="206" fill="#197dff"/><rect x="1111" y="206" fill="#2b79ff"/><rect x="1119" y="206" fill="#3d74ff"/><rect x="1127" y="206" fill="#5070ff"/><rect x="1135" y="206" fill="#626bff"/><rect x="1143" y="206" fill="#7567ff"/><rect x="1151" y="206" fill="#8862ff"/><rect x="1159" y="206" fill="#9b5eff"/><rect x="1167" y="206" fill="#af59ff"/><rect x="1175" y="206" fill="#c254ff"/><rect x="1183" y="206" fill="#d64fff"/><rect x="1191" y="206" fill="#eb4aff"/><rect x="1199" y="206" fill="#ff45fe"/><rect x="1207" y="206" fill="#ff3beb"/><rect x="1215" y="206" fill="#ff33da"/><rect x="1223" y="206" fill="#ff2bcc"/><rect x="1231" y="206" fill="#ff24bf"/><rect x="1239" y="206" fill="#ff1eb3"/><rect x="1247" y="206" fill="#ff19a9"/><rect x="1255" y="206" fill="#ff149f"/><rect x="1263" y="206" fill="#ff1097"/><rect x="1271" y="206" fill="#ff0c8f"/><rect x="1279" y="206" fill="#ff0888"/><rect x="1287" y="206" fill="#ff0582"/><rect x="1295" y="206" fill="#ff027c"/><rect x="1303" y="206" fill="#990047"/><rect x="1311" y="206" fill="#990044"/><rect x="1319" y="206" fill="#990041"/><rect x="1327" y="206" fill="#99003e"/><rect x="1335" y="206" fill="#99003c"/><rect x="1343" y="206" fill="#990039"/><rect x="1351" y="206" fill="#990037"/><rect x="1359" y="206" fill="#990035"/><rect x="1367" y="206" fill="#990033"/><rect x="1375" y="206" fill="#990031"/><rect x="1383" y="206" fill="#990030"/><rect x="1391" y="206" fill="#99002e"/><rect x="1399" y="206" fill="#99002c"/><rect x="1407" y="206" fill="#99002b"/><rect x="1415" y="206" fill="#990029"/><rect x="1423" y="206" fill="#990028"/><rect x="1431" y="206" fill="#990027"/><rect x="1439" y="206" fill="#990026"/><rect x="1447" y="206" fill="#990024"/><rect x="1455" y="206" fill="#990023"/><rect x="1463" y="206" fill="#990022"/><rect x="1471" y="206" fill="#990021"/><rect x="1479" y="206" fill="#990020"/><rect x="1487" y="206" fill="#99001f"/><rect x="1495" y="206" fill="#99001f"/><rect x="975" y="214" fill="#006899"/><rect x="983" y="214" fill="#006699"/><rect x="991" y="214" fill="#006499"/><rect x="999" y="214" fill="#006299"/><rect x="1007" y="214" fill="#005f99"/><rect x="1015" y="214" fill="#005d99"/><rect x="1023" y="214" fill="#005b99"/><rect x="1031" y="214" fill="#005999"/><rect x="1039" y="214" fill="#005699"/><rect x="1047" y="214" fill="#005499"/><rect x="1055" y="214" fill="#005299"/><rect x="1063" y="214" fill="#005099"/><rect x="1071" y="214" fill="#004d99"/><rect x="1079" y="214" fill="#004b99"/><rect x="1087" y="214" fill="#004899"/><rect x="1095" y="214" fill="#0575ff"/><rect x="1103" y="214" fill="#1571ff"/><rect x="1111" y="214" fill="#266dff"/><rect x="1119" y="214" fill="#3769ff"/><rect x="1127" y="214" fill="#4864ff"/><rect x="1135" y="214" fill="#5960ff"/><rect x="1143" y="214" fill="#6b5cff"/><rect x="1151" y="214" fill="#7d57ff"/><rect x="1159" y="214" fill="#8f53ff"/><rect x="1167" y="214" fill="#a14eff"/><rect x="1175" y="214" fill="#b34aff"/><rect x="1183" y="214" fill="#c645ff"/><rect x="1191" y="214" fill="#d940ff"/><rect x="1199" y="214" fill="#ec3cff"/><rect x="1207" y="214" fill="#ff37fe"/><rect x="1215" y="214" fill="#ff2eec"/><rect x="1223" y="214" fill="#ff27dc"/><rect x="1231" y="214" fill="#ff21ce"/><rect x="1239" y="214" fill="#ff1bc2"/><rect x="1247" y="214" fill="#ff15b6"/><rect x="1255" y="214" fill="#ff11ac"/><rect x="1263" y="214" fill="#ff0da3"/><rect x="1271" y="214" fill="#ff099b"/><rect x="1279" y="214" fill="#ff0593"/><rect x="1287" y="214" fill="#ff028c"/><rect x="1295" y="214" fill="#990050"/><rect x="1303" y="214" fill="#99004d"/><rect x="1311" y="214" fill="#990049"/><rect x="1319" y="214" fill="#990046"/><rect x="1327" y="214" fill="#990043"/><rect x="1335" y="214" fill="#990041"/><rect x="1343" y="214" fill="#99003e"/><rect x="1351" y="214" fill="#99003c"/><rect x="1359" y="214" fill="#99003a"/><rect x="1367" y="214" fill="#990037"/><rect x="1375" y="214" fill="#990036"/><rect x="1383" y="214" fill="#990034"/><rect x="1391" y="214" fill="#990032"/><rect x="1399" y="214" fill="#990030"/><rect x="1407" y="214" fill="#99002f"/><rect x="1415" y="214" fill="#99002d"/><rect x="1423" y="214" fill="#99002c"/><rect x="1431" y="214" fill="#99002a"/><rect x="1439" y="214" fill="#990029"/><rect x="1447" y="214" fill="#990028"/><rect x="1455" y="214" fill="#990027"/><rect x="1463" y="214" fill="#990026"/><rect x="1471" y="214" fill="#990024"/><rect x="1479" y="214" fill="#990023"/><rect x="1487" y="214" fill="#990022"/><rect x="975" y="222" fill="#006099"/><rect x="983" y="222" fill="#005e99"/><rect x="991" y="222" fill="#005c99"/><rect x="999" y="222" fill="#005a99"/><rect x="1007" y="222" fill="#005899"/><rect x="1015" y="222" fill="#005699"/><rect x="1023" y="222" fill="#005399"/><rect x="1031" y="222" fill="#005199"/><rect x="1039" y="222" fill="#004f99"/><rect x="1047" y="222" fill="#004d99"/><rect x="1055" y="222" fill="#004b99"/><rect x="1063" y="222" fill="#004999"/><rect x="1071" y="222" fill="#004699"/><rect x="1079" y="222" fill="#004499"/><rect x="1087" y="222" fill="#004299"/><rect x="1095" y="222" fill="#026aff"/><rect x="1103" y="222" fill="#1166ff"/><rect x="1111" y="222" fill="#2162ff"/><rect x="1119" y="222" fill="#315eff"/><rect x="1127" y="222" fill="#415aff"/><rect x="1135" y="222" fill="#5256ff"/><rect x="1143" y="222" fill="#6252ff"/><rect x="1151" y="222" fill="#734dff"/><rect x="1159" y="222" fill="#8349ff"/><rect x="1167" y="222" fill="#9545ff"/><rect x="1175" y="222" fill="#a641ff"/><rect x="1183" y="222" fill="#b73cff"/><rect x="1191" y="222" fill="#c938ff"/><rect x="1199" y="222" fill="#da33ff"/><rect x="1207" y="222" fill="#ec2fff"/><rect x="1215" y="222" fill="#ff2afe"/><rect x="1223" y="222" fill="#ff23ed"/><rect x="1231" y="222" fill="#ff1dde"/><rect x="1239" y="222" fill="#ff17d1"/><rect x="1247" y="222" fill="#ff12c4"/><rect x="1255" y="222" fill="#ff0dba"/><rect x="1263" y="222" fill="#ff09b0"/><rect x="1271" y="222" fill="#ff05a7"/><rect x="1279" y="222" fill="#ff029f"/><rect x="1287" y="222" fill="#99005a"/><rect x="1295" y="222" fill="#990056"/><rect x="1303" y="222" fill="#990052"/><rect x="1311" y="222" fill="#99004f"/><rect x="1319" y="222" fill="#99004c"/><rect x="1327" y="222" fill="#990049"/><rect x="1335" y="222" fill="#990046"/><rect x="1343" y="222" fill="#990043"/><rect x="1351" y="222" fill="#990041"/><rect x="1359" y="222" fill="#99003e"/><rect x="1367" y="222" fill="#99003c"/><rect x="1375" y="222" fill="#99003a"/><rect x="1383" y="222" fill="#990038"/><rect x="1391" y="222" fill="#990036"/><rect x="1399" y="222" fill="#990034"/><rect x="1407" y="222" fill="#990033"/><rect x="1415" y="222" fill="#990031"/><rect x="1423" y="222" fill="#99002f"/><rect x="1431" y="222" fill="#99002e"/><rect x="1439" y="222" fill="#99002d"/><rect x="1447" y="222" fill="#99002b"/><rect x="1455" y="222" fill="#99002a"/><rect x="1463" y="222" fill="#990029"/><rect x="1471" y="222" fill="#990028"/><rect x="1479" y="222" fill="#990026"/><rect x="983" y="230" fill="#005799"/><rect x="991" y="230" fill="#005599"/><rect x="999" y="230" fill="#005399"/><rect x="1007" y="230" fill="#005199"/><rect x="1015" y="230" fill="#004f99"/><rect x="1023" y="230" fill="#004d99"/><rect x="1031" y="230" fill="#004b99"/><rect x="1039" y="230" fill="#004999"/><rect x="1047" y="230" fill="#004799"/><rect x="1055" y="230" fill="#004499"/><rect x="1063" y="230" fill="#004299"/><rect x="1071" y="230" fill="#004099"/><rect x="1079" y="230" fill="#003e99"/><rect x="1087" y="230" fill="#003c99"/><rect x="1095" y="230" fill="#003999"/><rect x="1103" y="230" fill="#0e5cff"/><rect x="1111" y="230" fill="#1d58ff"/><rect x="1119" y="230" fill="#2c55ff"/><rect x="1127" y="230" fill="#3b51ff"/><rect x="1135" y="230" fill="#4b4dff"/><rect x="1143" y="230" fill="#5a49ff"/><rect x="1151" y="230" fill="#6a45ff"/><rect x="1159" y="230" fill="#7a41ff"/><rect x="1167" y="230" fill="#8a3dff"/><rect x="1175" y="230" fill="#9a39ff"/><rect x="1183" y="230" fill="#aa34ff"/><rect x="1191" y="230" fill="#bb30ff"/><rect x="1199" y="230" fill="#cb2cff"/><rect x="1207" y="230" fill="#dc28ff"/><rect x="1215" y="230" fill="#ed23ff"/><rect x="1223" y="230" fill="#ff1ffe"/><rect x="1231" y="230" fill="#ff19ee"/><rect x="1239" y="230" fill="#ff13e0"/><rect x="1247" y="230" fill="#ff0ed3"/><rect x="1255" y="230" fill="#ff0ac7"/><rect x="1263" y="230" fill="#ff06bc"/><rect x="1271" y="230" fill="#ff02b3"/><rect x="1279" y="230" fill="#990066"/><rect x="1287" y="230" fill="#990061"/><rect x="1295" y="230" fill="#99005d"/><rect x="1303" y="230" fill="#990058"/><rect x="1311" y="230" fill="#990055"/><rect x="1319" y="230" fill="#990051"/><rect x="1327" y="230" fill="#99004e"/><rect x="1335" y="230" fill="#99004b"/><rect x="1343" y="230" fill="#990048"/><rect x="1351" y="230" fill="#990045"/><rect x="1359" y="230" fill="#990043"/><rect x="1367" y="230" fill="#990040"/><rect x="1375" y="230" fill="#99003e"/><rect x="1383" y="230" fill="#99003c"/><rect x="1391" y="230" fill="#99003a"/><rect x="1399" y="230" fill="#990038"/><rect x="1407" y="230" fill="#990036"/><rect x="1415" y="230" fill="#990035"/><rect x="1423" y="230" fill="#990033"/><rect x="1431" y="230" fill="#990032"/><rect x="1439" y="230" fill="#990030"/><rect x="1447" y="230" fill="#99002f"/><rect x="1455" y="230" fill="#99002d"/><rect x="1463" y="230" fill="#99002c"/><rect x="1471" y="230" fill="#99002b"/><rect x="1479" y="230" fill="#99002a"/><rect x="983" y="238" fill="#005099"/><rect x="991" y="238" fill="#004f99"/><rect x="999" y="238" fill="#004d99"/><rect x="1007" y="238" fill="#004b99"/><rect x="1015" y="238" fill="#004999"/><rect x="1023" y="238" fill="#004799"/><rect x="1031" y="238" fill="#004599"/><rect x="1039" y="238" fill="#004399"/><rect x="1047" y="238" fill="#004199"/><rect x="1055" y="238" fill="#003f99"/><rect x="1063" y="238" fill="#003d99"/><rect x="1071" y="238" fill="#003a99"/><rect x="1079" y="238" fill="#003899"/><rect x="1087" y="238" fill="#003699"/><rect x="1095" y="238" fill="#003499"/><rect x="1103" y="238" fill="#0b54ff"/><rect x="1111" y="238" fill="#1950ff"/><rect x="1119" y="238" fill="#274cff"/><rect x="1127" y="238" fill="#3648ff"/><rect x="1135" y="238" fill="#4445ff"/><rect x="1143" y="238" fill="#5341ff"/><rect x="1151" y="238" fill="#623dff"/><rect x="1159" y="238" fill="#7139ff"/><rect x="1167" y="238" fill="#8035ff"/><rect x="1175" y="238" fill="#8f31ff"/><rect x="1183" y="238" fill="#9f2dff"/><rect x="1191" y="238" fill="#ae29ff"/><rect x="1199" y="238" fill="#be25ff"/><rect x="1207" y="238" fill="#ce21ff"/><rect x="1215" y="238" fill="#de1dff"/><rect x="1223" y="238" fill="#ee19ff"/><rect x="1231" y="238" fill="#fe15ff"/><rect x="1239" y="238" fill="#ff0fef"/><rect x="1247" y="238" fill="#ff0be1"/><rect x="1255" y="238" fill="#ff06d5"/><rect x="1263" y="238" fill="#ff02c9"/><rect x="1271" y="238" fill="#990072"/><rect x="1279" y="238" fill="#99006d"/><rect x="1287" y="238" fill="#990068"/><rect x="1295" y="238" fill="#990063"/><rect x="1303" y="238" fill="#99005f"/><rect x="1311" y="238" fill="#99005b"/><rect x="1319" y="238" fill="#990057"/><rect x="1327" y="238" fill="#990053"/><rect x="1335" y="238" fill="#990050"/><rect x="1343" y="238" fill="#99004d"/><rect x="1351" y="238" fill="#99004a"/><rect x="1359" y="238" fill="#990047"/><rect x="1367" y="238" fill="#990045"/><rect x="1375" y="238" fill="#990043"/><rect x="1383" y="238" fill="#990040"/><rect x="1391" y="238" fill="#99003e"/><rect x="1399" y="238" fill="#99003c"/><rect x="1407" y="238" fill="#99003a"/><rect x="1415" y="238" fill="#990038"/><rect x="1423" y="238" fill="#990037"/><rect x="1431" y="238" fill="#990035"/><rect x="1439" y="238" fill="#990034"/><rect x="1447" y="238" fill="#990032"/><rect x="1455" y="238" fill="#990031"/><rect x="1463" y="238" fill="#99002f"/><rect x="1471" y="238" fill="#99002e"/><rect x="991" y="246" fill="#004999"/><rect x="999" y="246" fill="#004799"/><rect x="1007" y="246" fill="#004599"/><rect x="1015" y="246" fill="#004399"/><rect x="1023" y="246" fill="#004199"/><rect x="1031" y="246" fill="#003f99"/><rect x="1039" y="246" fill="#003d99"/><rect x="1047" y="246" fill="#003b99"/><rect x="1055" y="246" fill="#003999"/><rect x="1063" y="246" fill="#003799"/><rect x="1071" y="246" fill="#003599"/><rect x="1079" y="246" fill="#003399"/><rect x="1087" y="246" fill="#003199"/><rect x="1095" y="246" fill="#002f99"/><rect x="1103" y="246" fill="#084cff"/><rect x="1111" y="246" fill="#1648ff"/><rect x="1119" y="246" fill="#2345ff"/><rect x="1127" y="246" fill="#3141ff"/><rect x="1135" y="246" fill="#3f3dff"/><rect x="1143" y="246" fill="#4d3aff"/><rect x="1151" y="246" fill="#5b36ff"/><rect x="1159" y="246" fill="#6932ff"/><rect x="1167" y="246" fill="#772fff"/><rect x="1175" y="246" fill="#862bff"/><rect x="1183" y="246" fill="#9427ff"/><rect x="1191" y="246" fill="#a323ff"/><rect x="1199" y="246" fill="#b21fff"/><rect x="1207" y="246" fill="#c11bff"/><rect x="1215" y="246" fill="#d017ff"/><rect x="1223" y="246" fill="#df13ff"/><rect x="1231" y="246" fill="#ef0fff"/><rect x="1239" y="246" fill="#fe0bff"/><rect x="1247" y="246" fill="#ff07f0"/><rect x="1255" y="246" fill="#ff03e2"/><rect x="1263" y="246" fill="#990080"/><rect x="1271" y="246" fill="#99007a"/><rect x="1279" y="246" fill="#990074"/><rect x="1287" y="246" fill="#99006e"/><rect x="1295" y="246" fill="#990069"/><rect x="1303" y="246" fill="#990065"/><rect x="1311" y="246" fill="#990060"/><rect x="1319" y="246" fill="#99005c"/><rect x="1327" y="246" fill="#990059"/><rect x="1335" y="246" fill="#990055"/><rect x="1343" y="246" fill="#990052"/><rect x="1351" y="246" fill="#99004f"/><rect x="1359" y="246" fill="#99004c"/><rect x="1367" y="246" fill="#99004a"/><rect x="1375" y="246" fill="#990047"/><rect x="1383" y="246" fill="#990045"/><rect x="1391" y="246" fill="#990042"/><rect x="1399" y="246" fill="#990040"/><rect x="1407" y="246" fill="#99003e"/><rect x="1415" y="246" fill="#99003c"/><rect x="1423" y="246" fill="#99003a"/><rect x="1431" y="246" fill="#990039"/><rect x="1439" y="246" fill="#990037"/><rect x="1447" y="246" fill="#990036"/><rect x="1455" y="246" fill="#990034"/><rect x="1463" y="246" fill="#990033"/><rect x="991" y="254" fill="#004499"/><rect x="999" y="254" fill="#004299"/><rect x="1007" y="254" fill="#004099"/><rect x="1015" y="254" fill="#003e99"/><rect x="1023" y="254" fill="#003c99"/><rect x="1031" y="254" fill="#003a99"/><rect x="1039" y="254" fill="#003999"/><rect x="1047" y="254" fill="#003799"/><rect x="1055" y="254" fill="#003599"/><rect x="1063" y="254" fill="#003399"/><rect x="1071" y="254" fill="#003199"/><rect x="1079" y="254" fill="#002f99"/><rect x="1087" y="254" fill="#002d99"/><rect x="1095" y="254" fill="#002b99"/><rect x="1103" y="254" fill="#0645ff"/><rect x="1111" y="254" fill="#1341ff"/><rect x="1119" y="254" fill="#203eff"/><rect x="1127" y="254" fill="#2d3aff"/><rect x="1135" y="254" fill="#3a37ff"/><rect x="1143" y="254" fill="#4733ff"/><rect x="1151" y="254" fill="#5430ff"/><rect x="1159" y="254" fill="#622cff"/><rect x="1167" y="254" fill="#6f29ff"/><rect x="1175" y="254" fill="#7d25ff"/><rect x="1183" y="254" fill="#8b21ff"/><rect x="1191" y="254" fill="#991eff"/><rect x="1199" y="254" fill="#a71aff"/><rect x="1207" y="254" fill="#b516ff"/><rect x="1215" y="254" fill="#c312ff"/><rect x="1223" y="254" fill="#d20fff"/><rect x="1231" y="254" fill="#e10bff"/><rect x="1239" y="254" fill="#ef07ff"/><rect x="1247" y="254" fill="#fe03ff"/><rect x="1255" y="254" fill="#990090"/><rect x="1263" y="254" fill="#990088"/><rect x="1271" y="254" fill="#990081"/><rect x="1279" y="254" fill="#99007b"/><rect x="1287" y="254" fill="#990075"/><rect x="1295" y="254" fill="#990070"/><rect x="1303" y="254" fill="#99006b"/><rect x="1311" y="254" fill="#990066"/><rect x="1319" y="254" fill="#990062"/><rect x="1327" y="254" fill="#99005e"/><rect x="1335" y="254" fill="#99005b"/><rect x="1343" y="254" fill="#990057"/><rect x="1351" y="254" fill="#990054"/><rect x="1359" y="254" fill="#990051"/><rect x="1367" y="254" fill="#99004e"/><rect x="1375" y="254" fill="#99004b"/><rect x="1383" y="254" fill="#990049"/><rect x="1391" y="254" fill="#990047"/><rect x="1399" y="254" fill="#990044"/><rect x="1407" y="254" fill="#990042"/><rect x="1415" y="254" fill="#990040"/><rect x="1423" y="254" fill="#99003e"/><rect x="1431" y="254" fill="#99003c"/><rect x="1439" y="254" fill="#99003b"/><rect x="1447" y="254" fill="#990039"/><rect x="1455" y="254" fill="#990037"/><rect x="999" y="262" fill="#003d99"/><rect x="1007" y="262" fill="#003b99"/><rect x="1015" y="262" fill="#003999"/><rect x="1023" y="262" fill="#003899"/><rect x="1031" y="262" fill="#003699"/><rect x="1039" y="262" fill="#003499"/><rect x="1047" y="262" fill="#003299"/><rect x="1055" y="262" fill="#003099"/><rect x="1063" y="262" fill="#002f99"/><rect x="1071" y="262" fill="#002d99"/><rect x="1079" y="262" fill="#002b99"/><rect x="1087" y="262" fill="#002999"/><rect x="1095" y="262" fill="#002799"/><rect x="1103" y="262" fill="#043eff"/><rect x="1111" y="262" fill="#103bff"/><rect x="1119" y="262" fill="#1c38ff"/><rect x="1127" y="262" fill="#2934ff"/><rect x="1135" y="262" fill="#3531ff"/><rect x="1143" y="262" fill="#422eff"/><rect x="1151" y="262" fill="#4e2aff"/><rect x="1159" y="262" fill="#5b27ff"/><rect x="1167" y="262" fill="#6823ff"/><rect x="1175" y="262" fill="#7520ff"/><rect x="1183" y="262" fill="#821cff"/><rect x="1191" y="262" fill="#9019ff"/><rect x="1199" y="262" fill="#9d15ff"/><rect x="1207" y="262" fill="#ab12ff"/><rect x="1215" y="262" fill="#b80eff"/><rect x="1223" y="262" fill="#c60aff"/><rect x="1231" y="262" fill="#d407ff"/><rect x="1239" y="262" fill="#e203ff"/><rect x="1247" y="262" fill="#900099"/><rect x="1255" y="262" fill="#980099"/><rect x="1263" y="262" fill="#990091"/><rect x="1271" y="262" fill="#990089"/><rect x="1279" y="262" fill="#990082"/><rect x="1287" y="262" fill="#99007c"/><rect x="1295" y="262" fill="#990077"/><rect x="1303" y="262" fill="#990071"/><rect x="1311" y="262" fill="#99006c"/><rect x="1319" y="262" fill="#990068"/><rect x="1327" y="262" fill="#990064"/><rect x="1335" y="262" fill="#990060"/><rect x="1343" y="262" fill="#99005c"/><rect x="1351" y="262" fill="#990059"/><rect x="1359" y="262" fill="#990056"/><rect x="1367" y="262" fill="#990053"/><rect x="1375" y="262" fill="#990050"/><rect x="1383" y="262" fill="#99004d"/><rect x="1391" y="262" fill="#99004b"/><rect x="1399" y="262" fill="#990048"/><rect x="1407" y="262" fill="#990046"/><rect x="1415" y="262" fill="#990044"/><rect x="1423" y="262" fill="#990042"/><rect x="1431" y="262" fill="#990040"/><rect x="1439" y="262" fill="#99003e"/><rect x="1447" y="262" fill="#99003c"/><rect x="999" y="270" fill="#003999"/><rect x="1007" y="270" fill="#003799"/><rect x="1015" y="270" fill="#003599"/><rect x="1023" y="270" fill="#003499"/><rect x="1031" y="270" fill="#003299"/><rect x="1039" y="270" fill="#003099"/><rect x="1047" y="270" fill="#002e99"/><rect x="1055" y="270" fill="#002c99"/><rect x="1063" y="270" fill="#002b99"/><rect x="1071" y="270" fill="#002999"/><rect x="1079" y="270" fill="#002799"/><rect x="1087" y="270" fill="#002599"/><rect x="1095" y="270" fill="#002399"/><rect x="1103" y="270" fill="#0238ff"/><rect x="1111" y="270" fill="#0d35ff"/><rect x="1119" y="270" fill="#1932ff"/><rect x="1127" y="270" fill="#252fff"/><rect x="1135" y="270" fill="#312bff"/><rect x="1143" y="270" fill="#3d28ff"/><rect x="1151" y="270" fill="#4925ff"/><rect x="1159" y="270" fill="#5522ff"/><rect x="1167" y="270" fill="#621eff"/><rect x="1175" y="270" fill="#6e1bff"/><rect x="1183" y="270" fill="#7b18ff"/><rect x="1191" y="270" fill="#8714ff"/><rect x="1199" y="270" fill="#9411ff"/><rect x="1207" y="270" fill="#a10dff"/><rect x="1215" y="270" fill="#ae0aff"/><rect x="1223" y="270" fill="#bb06ff"/><rect x="1231" y="270" fill="#c803ff"/><rect x="1239" y="270" fill="#800099"/><rect x="1247" y="270" fill="#880099"/><rect x="1255" y="270" fill="#900099"/><rect x="1263" y="270" fill="#980099"/><rect x="1271" y="270" fill="#990091"/><rect x="1279" y="270" fill="#99008a"/><rect x="1287" y="270" fill="#990083"/><rect x="1295" y="270" fill="#99007d"/><rect x="1303" y="270" fill="#990078"/><rect x="1311" y="270" fill="#990073"/><rect x="1319" y="270" fill="#99006e"/><rect x="1327" y="270" fill="#990069"/><rect x="1335" y="270" fill="#990065"/><rect x="1343" y="270" fill="#990062"/><rect x="1351" y="270" fill="#99005e"/><rect x="1359" y="270" fill="#99005b"/><rect x="1367" y="270" fill="#990057"/><rect x="1375" y="270" fill="#990055"/><rect x="1383" y="270" fill="#990052"/><rect x="1391" y="270" fill="#99004f"/><rect x="1399" y="270" fill="#99004d"/><rect x="1407" y="270" fill="#99004a"/><rect x="1415" y="270" fill="#990048"/><rect x="1423" y="270" fill="#990046"/><rect x="1431" y="270" fill="#990044"/><rect x="1439" y="270" fill="#990042"/><rect x="1007" y="278" fill="#003399"/><rect x="1015" y="278" fill="#003199"/><rect x="1023" y="278" fill="#003099"/><rect x="1031" y="278" fill="#002e99"/><rect x="1039" y="278" fill="#002c99"/><rect x="1047" y="278" fill="#002b99"/><rect x="1055" y="278" fill="#002999"/><rect x="1063" y="278" fill="#002799"/><rect x="1071" y="278" fill="#002599"/><rect x="1079" y="278" fill="#002499"/><rect x="1087" y="278" fill="#002299"/><rect x="1095" y="278" fill="#002099"/><rect x="1103" y="278" fill="#0033ff"/><rect x="1111" y="278" fill="#0b30ff"/><rect x="1119" y="278" fill="#162dff"/><rect x="1127" y="278" fill="#2129ff"/><rect x="1135" y="278" fill="#2d26ff"/><rect x="1143" y="278" fill="#3823ff"/><rect x="1151" y="278" fill="#4420ff"/><rect x="1159" y="278" fill="#501dff"/><rect x="1167" y="278" fill="#5c1aff"/><rect x="1175" y="278" fill="#6817ff"/><rect x="1183" y="278" fill="#7413ff"/><rect x="1191" y="278" fill="#8010ff"/><rect x="1199" y="278" fill="#8c0dff"/><rect x="1207" y="278" fill="#9809ff"/><rect x="1215" y="278" fill="#a406ff"/><rect x="1223" y="278" fill="#b103ff"/><rect x="1231" y="278" fill="#720099"/><rect x="1239" y="278" fill="#790099"/><rect x="1247" y="278" fill="#810099"/><rect x="1255" y="278" fill="#890099"/><rect x="1263" y="278" fill="#900099"/><rect x="1271" y="278" fill="#980099"/><rect x="1279" y="278" fill="#990091"/><rect x="1287" y="278" fill="#99008a"/><rect x="1295" y="278" fill="#990084"/><rect x="1303" y="278" fill="#99007e"/><rect x="1311" y="278" fill="#990079"/><rect x="1319" y="278" fill="#990074"/><rect x="1327" y="278" fill="#99006f"/><rect x="1335" y="278" fill="#99006b"/><rect x="1343" y="278" fill="#990067"/><rect x="1351" y="278" fill="#990063"/><rect x="1359" y="278" fill="#990060"/><rect x="1367" y="278" fill="#99005c"/><rect x="1375" y="278" fill="#990059"/><rect x="1383" y="278" fill="#990056"/><rect x="1391" y="278" fill="#990053"/><rect x="1399" y="278" fill="#990051"/><rect x="1407" y="278" fill="#99004e"/><rect x="1415" y="278" fill="#99004c"/><rect x="1423" y="278" fill="#99004a"/><rect x="1431" y="278" fill="#990048"/><rect x="1007" y="286" fill="#002f99"/><rect x="1015" y="286" fill="#002e99"/><rect x="1023" y="286" fill="#002c99"/><rect x="1031" y="286" fill="#002a99"/><rect x="1039" y="286" fill="#002999"/><rect x="1047" y="286" fill="#002799"/><rect x="1055" y="286" fill="#002599"/><rect x="1063" y="286" fill="#002499"/><rect x="1071" y="286" fill="#002299"/><rect x="1079" y="286" fill="#002099"/><rect x="1087" y="286" fill="#001f99"/><rect x="1095" y="286" fill="#001d99"/><rect x="1103" y="286" fill="#001b99"/><rect x="1111" y="286" fill="#092bff"/><rect x="1119" y="286" fill="#1328ff"/><rect x="1127" y="286" fill="#1e25ff"/><rect x="1135" y="286" fill="#2922ff"/><rect x="1143" y="286" fill="#341fff"/><rect x="1151" y="286" fill="#401cff"/><rect x="1159" y="286" fill="#4b19ff"/><rect x="1167" y="286" fill="#5616ff"/><rect x="1175" y="286" fill="#6212ff"/><rect x="1183" y="286" fill="#6d0fff"/><rect x="1191" y="286" fill="#790cff"/><rect x="1199" y="286" fill="#8409ff"/><rect x="1207" y="286" fill="#9006ff"/><rect x="1215" y="286" fill="#9c03ff"/><rect x="1223" y="286" fill="#640099"/><rect x="1231" y="286" fill="#6c0099"/><rect x="1239" y="286" fill="#730099"/><rect x="1247" y="286" fill="#7a0099"/><rect x="1255" y="286" fill="#820099"/><rect x="1263" y="286" fill="#890099"/><rect x="1271" y="286" fill="#910099"/><rect x="1279" y="286" fill="#980099"/><rect x="1287" y="286" fill="#990092"/><rect x="1295" y="286" fill="#99008b"/><rect x="1303" y="286" fill="#990085"/><rect x="1311" y="286" fill="#99007f"/><rect x="1319" y="286" fill="#99007a"/><rect x="1327" y="286" fill="#990075"/><rect x="1335" y="286" fill="#990070"/><rect x="1343" y="286" fill="#99006c"/><rect x="1351" y="286" fill="#990068"/><rect x="1359" y="286" fill="#990065"/><rect x="1367" y="286" fill="#990061"/><rect x="1375" y="286" fill="#99005e"/><rect x="1383" y="286" fill="#99005b"/><rect x="1391" y="286" fill="#990058"/><rect x="1399" y="286" fill="#990055"/><rect x="1407" y="286" fill="#990052"/><rect x="1415" y="286" fill="#990050"/><rect x="1423" y="286" fill="#99004e"/><rect x="1015" y="294" fill="#002a99"/><rect x="1023" y="294" fill="#002999"/><rect x="1031" y="294" fill="#002799"/><rect x="1039" y="294" fill="#002699"/><rect x="1047" y="294" fill="#002499"/><rect x="1055" y="294" fill="#002299"/><rect x="1063" y="294" fill="#002199"/><rect x="1071" y="294" fill="#001f99"/><rect x="1079" y="294" fill="#001d99"/><rect x="1087" y="294" fill="#001c99"/><rect x="1095" y="294" fill="#001a99"/><rect x="1103" y="294" fill="#001899"/><rect x="1111" y="294" fill="#0726ff"/><rect x="1119" y="294" fill="#1123ff"/><rect x="1127" y="294" fill="#1c20ff"/><rect x="1135" y="294" fill="#261dff"/><rect x="1143" y="294" fill="#311bff"/><rect x="1151" y="294" fill="#3b18ff"/><rect x="1159" y="294" fill="#4615ff"/><rect x="1167" y="294" fill="#5112ff"/><rect x="1175" y="294" fill="#5c0fff"/><rect x="1183" y="294" fill="#670cff"/><rect x="1191" y="294" fill="#7209ff"/><rect x="1199" y="294" fill="#7d06ff"/><rect x="1207" y="294" fill="#8902ff"/><rect x="1215" y="294" fill="#590099"/><rect x="1223" y="294" fill="#5f0099"/><rect x="1231" y="294" fill="#660099"/><rect x="1239" y="294" fill="#6d0099"/><rect x="1247" y="294" fill="#740099"/><rect x="1255" y="294" fill="#7b0099"/><rect x="1263" y="294" fill="#820099"/><rect x="1271" y="294" fill="#8a0099"/><rect x="1279" y="294" fill="#910099"/><rect x="1287" y="294" fill="#980099"/><rect x="1295" y="294" fill="#990092"/><rect x="1303" y="294" fill="#99008b"/><rect x="1311" y="294" fill="#990085"/><rect x="1319" y="294" fill="#990080"/><rect x="1327" y="294" fill="#99007b"/><rect x="1335" y="294" fill="#990076"/><rect x="1343" y="294" fill="#990072"/><rect x="1351" y="294" fill="#99006d"/><rect x="1359" y="294" fill="#99006a"/><rect x="1367" y="294" fill="#990066"/><rect x="1375" y="294" fill="#990062"/><rect x="1383" y="294" fill="#99005f"/><rect x="1391" y="294" fill="#99005c"/><rect x="1399" y="294" fill="#990059"/><rect x="1407" y="294" fill="#990057"/><rect x="1415" y="294" fill="#990054"/><rect x="1023" y="302" fill="#002699"/><rect x="1031" y="302" fill="#002499"/><rect x="1039" y="302" fill="#002399"/><rect x="1047" y="302" fill="#002199"/><rect x="1055" y="302" fill="#001f99"/><rect x="1063" y="302" fill="#001e99"/><rect x="1071" y="302" fill="#001c99"/><rect x="1079" y="302" fill="#001b99"/><rect x="1087" y="302" fill="#001999"/><rect x="1095" y="302" fill="#001799"/><rect x="1103" y="302" fill="#001699"/><rect x="1111" y="302" fill="#0522ff"/><rect x="1119" y="302" fill="#0f1fff"/><rect x="1127" y="302" fill="#191cff"/><rect x="1135" y="302" fill="#231aff"/><rect x="1143" y="302" fill="#2d17ff"/><rect x="1151" y="302" fill="#3814ff"/><rect x="1159" y="302" fill="#4211ff"/><rect x="1167" y="302" fill="#4c0eff"/><rect x="1175" y="302" fill="#570bff"/><rect x="1183" y="302" fill="#6108ff"/><rect x="1191" y="302" fill="#6c05ff"/><rect x="1199" y="302" fill="#7702ff"/><rect x="1207" y="302" fill="#4e0099"/><rect x="1215" y="302" fill="#540099"/><rect x="1223" y="302" fill="#5b0099"/><rect x="1231" y="302" fill="#610099"/><rect x="1239" y="302" fill="#680099"/><rect x="1247" y="302" fill="#6f0099"/><rect x="1255" y="302" fill="#750099"/><rect x="1263" y="302" fill="#7c0099"/><rect x="1271" y="302" fill="#830099"/><rect x="1279" y="302" fill="#8a0099"/><rect x="1287" y="302" fill="#910099"/><rect x="1295" y="302" fill="#980099"/><rect x="1303" y="302" fill="#990092"/><rect x="1311" y="302" fill="#99008c"/><rect x="1319" y="302" fill="#990086"/><rect x="1327" y="302" fill="#990081"/><rect x="1335" y="302" fill="#99007c"/><rect x="1343" y="302" fill="#990077"/><rect x="1351" y="302" fill="#990073"/><rect x="1359" y="302" fill="#99006f"/><rect x="1367" y="302" fill="#99006b"/><rect x="1375" y="302" fill="#990067"/><rect x="1383" y="302" fill="#990064"/><rect x="1391" y="302" fill="#990061"/><rect x="1399" y="302" fill="#99005e"/><rect x="1407" y="302" fill="#99005b"/><rect x="1023" y="310" fill="#002399"/><rect x="1031" y="310" fill="#002199"/><rect x="1039" y="310" fill="#002099"/><rect x="1047" y="310" fill="#001e99"/><rect x="1055" y="310" fill="#001d99"/><rect x="1063" y="310" fill="#001b99"/><rect x="1071" y="310" fill="#001a99"/><rect x="1079" y="310" fill="#001899"/><rect x="1087" y="310" fill="#001799"/><rect x="1095" y="310" fill="#001599"/><rect x="1103" y="310" fill="#001399"/><rect x="1111" y="310" fill="#031eff"/><rect x="1119" y="310" fill="#0d1bff"/><rect x="1127" y="310" fill="#1619ff"/><rect x="1135" y="310" fill="#2016ff"/><rect x="1143" y="310" fill="#2a13ff"/><rect x="1151" y="310" fill="#3410ff"/><rect x="1159" y="310" fill="#3e0eff"/><rect x="1167" y="310" fill="#480bff"/><rect x="1175" y="310" fill="#5208ff"/><rect x="1183" y="310" fill="#5c05ff"/><rect x="1191" y="310" fill="#6702ff"/><rect x="1199" y="310" fill="#440099"/><rect x="1207" y="310" fill="#4a0099"/><rect x="1215" y="310" fill="#500099"/><rect x="1223" y="310" fill="#560099"/><rect x="1231" y="310" fill="#5d0099"/><rect x="1239" y="310" fill="#630099"/><rect x="1247" y="310" fill="#6a0099"/><rect x="1255" y="310" fill="#700099"/><rect x="1263" y="310" fill="#770099"/><rect x="1271" y="310" fill="#7d0099"/><rect x="1279" y="310" fill="#840099"/><rect x="1287" y="310" fill="#8b0099"/><rect x="1295" y="310" fill="#910099"/><rect x="1303" y="310" fill="#980099"/><rect x="1311" y="310" fill="#990092"/><rect x="1319" y="310" fill="#99008c"/><rect x="1327" y="310" fill="#990087"/><rect x="1335" y="310" fill="#990081"/><rect x="1343" y="310" fill="#99007d"/><rect x="1351" y="310" fill="#990078"/><rect x="1359" y="310" fill="#990074"/><rect x="1367" y="310" fill="#990070"/><rect x="1375" y="310" fill="#99006c"/><rect x="1383" y="310" fill="#990068"/><rect x="1391" y="310" fill="#990065"/><rect x="1399" y="310" fill="#990062"/><rect x="1031" y="318" fill="#001f99"/><rect x="1039" y="318" fill="#001d99"/><rect x="1047" y="318" fill="#001c99"/><rect x="1055" y="318" fill="#001a99"/><rect x="1063" y="318" fill="#001999"/><rect x="1071" y="318" fill="#001799"/><rect x="1079" y="318" fill="#001699"/><rect x="1087" y="318" fill="#001499"/><rect x="1095" y="318" fill="#001399"/><rect x="1103" y="318" fill="#001199"/><rect x="1111" y="318" fill="#011aff"/><rect x="1119" y="318" fill="#0b18ff"/><rect x="1127" y="318" fill="#1415ff"/><rect x="1135" y="318" fill="#1e12ff"/><rect x="1143" y="318" fill="#2710ff"/><rect x="1151" y="318" fill="#310dff"/><rect x="1159" y="318" fill="#3a0aff"/><rect x="1167" y="318" fill="#4408ff"/><rect x="1175" y="318" fill="#4e05ff"/><rect x="1183" y="318" fill="#5702ff"/><rect x="1191" y="318" fill="#6100ff"/><rect x="1199" y="318" fill="#400099"/><rect x="1207" y="318" fill="#460099"/><rect x="1215" y="318" fill="#4c0099"/><rect x="1223" y="318" fill="#520099"/><rect x="1231" y="318" fill="#580099"/><rect x="1239" y="318" fill="#5f0099"/><rect x="1247" y="318" fill="#650099"/><rect x="1255" y="318" fill="#6b0099"/><rect x="1263" y="318" fill="#710099"/><rect x="1271" y="318" fill="#780099"/><rect x="1279" y="318" fill="#7e0099"/><rect x="1287" y="318" fill="#840099"/><rect x="1295" y="318" fill="#8b0099"/><rect x="1303" y="318" fill="#910099"/><rect x="1311" y="318" fill="#980099"/><rect x="1319" y="318" fill="#990093"/><rect x="1327" y="318" fill="#99008d"/><rect x="1335" y="318" fill="#990087"/><rect x="1343" y="318" fill="#990082"/><rect x="1351" y="318" fill="#99007d"/><rect x="1359" y="318" fill="#990079"/><rect x="1367" y="318" fill="#990075"/><rect x="1375" y="318" fill="#990071"/><rect x="1383" y="318" fill="#99006d"/><rect x="1391" y="318" fill="#99006a"/><rect x="1031" y="326" fill="#001c99"/><rect x="1039" y="326" fill="#001b99"/><rect x="1047" y="326" fill="#001999"/><rect x="1055" y="326" fill="#001899"/><rect x="1063" y="326" fill="#001699"/><rect x="1071" y="326" fill="#001599"/><rect x="1079" y="326" fill="#001399"/><rect x="1087" y="326" fill="#001299"/><rect x="1095" y="326" fill="#001199"/><rect x="1103" y="326" fill="#000f99"/><rect x="1111" y="326" fill="#0017ff"/><rect x="1119" y="326" fill="#0914ff"/><rect x="1127" y="326" fill="#1212ff"/><rect x="1135" y="326" fill="#1b0fff"/><rect x="1143" y="326" fill="#240dff"/><rect x="1151" y="326" fill="#2d0aff"/><rect x="1159" y="326" fill="#3707ff"/><rect x="1167" y="326" fill="#4005ff"/><rect x="1175" y="326" fill="#4a02ff"/><rect x="1183" y="326" fill="#5300ff"/><rect x="1191" y="326" fill="#370099"/><rect x="1199" y="326" fill="#3d0099"/><rect x="1207" y="326" fill="#430099"/><rect x="1215" y="326" fill="#490099"/><rect x="1223" y="326" fill="#4f0099"/><rect x="1231" y="326" fill="#540099"/><rect x="1239" y="326" fill="#5a0099"/><rect x="1247" y="326" fill="#600099"/><rect x="1255" y="326" fill="#660099"/><rect x="1263" y="326" fill="#6c0099"/><rect x="1271" y="326" fill="#730099"/><rect x="1279" y="326" fill="#790099"/><rect x="1287" y="326" fill="#7f0099"/><rect x="1295" y="326" fill="#850099"/><rect x="1303" y="326" fill="#8b0099"/><rect x="1311" y="326" fill="#920099"/><rect x="1319" y="326" fill="#980099"/><rect x="1327" y="326" fill="#990093"/><rect x="1335" y="326" fill="#99008d"/><rect x="1343" y="326" fill="#990088"/><rect x="1351" y="326" fill="#990083"/><rect x="1359" y="326" fill="#99007e"/><rect x="1367" y="326" fill="#99007a"/><rect x="1375" y="326" fill="#990076"/><rect x="1383" y="326" fill="#990072"/><rect x="1039" y="334" fill="#001899"/><rect x="1047" y="334" fill="#001799"/><rect x="1055" y="334" fill="#001699"/><rect x="1063" y="334" fill="#001499"/><rect x="1071" y="334" fill="#001399"/><rect x="1079" y="334" fill="#001199"/><rect x="1087" y="334" fill="#001099"/><rect x="1095" y="334" fill="#000f99"/><rect x="1103" y="334" fill="#000d99"/><rect x="1111" y="334" fill="#000c99"/><rect x="1119" y="334" fill="#0711ff"/><rect x="1127" y="334" fill="#100fff"/><rect x="1135" y="334" fill="#190cff"/><rect x="1143" y="334" fill="#220aff"/><rect x="1151" y="334" fill="#2b07ff"/><rect x="1159" y="334" fill="#3405ff"/><rect x="1167" y="334" fill="#3d02ff"/><rect x="1175" y="334" fill="#4600ff"/><rect x="1183" y="334" fill="#2f0099"/><rect x="1191" y="334" fill="#350099"/><rect x="1199" y="334" fill="#3a0099"/><rect x="1207" y="334" fill="#400099"/><rect x="1215" y="334" fill="#450099"/><rect x="1223" y="334" fill="#4b0099"/><rect x="1231" y="334" fill="#510099"/><rect x="1239" y="334" fill="#560099"/><rect x="1247" y="334" fill="#5c0099"/><rect x="1255" y="334" fill="#620099"/><rect x="1263" y="334" fill="#680099"/><rect x="1271" y="334" fill="#6e0099"/><rect x="1279" y="334" fill="#740099"/><rect x="1287" y="334" fill="#7a0099"/><rect x="1295" y="334" fill="#800099"/><rect x="1303" y="334" fill="#860099"/><rect x="1311" y="334" fill="#8c0099"/><rect x="1319" y="334" fill="#920099"/><rect x="1327" y="334" fill="#980099"/><rect x="1335" y="334" fill="#990093"/><rect x="1343" y="334" fill="#99008d"/><rect x="1351" y="334" fill="#990088"/><rect x="1359" y="334" fill="#990083"/><rect x="1367" y="334" fill="#99007f"/><rect x="1375" y="334" fill="#99007b"/><rect x="1047" y="342" fill="#001599"/><rect x="1055" y="342" fill="#001499"/><rect x="1063" y="342" fill="#001299"/><rect x="1071" y="342" fill="#001199"/><rect x="1079" y="342" fill="#000f99"/><rect x="1087" y="342" fill="#000e99"/><rect x="1095" y="342" fill="#000d99"/><rect x="1103" y="342" fill="#000b99"/><rect x="1111" y="342" fill="#000a99"/><rect x="1119" y="342" fill="#060eff"/><rect x="1127" y="342" fill="#0e0cff"/><rect x="1135" y="342" fill="#1709ff"/><rect x="1143" y="342" fill="#1f07ff"/><rect x="1151" y="342" fill="#2805ff"/><rect x="1159" y="342" fill="#3102ff"/><rect x="1167" y="342" fill="#3900ff"/><rect x="1175" y="342" fill="#270099"/><rect x="1183" y="342" fill="#2d0099"/><rect x="1191" y="342" fill="#320099"/><rect x="1199" y="342" fill="#370099"/><rect x="1207" y="342" fill="#3d0099"/><rect x="1215" y="342" fill="#420099"/><rect x="1223" y="342" fill="#480099"/><rect x="1231" y="342" fill="#4d0099"/><rect x="1239" y="342" fill="#530099"/><rect x="1247" y="342" fill="#580099"/><rect x="1255" y="342" fill="#5e0099"/><rect x="1263" y="342" fill="#640099"/><rect x="1271" y="342" fill="#690099"/><rect x="1279" y="342" fill="#6f0099"/><rect x="1287" y="342" fill="#750099"/><rect x="1295" y="342" fill="#7b0099"/><rect x="1303" y="342" fill="#800099"/><rect x="1311" y="342" fill="#860099"/><rect x="1319" y="342" fill="#8c0099"/><rect x="1327" y="342" fill="#920099"/><rect x="1335" y="342" fill="#980099"/><rect x="1343" y="342" fill="#990093"/><rect x="1351" y="342" fill="#99008e"/><rect x="1359" y="342" fill="#990089"/><rect x="1367" y="342" fill="#990084"/><rect x="1047" y="350" fill="#001399"/><rect x="1055" y="350" fill="#001299"/><rect x="1063" y="350" fill="#001099"/><rect x="1071" y="350" fill="#000f99"/><rect x="1079" y="350" fill="#000e99"/><rect x="1087" y="350" fill="#000c99"/><rect x="1095" y="350" fill="#000b99"/><rect x="1103" y="350" fill="#000999"/><rect x="1111" y="350" fill="#000899"/><rect x="1119" y="350" fill="#040bff"/><rect x="1127" y="350" fill="#0c09ff"/><rect x="1135" y="350" fill="#1507ff"/><rect x="1143" y="350" fill="#1d04ff"/><rect x="1151" y="350" fill="#2502ff"/><rect x="1159" y="350" fill="#2e00ff"/><rect x="1167" y="350" fill="#200099"/><rect x="1175" y="350" fill="#250099"/><rect x="1183" y="350" fill="#2b0099"/><rect x="1191" y="350" fill="#300099"/><rect x="1199" y="350" fill="#350099"/><rect x="1207" y="350" fill="#3a0099"/><rect x="1215" y="350" fill="#3f0099"/><rect x="1223" y="350" fill="#450099"/><rect x="1231" y="350" fill="#4a0099"/><rect x="1239" y="350" fill="#4f0099"/><rect x="1247" y="350" fill="#550099"/><rect x="1255" y="350" fill="#5a0099"/><rect x="1263" y="350" fill="#600099"/><rect x="1271" y="350" fill="#650099"/><rect x="1279" y="350" fill="#6b0099"/><rect x="1287" y="350" fill="#700099"/><rect x="1295" y="350" fill="#760099"/><rect x="1303" y="350" fill="#7b0099"/><rect x="1311" y="350" fill="#810099"/><rect x="1319" y="350" fill="#870099"/><rect x="1327" y="350" fill="#8c0099"/><rect x="1335" y="350" fill="#920099"/><rect x="1343" y="350" fill="#980099"/><rect x="1351" y="350" fill="#990093"/><rect x="1359" y="350" fill="#99008e"/><rect x="1055" y="358" fill="#001099"/><rect x="1063" y="358" fill="#000e99"/><rect x="1071" y="358" fill="#000d99"/><rect x="1079" y="358" fill="#000c99"/><rect x="1087" y="358" fill="#000b99"/><rect x="1095" y="358" fill="#000999"/><rect x="1103" y="358" fill="#000899"/><rect x="1111" y="358" fill="#000699"/><rect x="1119" y="358" fill="#0309ff"/><rect x="1127" y="358" fill="#0b07ff"/><rect x="1135" y="358" fill="#1304ff"/><rect x="1143" y="358" fill="#1b02ff"/><rect x="1151" y="358" fill="#2300ff"/><rect x="1159" y="358" fill="#1a0099"/><rect x="1167" y="358" fill="#1f0099"/><rect x="1175" y="358" fill="#230099"/><rect x="1183" y="358" fill="#280099"/><rect x="1191" y="358" fill="#2d0099"/><rect x="1199" y="358" fill="#330099"/><rect x="1207" y="358" fill="#380099"/><rect x="1215" y="358" fill="#3d0099"/><rect x="1223" y="358" fill="#420099"/><rect x="1231" y="358" fill="#470099"/><rect x="1239" y="358" fill="#4c0099"/><rect x="1247" y="358" fill="#510099"/><rect x="1255" y="358" fill="#570099"/><rect x="1263" y="358" fill="#5c0099"/><rect x="1271" y="358" fill="#610099"/><rect x="1279" y="358" fill="#660099"/><rect x="1287" y="358" fill="#6c0099"/><rect x="1295" y="358" fill="#710099"/><rect x="1303" y="358" fill="#770099"/><rect x="1311" y="358" fill="#7c0099"/><rect x="1319" y="358" fill="#820099"/><rect x="1327" y="358" fill="#870099"/><rect x="1335" y="358" fill="#8d0099"/><rect x="1343" y="358" fill="#920099"/><rect x="1351" y="358" fill="#980099"/><rect x="1063" y="366" fill="#000d99"/><rect x="1071" y="366" fill="#000c99"/><rect x="1079" y="366" fill="#000a99"/><rect x="1087" y="366" fill="#000999"/><rect x="1095" y="366" fill="#000899"/><rect x="1103" y="366" fill="#000699"/><rect x="1111" y="366" fill="#000599"/><rect x="1119" y="366" fill="#0106ff"/><rect x="1127" y="366" fill="#0904ff"/><rect x="1135" y="366" fill="#1102ff"/><rect x="1143" y="366" fill="#1900ff"/><rect x="1151" y="366" fill="#130099"/><rect x="1159" y="366" fill="#180099"/><rect x="1167" y="366" fill="#1d0099"/><rect x="1175" y="366" fill="#220099"/><rect x="1183" y="366" fill="#270099"/><rect x="1191" y="366" fill="#2b0099"/><rect x="1199" y="366" fill="#300099"/><rect x="1207" y="366" fill="#350099"/><rect x="1215" y="366" fill="#3a0099"/><rect x="1223" y="366" fill="#3f0099"/><rect x="1231" y="366" fill="#440099"/><rect x="1239" y="366" fill="#490099"/><rect x="1247" y="366" fill="#4e0099"/><rect x="1255" y="366" fill="#530099"/><rect x="1263" y="366" fill="#580099"/><rect x="1271" y="366" fill="#5d0099"/><rect x="1279" y="366" fill="#630099"/><rect x="1287" y="366" fill="#680099"/><rect x="1295" y="366" fill="#6d0099"/><rect x="1303" y="366" fill="#720099"/><rect x="1311" y="366" fill="#780099"/><rect x="1319" y="366" fill="#7d0099"/><rect x="1327" y="366" fill="#820099"/><rect x="1335" y="366" fill="#880099"/><rect x="1343" y="366" fill="#8d0099"/><rect x="1063" y="374" fill="#000b99"/><rect x="1071" y="374" fill="#000a99"/><rect x="1079" y="374" fill="#000999"/><rect x="1087" y="374" fill="#000799"/><rect x="1095" y="374" fill="#000699"/><rect x="1103" y="374" fill="#000599"/><rect x="1111" y="374" fill="#000499"/><rect x="1119" y="374" fill="#0004ff"/><rect x="1127" y="374" fill="#0802ff"/><rect x="1135" y="374" fill="#0f00ff"/><rect x="1143" y="374" fill="#0d0099"/><rect x="1151" y="374" fill="#120099"/><rect x="1159" y="374" fill="#170099"/><rect x="1167" y="374" fill="#1b0099"/><rect x="1175" y="374" fill="#200099"/><rect x="1183" y="374" fill="#250099"/><rect x="1191" y="374" fill="#290099"/><rect x="1199" y="374" fill="#2e0099"/><rect x="1207" y="374" fill="#330099"/><rect x="1215" y="374" fill="#380099"/><rect x="1223" y="374" fill="#3d0099"/><rect x="1231" y="374" fill="#410099"/><rect x="1239" y="374" fill="#460099"/><rect x="1247" y="374" fill="#4b0099"/><rect x="1255" y="374" fill="#500099"/><rect x="1263" y="374" fill="#550099"/><rect x="1271" y="374" fill="#5a0099"/><rect x="1279" y="374" fill="#5f0099"/><rect x="1287" y="374" fill="#640099"/><rect x="1295" y="374" fill="#690099"/><rect x="1303" y="374" fill="#6e0099"/><rect x="1311" y="374" fill="#730099"/><rect x="1319" y="374" fill="#780099"/><rect x="1327" y="374" fill="#7e0099"/><rect x="1335" y="374" fill="#830099"/><rect x="1071" y="382" fill="#000899"/><rect x="1079" y="382" fill="#000799"/><rect x="1087" y="382" fill="#000699"/><rect x="1095" y="382" fill="#000599"/><rect x="1103" y="382" fill="#000399"/><rect x="1111" y="382" fill="#000299"/><rect x="1119" y="382" fill="#000199"/><rect x="1127" y="382" fill="#0600ff"/><rect x="1135" y="382" fill="#080099"/><rect x="1143" y="382" fill="#0c0099"/><rect x="1151" y="382" fill="#110099"/><rect x="1159" y="382" fill="#150099"/><rect x="1167" y="382" fill="#1a0099"/><rect x="1175" y="382" fill="#1e0099"/><rect x="1183" y="382" fill="#230099"/><rect x="1191" y="382" fill="#280099"/><rect x="1199" y="382" fill="#2c0099"/><rect x="1207" y="382" fill="#310099"/><rect x="1215" y="382" fill="#350099"/><rect x="1223" y="382" fill="#3a0099"/><rect x="1231" y="382" fill="#3f0099"/><rect x="1239" y="382" fill="#440099"/><rect x="1247" y="382" fill="#480099"/><rect x="1255" y="382" fill="#4d0099"/><rect x="1263" y="382" fill="#520099"/><rect x="1271" y="382" fill="#570099"/><rect x="1279" y="382" fill="#5c0099"/><rect x="1287" y="382" fill="#600099"/><rect x="1295" y="382" fill="#650099"/><rect x="1303" y="382" fill="#6a0099"/><rect x="1311" y="382" fill="#6f0099"/><rect x="1319" y="382" fill="#740099"/><rect x="1327" y="382" fill="#790099"/><rect x="1079" y="390" fill="#000699"/><rect x="1087" y="390" fill="#000599"/><rect x="1095" y="390" fill="#000399"/><rect x="1103" y="390" fill="#000299"/><rect x="1111" y="390" fill="#000199"/><rect x="1119" y="390" fill="#000099"/><rect x="1127" y="390" fill="#030099"/><rect x="1135" y="390" fill="#070099"/><rect x="1143" y="390" fill="#0b0099"/><rect x="1151" y="390" fill="#100099"/><rect x="1159" y="390" fill="#140099"/><rect x="1167" y="390" fill="#180099"/><rect x="1175" y="390" fill="#1d0099"/><rect x="1183" y="390" fill="#210099"/><rect x="1191" y="390" fill="#260099"/><rect x="1199" y="390" fill="#2a0099"/><rect x="1207" y="390" fill="#2f0099"/><rect x="1215" y="390" fill="#330099"/><rect x="1223" y="390" fill="#380099"/><rect x="1231" y="390" fill="#3c0099"/><rect x="1239" y="390" fill="#410099"/><rect x="1247" y="390" fill="#460099"/><rect x="1255" y="390" fill="#4a0099"/><rect x="1263" y="390" fill="#4f0099"/><rect x="1271" y="390" fill="#540099"/><rect x="1279" y="390" fill="#580099"/><rect x="1287" y="390" fill="#5d0099"/><rect x="1295" y="390" fill="#620099"/><rect x="1303" y="390" fill="#670099"/><rect x="1311" y="390" fill="#6b0099"/><rect x="1319" y="390" fill="#700099"/><rect x="1079" y="398" fill="#000499"/><rect x="1087" y="398" fill="#000399"/><rect x="1095" y="398" fill="#000299"/><rect x="1103" y="398" fill="#000199"/><rect x="1111" y="398" fill="#000099"/><rect x="1119" y="398" fill="#000099"/><rect x="1127" y="398" fill="#020099"/><rect x="1135" y="398" fill="#060099"/><rect x="1143" y="398" fill="#0a0099"/><rect x="1151" y="398" fill="#0f0099"/><rect x="1159" y="398" fill="#130099"/><rect x="1167" y="398" fill="#170099"/><rect x="1175" y="398" fill="#1b0099"/><rect x="1183" y="398" fill="#200099"/><rect x="1191" y="398" fill="#240099"/><rect x="1199" y="398" fill="#280099"/><rect x="1207" y="398" fill="#2d0099"/><rect x="1215" y="398" fill="#310099"/><rect x="1223" y="398" fill="#360099"/><rect x="1231" y="398" fill="#3a0099"/><rect x="1239" y="398" fill="#3f0099"/><rect x="1247" y="398" fill="#430099"/><rect x="1255" y="398" fill="#480099"/><rect x="1263" y="398" fill="#4c0099"/><rect x="1271" y="398" fill="#510099"/><rect x="1279" y="398" fill="#550099"/><rect x="1287" y="398" fill="#5a0099"/><rect x="1295" y="398" fill="#5e0099"/><rect x="1303" y="398" fill="#630099"/><rect x="1311" y="398" fill="#680099"/><rect x="1087" y="406" fill="#000299"/><rect x="1095" y="406" fill="#000199"/><rect x="1103" y="406" fill="#000099"/><rect x="1111" y="406" fill="#000099"/><rect x="1119" y="406" fill="#000099"/><rect x="1127" y="406" fill="#010099"/><rect x="1135" y="406" fill="#050099"/><rect x="1143" y="406" fill="#090099"/><rect x="1151" y="406" fill="#0e0099"/><rect x="1159" y="406" fill="#120099"/><rect x="1167" y="406" fill="#160099"/><rect x="1175" y="406" fill="#1a0099"/><rect x="1183" y="406" fill="#1e0099"/><rect x="1191" y="406" fill="#220099"/><rect x="1199" y="406" fill="#270099"/><rect x="1207" y="406" fill="#2b0099"/><rect x="1215" y="406" fill="#2f0099"/><rect x="1223" y="406" fill="#340099"/><rect x="1231" y="406" fill="#380099"/><rect x="1239" y="406" fill="#3c0099"/><rect x="1247" y="406" fill="#410099"/><rect x="1255" y="406" fill="#450099"/><rect x="1263" y="406" fill="#490099"/><rect x="1271" y="406" fill="#4e0099"/><rect x="1279" y="406" fill="#520099"/><rect x="1287" y="406" fill="#570099"/><rect x="1295" y="406" fill="#5b0099"/><rect x="1303" y="406" fill="#600099"/><rect x="1095" y="414" fill="#000099"/><rect x="1103" y="414" fill="#000099"/><rect x="1111" y="414" fill="#000099"/><rect x="1119" y="414" fill="#000099"/><rect x="1127" y="414" fill="#010099"/><rect x="1135" y="414" fill="#050099"/><rect x="1143" y="414" fill="#090099"/><rect x="1151" y="414" fill="#0d0099"/><rect x="1159" y="414" fill="#110099"/><rect x="1167" y="414" fill="#150099"/><rect x="1175" y="414" fill="#190099"/><rect x="1183" y="414" fill="#1d0099"/><rect x="1191" y="414" fill="#210099"/><rect x="1199" y="414" fill="#250099"/><rect x="1207" y="414" fill="#290099"/><rect x="1215" y="414" fill="#2d0099"/><rect x="1223" y="414" fill="#320099"/><rect x="1231" y="414" fill="#360099"/><rect x="1239" y="414" fill="#3a0099"/><rect x="1247" y="414" fill="#3e0099"/><rect x="1255" y="414" fill="#430099"/><rect x="1263" y="414" fill="#470099"/><rect x="1271" y="414" fill="#4b0099"/><rect x="1279" y="414" fill="#500099"/><rect x="1287" y="414" fill="#540099"/><rect x="1295" y="414" fill="#580099"/><rect x="1103" y="422" fill="#000099"/><rect x="1111" y="422" fill="#000099"/><rect x="1119" y="422" fill="#000099"/><rect x="1127" y="422" fill="#000099"/><rect x="1135" y="422" fill="#040099"/><rect x="1143" y="422" fill="#080099"/><rect x="1151" y="422" fill="#0c0099"/><rect x="1159" y="422" fill="#100099"/><rect x="1167" y="422" fill="#130099"/><rect x="1175" y="422" fill="#170099"/><rect x="1183" y="422" fill="#1b0099"/><rect x="1191" y="422" fill="#1f0099"/><rect x="1199" y="422" fill="#240099"/><rect x="1207" y="422" fill="#280099"/><rect x="1215" y="422" fill="#2c0099"/><rect x="1223" y="422" fill="#300099"/><rect x="1231" y="422" fill="#340099"/><rect x="1239" y="422" fill="#380099"/><rect x="1247" y="422" fill="#3c0099"/><rect x="1255" y="422" fill="#400099"/><rect x="1263" y="422" fill="#440099"/><rect x="1271" y="422" fill="#490099"/><rect x="1279" y="422" fill="#4d0099"/><rect x="1287" y="422" fill="#510099"/><rect x="1111" y="430" fill="#000099"/><rect x="1119" y="430" fill="#000099"/><rect x="1127" y="430" fill="#000099"/><rect x="1135" y="430" fill="#030099"/><rect x="1143" y="430" fill="#070099"/><rect x="1151" y="430" fill="#0b0099"/><rect x="1159" y="430" fill="#0f0099"/><rect x="1167" y="430" fill="#120099"/><rect x="1175" y="430" fill="#160099"/><rect x="1183" y="430" fill="#1a0099"/><rect x="1191" y="430" fill="#1e0099"/><rect x="1199" y="430" fill="#220099"/><rect x="1207" y="430" fill="#260099"/><rect x="1215" y="430" fill="#2a0099"/><rect x="1223" y="430" fill="#2e0099"/><rect x="1231" y="430" fill="#320099"/><rect x="1239" y="430" fill="#360099"/><rect x="1247" y="430" fill="#3a0099"/><rect x="1255" y="430" fill="#3e0099"/><rect x="1263" y="430" fill="#420099"/><rect x="1271" y="430" fill="#460099"/><rect x="1279" y="430" fill="#4a0099"/><rect x="1119" y="438" fill="#000099"/><rect x="1127" y="438" fill="#000099"/><rect x="1135" y="438" fill="#020099"/><rect x="1143" y="438" fill="#060099"/><rect x="1151" y="438" fill="#0a0099"/><rect x="1159" y="438" fill="#0e0099"/><rect x="1167" y="438" fill="#110099"/><rect x="1175" y="438" fill="#150099"/><rect x="1183" y="438" fill="#190099"/><rect x="1191" y="438" fill="#1d0099"/><rect x="1199" y="438" fill="#210099"/><rect x="1207" y="438" fill="#240099"/><rect x="1215" y="438" fill="#280099"/><rect x="1223" y="438" fill="#2c0099"/><rect x="1231" y="438" fill="#300099"/><rect x="1239" y="438" fill="#340099"/><rect x="1247" y="438" fill="#380099"/><rect x="1255" y="438" fill="#3c0099"/><rect x="1263" y="438" fill="#400099"/><rect x="1271" y="438" fill="#440099"/><rect x="1127" y="446" fill="#000099"/><rect x="1135" y="446" fill="#020099"/><rect x="1143" y="446" fill="#050099"/><rect x="1151" y="446" fill="#090099"/><rect x="1159" y="446" fill="#0d0099"/><rect x="1167" y="446" fill="#100099"/><rect x="1175" y="446" fill="#140099"/><rect x="1183" y="446" fill="#180099"/><rect x="1191" y="446" fill="#1c0099"/><rect x="1199" y="446" fill="#1f0099"/><rect x="1207" y="446" fill="#230099"/><rect x="1215" y="446" fill="#270099"/><rect x="1223" y="446" fill="#2b0099"/><rect x="1231" y="446" fill="#2e0099"/><rect x="1239" y="446" fill="#320099"/><rect x="1247" y="446" fill="#360099"/><rect x="1255" y="446" fill="#3a0099"/><rect x="1263" y="446" fill="#3e0099"/><rect x="1135" y="454" fill="#010099"/><rect x="1143" y="454" fill="#050099"/><rect x="1151" y="454" fill="#080099"/><rect x="1159" y="454" fill="#0c0099"/><rect x="1167" y="454" fill="#0f0099"/><rect x="1175" y="454" fill="#130099"/><rect x="1183" y="454" fill="#170099"/><rect x="1191" y="454" fill="#1a0099"/><rect x="1199" y="454" fill="#1e0099"/><rect x="1207" y="454" fill="#220099"/><rect x="1215" y="454" fill="#250099"/><rect x="1223" y="454" fill="#290099"/><rect x="1231" y="454" fill="#2d0099"/><rect x="1239" y="454" fill="#310099"/><rect x="1247" y="454" fill="#340099"/><rect x="1255" y="454" fill="#380099"/><rect x="1143" y="462" fill="#040099"/><rect x="1151" y="462" fill="#070099"/><rect x="1159" y="462" fill="#0b0099"/><rect x="1167" y="462" fill="#0f0099"/><rect x="1175" y="462" fill="#120099"/><rect x="1183" y="462" fill="#160099"/><rect x="1191" y="462" fill="#190099"/><rect x="1199" y="462" fill="#1d0099"/><rect x="1207" y="462" fill="#200099"/><rect x="1215" y="462" fill="#240099"/><rect x="1223" y="462" fill="#280099"/><rect x="1231" y="462" fill="#2b0099"/><rect x="1239" y="462" fill="#2f0099"/><rect x="1247" y="462" fill="#330099"/><rect x="1151" y="470" fill="#070099"/><rect x="1159" y="470" fill="#0a0099"/><rect x="1167" y="470" fill="#0e0099"/><rect x="1175" y="470" fill="#110099"/><rect x="1183" y="470" fill="#150099"/><rect x="1191" y="470" fill="#180099"/><rect x="1199" y="470" fill="#1c0099"/><rect x="1207" y="470" fill="#1f0099"/><rect x="1215" y="470" fill="#230099"/><rect x="1223" y="470" fill="#260099"/><rect x="1231" y="470" fill="#2a0099"/><rect x="1239" y="470" fill="#2d0099"/><rect x="1159" y="478" fill="#090099"/><rect x="1167" y="478" fill="#0d0099"/><rect x="1175" y="478" fill="#100099"/><rect x="1183" y="478" fill="#140099"/><rect x="1191" y="478" fill="#170099"/><rect x="1199" y="478" fill="#1a0099"/><rect x="1207" y="478" fill="#1e0099"/><rect x="1215" y="478" fill="#210099"/><rect x="1223" y="478" fill="#250099"/><rect x="1231" y="478" fill="#280099"/><rect x="1167" y="486" fill="#0c0099"/><rect x="1175" y="486" fill="#0f0099"/><rect x="1183" y="486" fill="#130099"/><rect x="1191" y="486" fill="#160099"/><rect x="1199" y="486" fill="#190099"/><rect x="1207" y="486" fill="#1d0099"/><rect x="1215" y="486" fill="#200099"/><rect x="1223" y="486" fill="#240099"/><rect x="1175" y="494" fill="#0e0099"/><rect x="1183" y="494" fill="#120099"/><rect x="1191" y="494" fill="#150099"/><rect x="1199" y="494" fill="#180099"/><rect x="1207" y="494" fill="#1c0099"/><rect x="1215" y="494" fill="#1f0099"/><rect x="1191" y="502" fill="#140099"/><rect x="1199" y="502" fill="#170099"/><rect x="1207" y="502" fill="#1b0099"/></g></svg>
<canvas id="cie" width="599" height="461" style="position:absolute;left:951px;top:54px;"></canvas>
<script>
(function(){
var c=document.getElementById('cie'); if(!c||!c.getContext) return;
var W=c.width,H=c.height, ctx=c.getContext('2d');
var OX=951, OY=54, UX=949.5, VY=514.6, SU=1000, SV=768, K=0.6;
var loc=[[0.2568, 0.01659], [0.25677, 0.01656], [0.25672, 0.01651], [0.25666, 0.01645], [0.25659, 0.01639], [0.25651, 0.01632], [0.25642, 0.01627], [0.25632, 0.01621], [0.25622, 0.01614], [0.25611, 0.01608], [0.25598, 0.01602], [0.25585, 0.01597], [0.2557, 0.01594], [0.25554, 0.0159], [0.25539, 0.01587], [0.25522, 0.01585], [0.25503, 0.01585], [0.2548, 0.01587], [0.25453, 0.01593], [0.25422, 0.01602], [0.25385, 0.01613], [0.25346, 0.01627], [0.25305, 0.01643], [0.25262, 0.01664], [0.25221, 0.01688], [0.2518, 0.01717], [0.2514, 0.01749], [0.25098, 0.01785], [0.25056, 0.01824], [0.2501, 0.01867], [0.24962, 0.01913], [0.2491, 0.01962], [0.24857, 0.02013], [0.24802, 0.02068], [0.24743, 0.02128], [0.2468, 0.02192], [0.24612, 0.02262], [0.24538, 0.02338], [0.2446, 0.0242], [0.24377, 0.02506], [0.2429, 0.02598], [0.242, 0.02694], [0.24106, 0.02795], [0.2401, 0.02901], [0.2391, 0.03011], [0.23806, 0.03127], [0.23699, 0.03247], [0.23586, 0.03372], [0.23469, 0.03501], [0.23347, 0.03633], [0.23222, 0.03769], [0.23092, 0.03908], [0.22957, 0.04054], [0.22814, 0.04207], [0.22663, 0.04368], [0.22504, 0.04538], [0.22337, 0.04715], [0.22164, 0.04899], [0.21984, 0.0509], [0.21797, 0.05289], [0.21606, 0.05495], [0.2141, 0.05705], [0.21209, 0.0592], [0.21002, 0.06142], [0.20787, 0.06374], [0.20565, 0.06618], [0.20334, 0.06878], [0.20094, 0.0715], [0.19846, 0.07432], [0.19591, 0.07726], [0.19327, 0.08035], [0.19054, 0.08363], [0.18772, 0.08711], [0.18485, 0.09071], [0.18193, 0.09438], [0.17892, 0.09824], [0.17579, 0.10238], [0.17248, 0.10691], [0.16896, 0.11195], [0.16522, 0.11746], [0.16129, 0.12337], [0.15718, 0.12968], [0.15293, 0.13638], [0.14856, 0.14348], [0.14408, 0.15098], [0.13947, 0.1589], [0.13471, 0.16723], [0.12982, 0.17597], [0.12484, 0.18508], [0.11979, 0.19455], [0.11469, 0.20437], [0.10951, 0.21463], [0.10421, 0.22536], [0.09884, 0.23645], [0.09344, 0.24779], [0.08809, 0.25929], [0.08282, 0.27083], [0.07756, 0.28253], [0.07225, 0.29449], [0.06698, 0.3066], [0.06182, 0.31875], [0.05685, 0.33081], [0.05213, 0.34269], [0.04766, 0.35448], [0.04336, 0.3663], [0.03925, 0.37804], [0.03533, 0.38959], [0.03163, 0.40084], [0.02816, 0.41168], [0.02491, 0.42217], [0.02187, 0.43242], [0.01905, 0.44237], [0.01645, 0.45196], [0.01406, 0.46114], [0.01189, 0.46984], [0.00996, 0.47806], [0.00827, 0.48584], [0.00679, 0.49321], [0.00552, 0.50018], [0.00442, 0.50679], [0.00347, 0.51307], [0.0027, 0.51895], [0.00213, 0.52442], [0.00173, 0.52952], [0.00149, 0.53431], [0.0014, 0.53884], [0.00144, 0.54316], [0.00162, 0.54724], [0.00195, 0.55103], [0.00244, 0.55456], [0.00305, 0.55786], [0.00379, 0.56094], [0.00464, 0.56384], [0.00562, 0.56654], [0.00674, 0.56902], [0.00799, 0.57128], [0.00934, 0.57335], [0.01078, 0.57524], [0.01228, 0.57697], [0.01388, 0.57851], [0.01558, 0.57983], [0.01737, 0.58098], [0.01923, 0.58198], [0.02115, 0.58287], [0.02312, 0.58367], [0.02513, 0.58435], [0.02722, 0.58487], [0.02936, 0.58528], [0.03155, 0.58561], [0.03377, 0.58589], [0.03601, 0.58614], [0.03828, 0.58636], [0.0406, 0.58652], [0.04295, 0.58662], [0.04532, 0.58668], [0.04769, 0.58672], [0.05006, 0.58675], [0.05242, 0.58677], [0.05478, 0.58676], [0.05714, 0.58673], [0.05952, 0.58668], [0.06192, 0.58661], [0.06434, 0.58652], [0.06677, 0.58642], [0.06921, 0.58629], [0.07167, 0.58615], [0.07415, 0.58599], [0.07667, 0.58581], [0.07922, 0.58562], [0.08182, 0.58541], [0.08444, 0.58518], [0.08709, 0.58494], [0.08978, 0.58468], [0.0925, 0.5844], [0.09527, 0.58411], [0.09807, 0.58381], [0.10091, 0.58349], [0.10379, 0.58315], [0.10671, 0.58281], [0.10968, 0.58244], [0.1127, 0.58207], [0.11577, 0.58168], [0.11888, 0.58128], [0.12204, 0.58087], [0.12525, 0.58044], [0.12852, 0.58], [0.13186, 0.57955], [0.13525, 0.57909], [0.1387, 0.57862], [0.14221, 0.57813], [0.14578, 0.57763], [0.14941, 0.57712], [0.1531, 0.57659], [0.15686, 0.57605], [0.16067, 0.5755], [0.16455, 0.57494], [0.16849, 0.57437], [0.1725, 0.57378], [0.17659, 0.57318], [0.18075, 0.57257], [0.18497, 0.57196], [0.18927, 0.57133], [0.19364, 0.57068], [0.19808, 0.57003], [0.2026, 0.56936], [0.20718, 0.56868], [0.21183, 0.56799], [0.21656, 0.56729], [0.22136, 0.56657], [0.22623, 0.56585], [0.23117, 0.56511], [0.23619, 0.56436], [0.24128, 0.5636], [0.24644, 0.56282], [0.25167, 0.56204], [0.25698, 0.56124], [0.26234, 0.56044], [0.26778, 0.55963], [0.27329, 0.5588], [0.27888, 0.55797], [0.28452, 0.55712], [0.29021, 0.55627], [0.29596, 0.55541], [0.30176, 0.55455], [0.30763, 0.55367], [0.31356, 0.55279], [0.31953, 0.5519], [0.32552, 0.55101], [0.33153, 0.55012], [0.33757, 0.54921], [0.34367, 0.54829], [0.3498, 0.54737], [0.35593, 0.54645], [0.36202, 0.54553], [0.36806, 0.54463], [0.37404, 0.54373], [0.37998, 0.54284], [0.3859, 0.54196], [0.39178, 0.54108], [0.39764, 0.54021], [0.40347, 0.53933], [0.40931, 0.53846], [0.41515, 0.53759], [0.42097, 0.53672], [0.42673, 0.53586], [0.4324, 0.53501], [0.43794, 0.53419], [0.44338, 0.53338], [0.44873, 0.53259], [0.45399, 0.53181], [0.45915, 0.53105], [0.46421, 0.5303], [0.46917, 0.52956], [0.47403, 0.52884], [0.47879, 0.52812], [0.48345, 0.52742], [0.48801, 0.52674], [0.49245, 0.52607], [0.49677, 0.52542], [0.50096, 0.52479], [0.50504, 0.52418], [0.50901, 0.52358], [0.51286, 0.523], [0.51661, 0.52244], [0.52026, 0.52189], [0.52379, 0.52137], [0.52721, 0.52086], [0.53052, 0.52037], [0.53374, 0.5199], [0.53687, 0.51943], [0.53992, 0.51898], [0.54289, 0.51853], [0.54576, 0.5181], [0.54854, 0.51769], [0.55125, 0.51728], [0.5539, 0.51688], [0.5565, 0.51649], [0.55905, 0.51611], [0.56154, 0.51573], [0.56397, 0.51537], [0.56633, 0.51501], [0.56864, 0.51467], [0.57088, 0.51433], [0.57306, 0.514], [0.57518, 0.51369], [0.57724, 0.51338], [0.57924, 0.51308], [0.58117, 0.51279], [0.58304, 0.51251], [0.58483, 0.51224], [0.58657, 0.51199], [0.58823, 0.51175], [0.58984, 0.51151], [0.59138, 0.51129], [0.59287, 0.51107], [0.59428, 0.51086], [0.59563, 0.51066], [0.59692, 0.51046], [0.59816, 0.51028], [0.59935, 0.5101], [0.6005, 0.50993], [0.6016, 0.50976], [0.60266, 0.5096], [0.60367, 0.50945], [0.60463, 0.50931], [0.60555, 0.50917], [0.60644, 0.50903], [0.60725, 0.50891], [0.608, 0.5088], [0.6087, 0.5087], [0.60939, 0.50859], [0.61011, 0.50848], [0.61088, 0.50837], [0.61169, 0.50825], [0.61251, 0.50812], [0.61335, 0.508], [0.61423, 0.50787], [0.61516, 0.50773], [0.61616, 0.50758], [0.61734, 0.5074], [0.6187, 0.5072], [0.62011, 0.50698], [0.62145, 0.50678], [0.62258, 0.50661], [0.62339, 0.50649]];
var off=document.createElement('canvas'); off.width=W; off.height=H;
var oc=off.getContext('2d'); var img=oc.createImageData(W,H); var dt=img.data;
function C(u,v,a){ if(v<0.001) v=0.001;
 var d=6*u-16*v+12, x=9*u/d, y=4*v/d;
 var X=x/y, Z=(1-x-y)/y;
 var r=3.2406*X-1.5372-0.4986*Z, g=-0.9689*X+1.8758+0.0415*Z, b=0.0557*X-0.2040+1.0570*Z;
 var o=(r<0||g<0||b<0); if(r<0)r=0; if(g<0)g=0; if(b<0)b=0;
 var m=Math.max(r,g,b); if(m<=0)m=1; r/=m; g/=m; b/=m;
 if(o){r*=K;g*=K;b*=K;}
 a[0]+=r; a[1]+=g; a[2]+=b; }
var acc=[0,0,0];
for(var j=0;j<H;j++){ for(var i=0;i<W;i++){
 acc[0]=acc[1]=acc[2]=0;
 for(var sj=0;sj<2;sj++) for(var si=0;si<2;si++){ C((OX+i+0.25+0.5*si-UX)/SU,(VY-(OY+j+0.25+0.5*sj))/SV,acc); }
 var p=(j*W+i)*4; dt[p]=acc[0]*63.75; dt[p+1]=acc[1]*63.75; dt[p+2]=acc[2]*63.75; dt[p+3]=255;
}}
oc.putImageData(img,0,0);
ctx.beginPath();
for(var k=0;k<loc.length;k++){ var px=UX+loc[k][0]*SU-OX, py=VY-loc[k][1]*SV-OY; if(k==0) ctx.moveTo(px,py); else ctx.lineTo(px,py); }
ctx.closePath(); ctx.clip(); ctx.drawImage(off,0,0);
})();
</script>
<svg style="position:absolute;left:951px;top:54px;" width="599" height="461" viewBox="951 54 599 461"><rect x="1067.8" y="75.3" width="13" height="13" fill="none" stroke="#f4f4f4" stroke-width="1.7"/><rect x="1147.4" y="83.4" width="13" height="13" fill="none" stroke="#f4f4f4" stroke-width="1.7"/><rect x="1172.4" y="87.3" width="13" height="13" fill="none" stroke="#f4f4f4" stroke-width="1.7"/><rect x="1128.0" y="90.5" width="13" height="13" fill="none" stroke="#f4f4f4" stroke-width="1.7"/><rect x="1091.0" y="98.4" width="13" height="13" fill="none" stroke="#f4f4f4" stroke-width="1.7"/><rect x="1125.5" y="111.2" width="13" height="13" fill="none" stroke="#f4f4f4" stroke-width="1.7"/><rect x="1097.4" y="140.5" width="13" height="13" fill="none" stroke="#f4f4f4" stroke-width="1.7"/><rect x="1082.5" y="158.5" width="13" height="13" fill="none" stroke="#f4f4f4" stroke-width="1.7"/><rect x="1087.5" y="187.3" width="13" height="13" fill="none" stroke="#f4f4f4" stroke-width="1.7"/><rect x="1119.5" y="185.2" width="13" height="13" fill="none" stroke="#f4f4f4" stroke-width="1.7"/><rect x="1138.5" y="190.1" width="13" height="13" fill="none" stroke="#f4f4f4" stroke-width="1.7"/><rect x="1171.4" y="207.5" width="13" height="13" fill="none" stroke="#f4f4f4" stroke-width="1.7"/><rect x="1230.3" y="180.5" width="13" height="13" fill="none" stroke="#f4f4f4" stroke-width="1.7"/><rect x="1121.5" y="235.3" width="13" height="13" fill="none" stroke="#f4f4f4" stroke-width="1.7"/><rect x="1121.5" y="282.3" width="13" height="13" fill="none" stroke="#f4f4f4" stroke-width="1.7"/><rect x="1119.5" y="387.0" width="13" height="13" fill="none" stroke="#f4f4f4" stroke-width="1.7"/><rect x="1248.1" y="254.3" width="13" height="13" fill="none" stroke="#f4f4f4" stroke-width="1.7"/><rect x="1393.1" y="106.4" width="13" height="13" fill="none" stroke="#f4f4f4" stroke-width="1.7"/><rect x="1318.0" y="125.1" width="13" height="13" fill="none" stroke="#f4f4f4" stroke-width="1.7"/><rect x="1260.5" y="136.4" width="13" height="13" fill="none" stroke="#f4f4f4" stroke-width="1.7"/><rect x="1242.4" y="97.1" width="13" height="13" fill="none" stroke="#f4f4f4" stroke-width="1.7"/><rect x="1242.4" y="100.5" width="13" height="13" fill="none" stroke="#f4f4f4" stroke-width="1.7"/><rect x="1202.3" y="93.4" width="13" height="13" fill="none" stroke="#f4f4f4" stroke-width="1.7"/><rect x="1218.3" y="104.5" width="13" height="13" fill="none" stroke="#f4f4f4" stroke-width="1.7"/><rect x="1195.8" y="112.0" width="13" height="13" fill="none" stroke="#f4f4f4" stroke-width="1.7"/><rect x="1177.0" y="120.5" width="13" height="13" fill="none" stroke="#f4f4f4" stroke-width="1.7"/><rect x="1176.5" y="130.8" width="13" height="13" fill="none" stroke="#f4f4f4" stroke-width="1.7"/><rect x="1186.4" y="124.2" width="13" height="13" fill="none" stroke="#f4f4f4" stroke-width="1.7"/><rect x="1218.3" y="118.5" width="13" height="13" fill="none" stroke="#f4f4f4" stroke-width="1.7"/><rect x="1206.5" y="121.5" width="13" height="13" fill="none" stroke="#f4f4f4" stroke-width="1.7"/><rect x="1211.5" y="109.5" width="13" height="13" fill="none" stroke="#f4f4f4" stroke-width="1.7"/><rect x="1223.5" y="111.5" width="13" height="13" fill="none" stroke="#f4f4f4" stroke-width="1.7"/><rect x="1188.5" y="115.5" width="13" height="13" fill="none" stroke="#f4f4f4" stroke-width="1.7"/><rect x="1198.5" y="123.5" width="13" height="13" fill="none" stroke="#f4f4f4" stroke-width="1.7"/><rect x="1204.5" y="115.5" width="13" height="13" fill="none" stroke="#f4f4f4" stroke-width="1.7"/><rect x="1140.3" y="148.2" width="13" height="13" fill="none" stroke="#000" stroke-width="2.2"/><circle cx="1069.4" cy="82.4" r="4.3" fill="#22e622" stroke="#141414" stroke-width="1.2"/><circle cx="1151.4" cy="89.2" r="4.3" fill="#f2ee10" stroke="#141414" stroke-width="1.2"/><circle cx="1180.3" cy="93.5" r="4.3" fill="#d8b838" stroke="#141414" stroke-width="1.2"/><circle cx="1129.2" cy="94.3" r="4.3" fill="#a0a858" stroke="#141414" stroke-width="1.2"/><circle cx="1092.3" cy="101.4" r="4.3" fill="#4e7a52" stroke="#141414" stroke-width="1.2"/><circle cx="1129.2" cy="114.2" r="4.3" fill="#5a6646" stroke="#141414" stroke-width="1.2"/><circle cx="1097.2" cy="140.3" r="4.3" fill="#6fa89c" stroke="#141414" stroke-width="1.2"/><circle cx="1144.5" cy="152.5" r="4.3" fill="#7a7a7a" stroke="#141414" stroke-width="1.2"/><circle cx="1145.2" cy="151.0" r="4.3" fill="#8c8c8c" stroke="#141414" stroke-width="1.2"/><circle cx="1145.8" cy="148.8" r="4.3" fill="#a6a6a6" stroke="#141414" stroke-width="1.2"/><circle cx="1083.5" cy="162.5" r="4.3" fill="#30e4f4" stroke="#141414" stroke-width="1.2"/><circle cx="1154.4" cy="174.4" r="4.3" fill="#000" stroke="#141414" stroke-width="1.2"/><circle cx="1087.3" cy="186.4" r="4.3" fill="#2a7f90" stroke="#141414" stroke-width="1.2"/><circle cx="1120.4" cy="188.2" r="4.3" fill="#5b7497" stroke="#141414" stroke-width="1.2"/><circle cx="1143.3" cy="195.2" r="4.3" fill="#8480a0" stroke="#141414" stroke-width="1.2"/><circle cx="1180.2" cy="207.2" r="4.3" fill="#5c4060" stroke="#141414" stroke-width="1.2"/><circle cx="1251.8" cy="184.0" r="4.3" fill="#b06890" stroke="#141414" stroke-width="1.2"/><circle cx="1124.5" cy="242.7" r="4.3" fill="#5568a0" stroke="#141414" stroke-width="1.2"/><circle cx="1124.5" cy="291.7" r="4.3" fill="#40508e" stroke="#141414" stroke-width="1.2"/><circle cx="1121.0" cy="401.0" r="4.3" fill="#1818d8" stroke="#141414" stroke-width="1.2"/><circle cx="1260.4" cy="267.1" r="4.3" fill="#e028e0" stroke="#141414" stroke-width="1.2"/><circle cx="1417.2" cy="114.5" r="4.3" fill="#ee1a1a" stroke="#141414" stroke-width="1.2"/><circle cx="1348.7" cy="129.3" r="4.3" fill="#a84050" stroke="#141414" stroke-width="1.2"/><circle cx="1286.2" cy="138.2" r="4.3" fill="#b86070" stroke="#141414" stroke-width="1.2"/><circle cx="1265.5" cy="102.0" r="4.3" fill="#a06a40" stroke="#141414" stroke-width="1.2"/><circle cx="1263.0" cy="104.4" r="4.3" fill="#a87440" stroke="#141414" stroke-width="1.2"/><circle cx="1217.5" cy="98.3" r="4.3" fill="#d8a040" stroke="#141414" stroke-width="1.2"/><circle cx="1231.4" cy="108.2" r="4.3" fill="#7a5540" stroke="#141414" stroke-width="1.2"/><circle cx="1224.8" cy="110.0" r="4.3" fill="#8a6048" stroke="#141414" stroke-width="1.2"/><circle cx="1237.0" cy="112.0" r="4.3" fill="#805a40" stroke="#141414" stroke-width="1.2"/><circle cx="1208.4" cy="113.3" r="4.3" fill="#c09070" stroke="#141414" stroke-width="1.2"/><circle cx="1226.2" cy="115.2" r="4.3" fill="#d0a080" stroke="#141414" stroke-width="1.2"/><circle cx="1234.2" cy="116.2" r="4.3" fill="#c89878" stroke="#141414" stroke-width="1.2"/><circle cx="1203.2" cy="120.4" r="4.3" fill="#b08068" stroke="#141414" stroke-width="1.2"/><circle cx="1208.4" cy="119.4" r="4.3" fill="#c8a088" stroke="#141414" stroke-width="1.2"/><circle cx="1213.5" cy="119.4" r="4.3" fill="#c09070" stroke="#141414" stroke-width="1.2"/><circle cx="1220.6" cy="120.4" r="4.3" fill="#d09878" stroke="#141414" stroke-width="1.2"/><circle cx="1237.5" cy="120.4" r="4.3" fill="#e8a888" stroke="#141414" stroke-width="1.2"/><circle cx="1188.2" cy="122.7" r="4.3" fill="#f0c0a0" stroke="#141414" stroke-width="1.2"/><circle cx="1197.6" cy="128.4" r="4.3" fill="#6a5040" stroke="#141414" stroke-width="1.2"/><circle cx="1185.5" cy="131.5" r="4.3" fill="#f0c0a8" stroke="#141414" stroke-width="1.2"/></svg>
<div style="position:absolute;left:1356.00px;top:352.50px;width:191.00px;height:126.00px;background:#1c1c1c;"></div>
<div style="position:absolute;left:1357.5px;top:354px;width:188px;height:122px;box-sizing:border-box;border:1.5px solid #8a7a70;background:linear-gradient(135deg,#f98c36,#ff6a2a 45%,#ff4c26 100%);overflow:hidden;"></div>
<svg style="position:absolute;left:1359px;top:355.5px;" width="185" height="119" viewBox="1359 355.5 185 119"><rect x="1383.5" y="390.2" width="13" height="13" fill="none" stroke="#f6f0ea" stroke-width="1.8"/><rect x="1362.5" y="420.2" width="13" height="13" fill="none" stroke="#f6f0ea" stroke-width="1.8"/><rect x="1368.7" y="428.4" width="13" height="13" fill="none" stroke="#f6f0ea" stroke-width="1.8"/><rect x="1376.5" y="439.5" width="13" height="13" fill="none" stroke="#f6f0ea" stroke-width="1.8"/><rect x="1444.3" y="407.4" width="13" height="13" fill="none" stroke="#f6f0ea" stroke-width="1.8"/><rect x="1462.3" y="420.2" width="13" height="13" fill="none" stroke="#f6f0ea" stroke-width="1.8"/><rect x="1448.3" y="443.2" width="13" height="13" fill="none" stroke="#f6f0ea" stroke-width="1.8"/><rect x="1481.3" y="371.0" width="13" height="13" fill="none" stroke="#f6f0ea" stroke-width="1.8"/><rect x="1527.1" y="372.2" width="13" height="13" fill="none" stroke="#f6f0ea" stroke-width="1.8"/><rect x="1526.4" y="406.2" width="13" height="13" fill="none" stroke="#f6f0ea" stroke-width="1.8"/><circle cx="1369.5" cy="417.1" r="4.5" fill="#c08868" stroke="#1a1a1a" stroke-width="1.3"/><circle cx="1383.3" cy="409.5" r="4.5" fill="#c08868" stroke="#1a1a1a" stroke-width="1.3"/><circle cx="1402.3" cy="420.3" r="4.5" fill="#c08868" stroke="#1a1a1a" stroke-width="1.3"/><circle cx="1413.4" cy="409.5" r="4.5" fill="#c08868" stroke="#1a1a1a" stroke-width="1.3"/><circle cx="1431.3" cy="411.5" r="4.5" fill="#f0b090" stroke="#1a1a1a" stroke-width="1.3"/><circle cx="1441.2" cy="417.4" r="4.5" fill="#c08868" stroke="#1a1a1a" stroke-width="1.3"/><circle cx="1446.9" cy="378.4" r="4.5" fill="#c08868" stroke="#1a1a1a" stroke-width="1.3"/><circle cx="1453.3" cy="429.2" r="4.5" fill="#c08868" stroke="#1a1a1a" stroke-width="1.3"/><circle cx="1518.3" cy="403.1" r="4.5" fill="#c08868" stroke="#1a1a1a" stroke-width="1.3"/><circle cx="1533.6" cy="441.0" r="4.5" fill="#f0a080" stroke="#1a1a1a" stroke-width="1.3"/><circle cx="1540.3" cy="418.4" r="4.5" fill="#c08868" stroke="#1a1a1a" stroke-width="1.3"/><circle cx="1544.0" cy="373.3" r="4.5" fill="#c08868" stroke="#1a1a1a" stroke-width="1.3"/></svg>
<div style="position:absolute;left:1310.50px;top:485.50px;width:237.00px;height:26.00px;background:#2c2c2c;"></div>
<div class="t" style="left:1311.80px;top:488.98px;font-size:19.04px;line-height:19.04px;color:#f4f4f4;transform:scaleX(0.9690);-webkit-text-stroke:0.29px #f4f4f4;">RGB Triplet: 217, 140, 94</div>
</body></html>
